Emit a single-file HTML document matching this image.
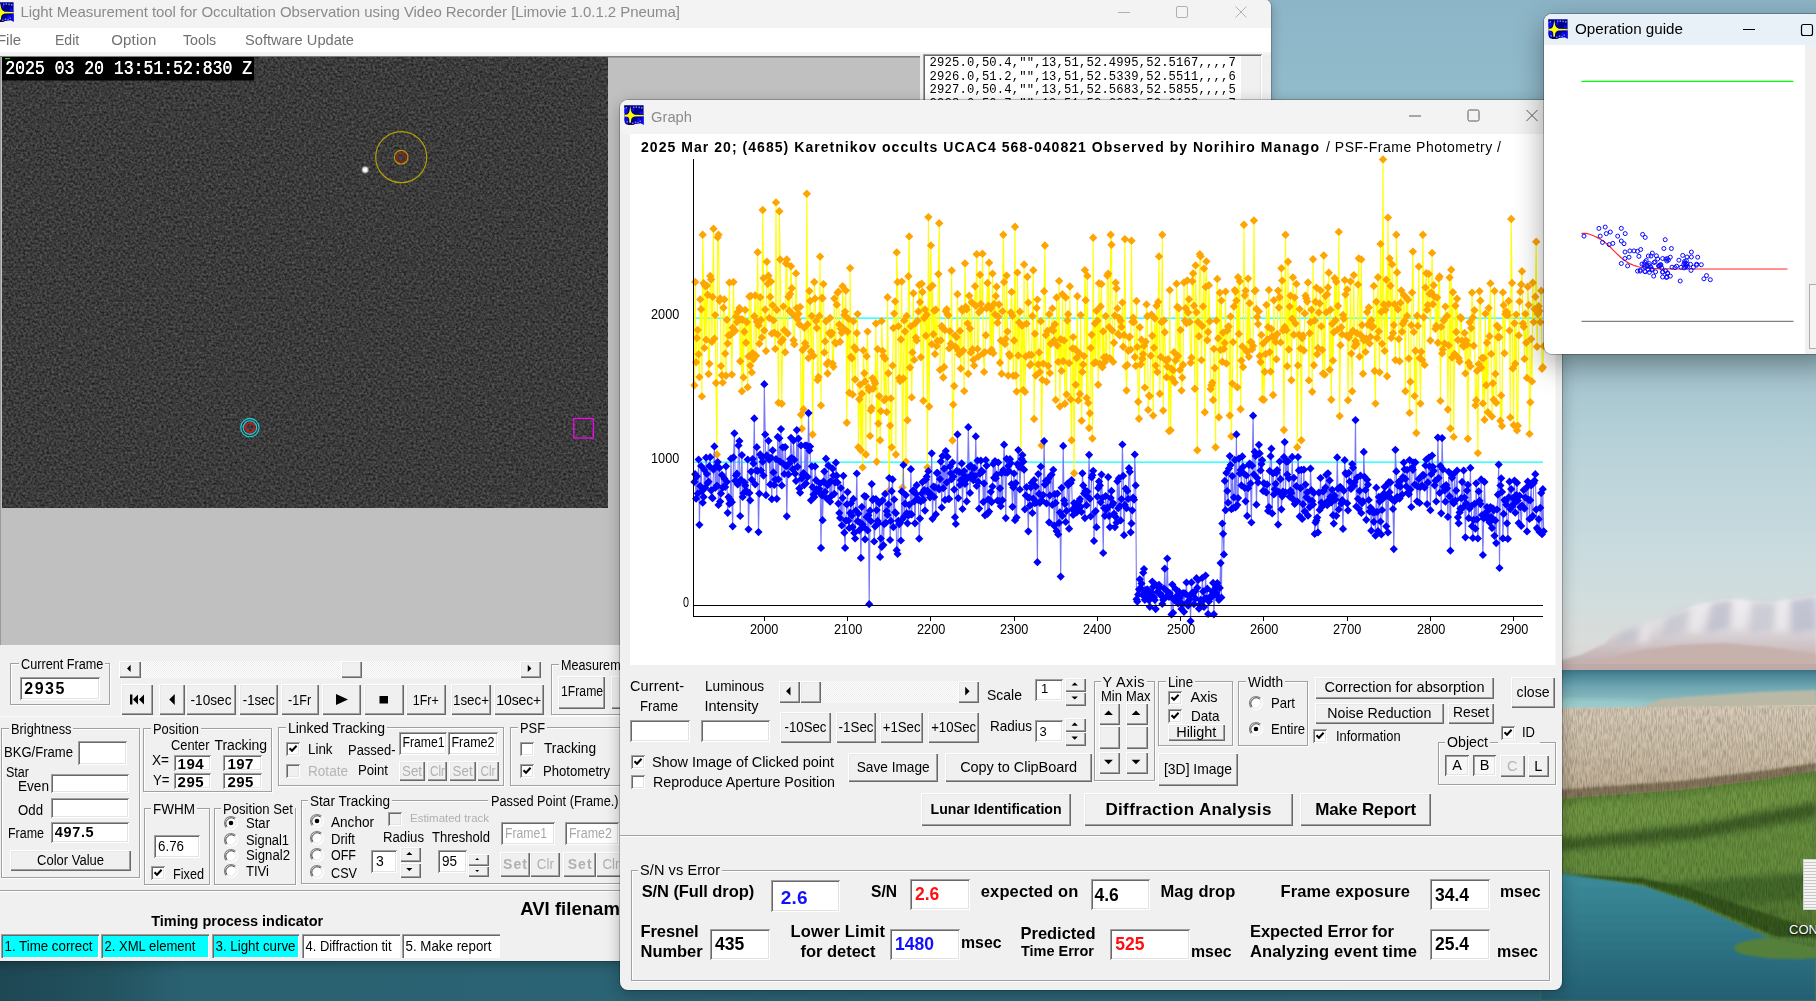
<!DOCTYPE html><html><head><meta charset="utf-8"><title>Limovie</title><style>
*{box-sizing:border-box;margin:0;padding:0}
html,body{width:1816px;height:1001px;overflow:hidden;background:#2b6373;font-family:"Liberation Sans",sans-serif;font-size:13px;}
body{position:relative}
div,svg{position:absolute}
span{display:block;white-space:nowrap}
.t{white-space:nowrap}
.btn{background:#f0f0f0;box-shadow:inset 1px 1px 0 #fff,inset -1px -1px 0 #696969,inset -2px -2px 0 #a0a0a0,inset 2px 2px 0 #e8e8e8;text-align:center;white-space:nowrap;overflow:hidden}
.btn span{width:100%;text-align:center}
.btn.pr{background:#f7f7f7;box-shadow:inset 1px 1px 0 #696969,inset -1px -1px 0 #fff,inset 2px 2px 0 #a0a0a0,inset -2px -2px 0 #e3e3e3}
.inp{background:#fff;box-shadow:inset 1px 1px 0 #a0a0a0,inset -1px -1px 0 #fff,inset 2px 2px 0 #696969,inset -2px -2px 0 #e3e3e3;overflow:hidden;white-space:nowrap;padding:2px}
.inp span{position:relative}
.inp.i2{box-shadow:inset 1px 1px 0 #a0a0a0,inset 2px 2px 0 #696969,inset -1px -1px 0 #fff}
.grp{border:1px solid #a0a0a0;box-shadow:1px 1px 0 #fff,inset 1px 1px 0 #fff}
.win{background:#f0f0f0;overflow:hidden;will-change:transform}
.sb{background:#f6f6f6;background-image:conic-gradient(#fff 25%,#ececec 0 50%,#fff 0 75%,#ececec 0);background-size:2px 2px}
</style></head><body><svg style="left:0;top:0" width="1816" height="1001" viewBox="0 0 1816 1001"><defs>
<linearGradient id="sky" x1="0" y1="0" x2="0" y2="1">
<stop offset="0" stop-color="#8cb5c7"/><stop offset="0.10" stop-color="#92bbcc"/><stop offset="0.355" stop-color="#9fc1cc"/>
<stop offset="0.45" stop-color="#b8d2d9"/><stop offset="0.55" stop-color="#c9dbde"/><stop offset="0.60" stop-color="#d2dddd"/><stop offset="0.64" stop-color="#d9dcda"/><stop offset="0.67" stop-color="#dcd5d3"/><stop offset="1" stop-color="#dcd5d3"/>
</linearGradient>
<linearGradient id="mt" x1="0" y1="0" x2="0" y2="1"><stop offset="0" stop-color="#eeecee"/><stop offset="0.45" stop-color="#dcd8dc"/><stop offset="0.75" stop-color="#c9babb"/><stop offset="1" stop-color="#bca7a6"/></linearGradient>
<linearGradient id="w1" x1="0" y1="0" x2="0" y2="1"><stop offset="0" stop-color="#3c7386"/><stop offset="0.12" stop-color="#4a8798"/><stop offset="0.4" stop-color="#6fa6b1"/><stop offset="0.8" stop-color="#8ebdc1"/><stop offset="1" stop-color="#9cc5c6"/></linearGradient>
<linearGradient id="tan" x1="0" y1="0" x2="0" y2="1"><stop offset="0" stop-color="#d8ccb8"/><stop offset="0.5" stop-color="#cdbea7"/><stop offset="0.8" stop-color="#c3b299"/><stop offset="1" stop-color="#b4a289"/></linearGradient>
<linearGradient id="gr" x1="0" y1="0" x2="0" y2="1"><stop offset="0" stop-color="#5f843a"/><stop offset="0.35" stop-color="#4c6f2c"/><stop offset="0.5" stop-color="#63883c"/><stop offset="1" stop-color="#466a2a"/></linearGradient>
<linearGradient id="w2" x1="0" y1="0" x2="0" y2="1"><stop offset="0" stop-color="#3d8d9b"/><stop offset="0.5" stop-color="#2f7687"/><stop offset="1" stop-color="#245f72"/></linearGradient>
<linearGradient id="bot" x1="0" y1="0" x2="1" y2="0"><stop offset="0" stop-color="#1e4754"/><stop offset="0.07" stop-color="#23525f"/><stop offset="0.12" stop-color="#2a6272"/><stop offset="1" stop-color="#2c6677"/></linearGradient>
<filter id="bl1"><feGaussianBlur stdDeviation="0.7"/></filter>
<filter id="grs" x="0" y="0" width="100%" height="100%" color-interpolation-filters="sRGB"><feTurbulence type="fractalNoise" baseFrequency="0.8 0.12" numOctaves="2" seed="5"/><feColorMatrix type="matrix" values="0 0 0 0 0  0 0 0 0 0  0 0 0 0 0  1.6 0 0 0 -0.55"/></filter>
<clipPath id="grclip"><polygon points="1540,708 1816,705 1816,948 1770,938 1732,921 1690,902 1644,886 1580,875 1540,871"/></clipPath>
<filter id="bl2"><feGaussianBlur stdDeviation="1.2"/></filter>
<filter id="bl4"><feGaussianBlur stdDeviation="3"/></filter>
</defs><rect x="0" y="0" width="1816" height="1001" fill="url(#sky)"/><g filter="url(#bl2)"><polygon points="1540,668 1562,660 1580,655 1604,644 1614,634 1622,631 1640,626 1666,617 1690,607 1710,602 1722,599 1732,599 1750,601 1776,602 1800,597 1816,595 1816,672 1540,672" fill="url(#mt)"/></g><g filter="url(#bl4)" opacity=".75"><polygon points="1622,632 1640,627 1636,640 1612,648" fill="#bfc0cb"/><polygon points="1666,618 1690,608 1684,632 1660,640" fill="#c3c4cf"/><polygon points="1712,603 1732,600 1728,628 1706,634" fill="#b9bccb"/><polygon points="1752,602 1776,603 1772,630 1750,634" fill="#c4c6d1"/><polygon points="1790,600 1816,596 1816,630 1792,634" fill="#b6bacb"/><polygon points="1642,627 1652,623 1648,642 1638,645" fill="#e9e7ea"/><polygon points="1694,607 1706,603 1700,630 1690,633" fill="#ecebee"/><polygon points="1736,600 1748,601 1744,628 1734,629" fill="#eeedf0"/><polygon points="1778,603 1788,601 1786,630 1776,631" fill="#ecebee"/></g><polygon filter="url(#bl2)" points="1540,669 1600,660 1640,650 1680,645 1723,643 1770,647 1816,654 1816,672 1540,672" fill="#c7b1ad"/><rect x="1540" y="664" width="276" height="7" fill="#bda8a6" opacity=".7" filter="url(#bl1)"/><rect x="1540" y="670" width="276" height="42" fill="url(#w1)"/><ellipse filter="url(#bl4)" cx="1590" cy="706" rx="70" ry="7" fill="#9fd0d0" opacity=".7"/><polygon filter="url(#bl2)" points="1660,699 1700,696 1760,692 1816,690 1816,710 1640,709" fill="#b9b9a6"/><polygon points="1540,708 1816,705 1816,773 1760,781 1680,791 1540,801" fill="url(#tan)"/><polygon filter="url(#bl2)" points="1540,791 1680,781 1760,771 1816,763 1816,773 1760,781 1680,791 1540,801" fill="#86765b"/><polygon points="1540,800 1680,790 1760,780 1816,771 1816,1001 1540,1001" fill="#5e8439"/><g filter="url(#bl4)"><polygon points="1540,806 1680,796 1816,778 1816,800 1700,822 1540,838" fill="#6f9643"/><polygon points="1540,842 1700,824 1816,802 1816,816 1700,838 1540,852" fill="#3f6126"/><polygon points="1540,856 1700,842 1816,822 1816,870 1700,880 1540,870" fill="#668e3d"/><polygon points="1640,886 1700,880 1816,872 1816,905 1740,912 1690,900" fill="#456a2a"/><polygon points="1700,905 1816,900 1816,940 1770,935" fill="#547a33"/></g><polygon filter="url(#bl2)" points="1540,871 1580,875 1644,886 1690,902 1732,921 1770,938 1816,948 1816,1001 1540,1001" fill="url(#w2)"/><polygon filter="url(#bl2)" points="1560,874 1644,884 1690,899 1732,918 1780,938 1816,944 1816,930 1740,905 1690,888 1640,878" fill="#35561f"/><ellipse filter="url(#bl2)" cx="1790" cy="948" rx="56" ry="11" fill="#55803a"/><rect x="1540" y="706" width="276" height="250" filter="url(#grs)" opacity=".26" clip-path="url(#grclip)"/><rect x="0" y="955" width="1540" height="46" fill="url(#bot)"/></svg><div class="" style="left:1803.0px;top:859.0px;width:20.0px;height:51.0px;background:#f4f4f4;border:1px solid #d0d0d0;background-image:repeating-linear-gradient(#f4f4f4 0 2px,#c8c8c8 2px 3px);"></div><div class="t" style="left:1789.0px;top:920.5px;height:17px;line-height:17px;font-size:13px;color:#fff;text-shadow:0 1px 2px #000;">CON</div><div class="win" style="left:-8px;top:-1px;width:1279px;height:962px;border-radius:8px;box-shadow:0 0 0 1px rgba(0,0,0,.18),0 3px 12px rgba(0,0,0,.28);"><div style="left:8px;top:1px;width:1271px;height:961px"><div class="" style="left:-8.0px;top:-1.0px;width:1280.0px;height:28.5px;background:#f3f3f3;"></div><div class="" style="left:-8.0px;top:27.5px;width:1280.0px;height:24.0px;background:#fff;"></div><div class="" style="left:-8.0px;top:51.5px;width:1280.0px;height:6.0px;background:linear-gradient(#f6f6f6,#ececec);"></div><svg style="left:-6px;top:1.5px" width="20" height="20" viewBox="0 0 20 20"><defs><clipPath id="icl"><path d="M0.5,0.3H19.6V19.8L17,18.2 11,19 9,19.8H4.5Q0.5,19.5 0.5,16Z"/></clipPath></defs><g clip-path="url(#icl)"><rect x="0" y="0" width="20" height="20" fill="#00008e"/><g fill="#0a0aff"><circle cx="1.8" cy="6" r="2.4"/><circle cx="8.8" cy="4.6" r="1.3"/><circle cx="17.3" cy="8" r="1.8"/><circle cx="2.2" cy="14.2" r="2.2"/><circle cx="15" cy="15" r="2"/><rect x="17.4" y="12" width="2.6" height="8"/><circle cx="12" cy="17.3" r="1.2"/></g><g fill="#7c86e8"><rect x="1.5" y="2" width="1.5" height="1.6"/><rect x="9" y="1.6" width="1.4" height="1.5"/><rect x="11.6" y="1.3" width="1.4" height="1.5"/><rect x="14.4" y="1.6" width="1.5" height="1.6"/><rect x="17" y="2" width="1.5" height="1.6"/><rect x="2.4" y="16.2" width="1.6" height="1.4"/><rect x="8" y="17.6" width="1.5" height="1.3"/><rect x="10.8" y="16.6" width="1.4" height="1.3"/><rect x="13.4" y="16.8" width="1.4" height="1.3"/><rect x="15.6" y="15.6" width="1.4" height="1.3"/></g><rect x="4" y="19" width="7" height="1" fill="#000"/><rect x="0" y="0" width="1.2" height="3" fill="#000"/><path d="M0,10.1 L3.2,9.6 Q5.2,8.6 5.5,6 L6.2,1 L7.1,6 Q7.6,8.8 10.5,9.7 L20,10.0 L20,11.3 L10.5,11.5 Q7.8,12.1 7.3,14 L6.8,17.8 L5.4,17.8 L5.2,14 Q4.8,12.2 3.2,11.7 L0,11.5 Z" fill="#ffff00"/></g></svg><div class="t" style="left:20.4px;top:1.6px;height:20px;line-height:20px;font-size:15px;color:#8b8b8b;letter-spacing:-0.059px;">Light Measurement tool for Occultation Observation using Video Recorder [Limovie 1.0.1.2 Pneuma]</div><div class="t" style="left:-3.0px;top:30.0px;height:20px;line-height:20px;font-size:15px;color:#707070;letter-spacing:-0.057px;">File</div><div class="t" style="left:54.5px;top:30.0px;height:20px;line-height:20px;font-size:15px;color:#707070;transform:scaleX(0.9363);transform-origin:left center;">Edit</div><div class="t" style="left:111.2px;top:30.0px;height:20px;line-height:20px;font-size:15px;color:#707070;letter-spacing:0.201px;">Option</div><div class="t" style="left:182.8px;top:30.0px;height:20px;line-height:20px;font-size:15px;color:#707070;transform:scaleX(0.9481);transform-origin:left center;">Tools</div><div class="t" style="left:245.0px;top:30.0px;height:20px;line-height:20px;font-size:15px;color:#707070;transform:scaleX(0.9756);transform-origin:left center;">Software Update</div><svg style="left:0;top:0" width="1816" height="200" viewBox="0 0 1816 200" fill="none" stroke="#b0b0b0" stroke-width="1"><path d="M1118 12.5 h12"/><rect x="1176.5" y="6.5" width="11" height="11" rx="1.5"/><path d="M1235.5 6.5 l11 11 M1246.5 6.5 l-11 11"/></svg><div class="" style="left:-1.0px;top:56.0px;width:920.5px;height:588.5px;background:#c0c0c0;box-shadow:inset 1px 1px 0 #808080, inset 2px 2px 0 #9a9a9a;"></div><svg style="left:1.5px;top:57px" width="606.0" height="451" viewBox="0 0 606.0 451"><defs><filter id="nz" x="0" y="0" width="100%" height="100%" color-interpolation-filters="sRGB">
<feTurbulence type="fractalNoise" baseFrequency="0.42" numOctaves="2" seed="7" result="n"/>
<feColorMatrix type="matrix" values="0.36 0 0 0 0.052  0.36 0 0 0 0.052  0.36 0 0 0 0.052  0 0 0 0 1"/>
</filter>
<radialGradient id="star"><stop offset="0" stop-color="#fff"/><stop offset="0.45" stop-color="#fff" stop-opacity=".95"/><stop offset="1" stop-color="#fff" stop-opacity="0"/></radialGradient>
</defs><rect x="0" y="0" width="606.0" height="451" fill="#3a3a3a"/><rect x="0" y="0" width="606.0" height="451" filter="url(#nz)"/><rect x="0" y="0" width="252" height="23.5" fill="#000"/><rect x="3" y="1" width="5" height="1.2" fill="#20d020"/><circle cx="363.2" cy="112.80000000000001" r="4.2" fill="url(#star)"/><circle cx="399.2" cy="100.19999999999999" r="25.5" fill="none" stroke="#b0a200" stroke-width="1.2"/><circle cx="399.2" cy="100.19999999999999" r="6.8" fill="none" stroke="#b0a200" stroke-width="1.2"/><circle cx="399.2" cy="100.19999999999999" r="4.6" fill="none" stroke="#b81414" stroke-width="1.3"/><circle cx="247.9" cy="370.6" r="9.2" fill="none" stroke="#18d4dc" stroke-width="1.1"/><circle cx="247.9" cy="370.6" r="6.8" fill="none" stroke="#18d4dc" stroke-width="1.1"/><circle cx="247.9" cy="370.6" r="4.4" fill="none" stroke="#e01010" stroke-width="1.6"/><rect x="571.8" y="361.5" width="19.5" height="19.5" fill="none" stroke="#ff00ff" stroke-width="1.2"/></svg><div class="t" style="left:4.5px;top:57.1px;height:23px;line-height:23px;font-size:17.5px;color:#fff;font-family:'Liberation Mono',monospace;transform:scaleY(1.12) scaleX(0.9408);transform-origin:left center;text-shadow:0.4px 0 0 #fff;">2025 03 20 13:51:52:830 Z</div><div class="inp" style="left:923.0px;top:54.0px;width:339.0px;height:60.0px;"></div><div class="" style="left:1241.0px;top:56.0px;width:19.0px;height:50.0px;background:#f0f0f0;"></div><div class="t" style="left:929.6px;top:55.4px;height:16px;line-height:16px;font-size:12.2px;color:#000;font-family:'Liberation Mono',monospace;letter-spacing:0.156px;">2925.0,50.4,"",13,51,52.4995,52.5167,,,,7</div><div class="t" style="left:929.6px;top:68.9px;height:16px;line-height:16px;font-size:12.2px;color:#000;font-family:'Liberation Mono',monospace;letter-spacing:0.156px;">2926.0,51.2,"",13,51,52.5339,52.5511,,,,6</div><div class="t" style="left:929.6px;top:82.4px;height:16px;line-height:16px;font-size:12.2px;color:#000;font-family:'Liberation Mono',monospace;letter-spacing:0.156px;">2927.0,50.4,"",13,51,52.5683,52.5855,,,,5</div><div class="t" style="left:929.6px;top:95.9px;height:16px;line-height:16px;font-size:12.2px;color:#000;font-family:'Liberation Mono',monospace;letter-spacing:0.156px;">2928.0,50.7,"",13,51,52.6027,52.6199,,,,7</div><div class="grp" style="left:10.2px;top:662.6px;width:99.4px;height:42.6px;"></div><div class="" style="left:18.6px;top:655.6px;width:86.4px;height:16.0px;position:absolute;background:#f0f0f0;"></div><div class="t" style="left:20.6px;top:654.6px;height:18px;line-height:18px;font-size:14px;color:#000;transform:scaleX(0.9053);transform-origin:left center;">Current Frame</div><div class="inp" style="left:20.3px;top:676.6px;width:79.3px;height:23.4px;background:#fff;"><span style="font-size:16px;color:#000;line-height:19.4px;padding-left:2px;font-weight:bold;letter-spacing:1.469px;">2935</span></div><div class="sb" style="left:119.3px;top:660.8px;width:422.0px;height:16.8px;"></div><div class="btn" style="left:119.3px;top:660.8px;width:21.7px;height:16.8px;"><svg style="position:absolute;left:0px;top:0px;left:0;top:0;" width="21.700000000000003" height="16.800000000000068" viewBox="0 0 21.700000000000003 16.800000000000068"><polygon points="8.05,7.400000000000034 11.650000000000002,3.800000000000034 11.650000000000002,11.000000000000034" fill="#000"/></svg></div><div class="btn" style="left:520.2px;top:660.8px;width:21.1px;height:16.8px;"><svg style="position:absolute;left:0px;top:0px;left:0;top:0;" width="21.09999999999991" height="16.800000000000068" viewBox="0 0 21.09999999999991 16.800000000000068"><polygon points="11.349999999999955,7.400000000000034 7.749999999999955,3.800000000000034 7.749999999999955,11.000000000000034" fill="#000"/></svg></div><div class="btn" style="left:341.4px;top:660.8px;width:20.8px;height:16.8px;"></div><div class="btn" style="left:121.2px;top:684.0px;width:32.1px;height:31.4px;"><svg style="position:absolute;left:0px;top:0px;left:0;top:0;" width="32" height="31" viewBox="0 0 32 31"><rect x="9" y="10.5" width="2.4" height="10" fill="#000"/><polygon points="12.0,15.5 17.0,10.5 17.0,20.5" fill="#000"/><polygon points="18.0,15.5 23.0,10.5 23.0,20.5" fill="#000"/></svg></div><div class="btn" style="left:158.6px;top:684.0px;width:26.8px;height:31.4px;"><svg style="position:absolute;left:0px;top:0px;left:0;top:0;" width="27" height="31" viewBox="0 0 27 31"><polygon points="10.25,15.5 15.75,10.0 15.75,21.0" fill="#000"/></svg></div><div class="btn" style="left:186.0px;top:684.0px;width:50.0px;height:31.4px;"><span style="font-size:14px;color:#000;line-height:32.6px;transform:scaleX(0.9757);transform-origin:center center;">-10sec</span></div><div class="btn" style="left:238.8px;top:684.0px;width:39.6px;height:31.4px;"><span style="font-size:14px;color:#000;line-height:32.6px;transform:scaleX(0.9347);transform-origin:center center;">-1sec</span></div><div class="btn" style="left:281.4px;top:684.0px;width:37.2px;height:31.4px;"><span style="font-size:14px;color:#000;line-height:32.6px;transform:scaleX(0.8963);transform-origin:center center;">-1Fr</span></div><div class="btn" style="left:321.5px;top:684.0px;width:39.7px;height:31.4px;"><svg style="position:absolute;left:0px;top:0px;left:0;top:0;" width="40" height="31" viewBox="0 0 40 31"><polygon points="14,10 14,21 26,15.5" fill="#000"/></svg></div><div class="btn" style="left:363.6px;top:684.0px;width:40.2px;height:31.4px;"><svg style="position:absolute;left:0px;top:0px;left:0;top:0;" width="40" height="31" viewBox="0 0 40 31"><rect x="15.5" y="12" width="8.5" height="7.5" fill="#000"/></svg></div><div class="btn" style="left:406.4px;top:684.0px;width:39.6px;height:31.4px;"><span style="font-size:14px;color:#000;line-height:32.6px;transform:scaleX(0.8911);transform-origin:center center;">1Fr+</span></div><div class="btn" style="left:451.0px;top:684.0px;width:40.0px;height:31.4px;"><span style="font-size:14px;color:#000;line-height:32.6px;transform:scaleX(0.9537);transform-origin:center center;">1sec+</span></div><div class="btn" style="left:494.0px;top:684.0px;width:49.6px;height:31.4px;"><span style="font-size:14px;color:#000;line-height:32.6px;letter-spacing:-0.107px;margin-left:-0.053px;">10sec+</span></div><div class="grp" style="left:550.5px;top:663.8px;width:149.5px;height:51.2px;"></div><div class="" style="left:558.7px;top:656.8px;width:81.2px;height:16.0px;position:absolute;background:#f0f0f0;"></div><div class="t" style="left:560.7px;top:655.8px;height:18px;line-height:18px;font-size:14px;color:#000;transform:scaleX(0.9019);transform-origin:left center;">Measurement</div><div class="btn" style="left:557.5px;top:676.0px;width:47.5px;height:33.0px;"><span style="font-size:14px;color:#000;line-height:30.0px;transform:scaleX(0.8707);transform-origin:center center;">1Frame</span></div><div class="btn" style="left:610.6px;top:676.0px;width:49.4px;height:33.0px;"><span style="font-size:14px;color:#000;line-height:33.0px;">Dat</span></div><div class="" style="left:-2.0px;top:716.4px;width:640.0px;height:1.0px;background:#fbfbfb;"></div><div class="grp" style="left:1.0px;top:727.6px;width:138.7px;height:150.9px;"></div><div class="" style="left:8.6px;top:720.6px;width:64.5px;height:16.0px;position:absolute;background:#f0f0f0;"></div><div class="t" style="left:10.6px;top:719.6px;height:18px;line-height:18px;font-size:14px;color:#000;transform:scaleX(0.9147);transform-origin:left center;">Brightness</div><div class="t" style="left:3.5px;top:743.0px;height:18px;line-height:18px;font-size:14px;color:#000;transform:scaleX(0.9336);transform-origin:left center;">BKG/Frame</div><div class="inp" style="left:78.0px;top:741.4px;width:49.2px;height:23.6px;background:#fff;"></div><div class="t" style="left:5.6px;top:763.0px;height:18px;line-height:18px;font-size:14px;color:#000;transform:scaleX(0.8958);transform-origin:left center;">Star</div><div class="t" style="left:18.0px;top:777.0px;height:18px;line-height:18px;font-size:14px;color:#000;transform:scaleX(0.9715);transform-origin:left center;">Even</div><div class="inp" style="left:50.7px;top:773.7px;width:78.8px;height:19.5px;background:#fff;"></div><div class="t" style="left:18.0px;top:801.0px;height:18px;line-height:18px;font-size:14px;color:#000;transform:scaleX(0.9448);transform-origin:left center;">Odd</div><div class="inp" style="left:50.7px;top:798.0px;width:78.8px;height:19.5px;background:#fff;"></div><div class="t" style="left:8.0px;top:824.0px;height:18px;line-height:18px;font-size:14px;color:#000;transform:scaleX(0.8900);transform-origin:left center;">Frame</div><div class="inp" style="left:50.7px;top:821.8px;width:78.8px;height:21.6px;background:#fff;"><span style="font-size:14.5px;color:#000;line-height:17.6px;padding-left:2px;font-weight:bold;letter-spacing:0.679px;">497.5</span></div><div class="btn" style="left:10.2px;top:850.0px;width:121.1px;height:21.2px;"><span style="font-size:14px;color:#000;line-height:21.2px;transform:scaleX(0.9291);transform-origin:center center;">Color Value</span></div><div class="grp" style="left:143.0px;top:727.6px;width:129.2px;height:64.8px;"></div><div class="" style="left:151.0px;top:720.6px;width:50.0px;height:16.0px;position:absolute;background:#f0f0f0;"></div><div class="t" style="left:153.0px;top:719.6px;height:18px;line-height:18px;font-size:14px;color:#000;transform:scaleX(0.9236);transform-origin:left center;">Position</div><div class="t" style="left:170.6px;top:735.8px;height:18px;line-height:18px;font-size:14px;color:#000;transform:scaleX(0.9162);transform-origin:left center;">Center</div><div class="t" style="left:214.5px;top:735.8px;height:18px;line-height:18px;font-size:14px;color:#000;letter-spacing:-0.095px;">Tracking</div><div class="t" style="left:152.0px;top:750.5px;height:18px;line-height:18px;font-size:14px;color:#000;transform:scaleX(0.9707);transform-origin:left center;">X=</div><div class="t" style="left:152.5px;top:771.0px;height:18px;line-height:18px;font-size:14px;color:#000;transform:scaleX(0.9421);transform-origin:left center;">Y=</div><div class="inp" style="left:173.6px;top:754.5px;width:37.9px;height:16.9px;background:#fff;"><span style="font-size:15px;color:#000;line-height:13.9px;padding-left:2px;font-weight:bold;letter-spacing:0.486px;">194</span></div><div class="inp" style="left:223.4px;top:754.5px;width:38.3px;height:16.9px;background:#fff;"><span style="font-size:15px;color:#000;line-height:13.9px;padding-left:2px;font-weight:bold;letter-spacing:0.486px;">197</span></div><div class="inp" style="left:173.6px;top:772.5px;width:37.9px;height:16.7px;background:#fff;"><span style="font-size:15px;color:#000;line-height:13.7px;padding-left:2px;font-weight:bold;letter-spacing:0.486px;">295</span></div><div class="inp" style="left:223.4px;top:772.5px;width:38.3px;height:16.7px;background:#fff;"><span style="font-size:15px;color:#000;line-height:13.7px;padding-left:2px;font-weight:bold;letter-spacing:0.486px;">295</span></div><div class="grp" style="left:278.0px;top:727.2px;width:225.5px;height:58.5px;"></div><div class="" style="left:286.0px;top:720.2px;width:101.0px;height:16.0px;position:absolute;background:#f0f0f0;"></div><div class="t" style="left:288.0px;top:719.2px;height:18px;line-height:18px;font-size:14px;color:#000;letter-spacing:-0.075px;">Linked Tracking</div><div class="inp" style="left:285.5px;top:741.8px;width:14.0px;height:14.0px;background:#fff;"><svg width="10" height="10" viewBox="0 0 10 10" style="position:absolute;left:2px;top:2px"><path d="M1.5 4.2 L4 6.8 L8.6 1.8" fill="none" stroke="#000" stroke-width="2"/></svg></div><div class="t" style="left:308.0px;top:739.5px;height:18px;line-height:18px;font-size:14px;color:#000;transform:scaleX(0.9539);transform-origin:left center;">Link</div><div class="t" style="left:348.3px;top:740.5px;height:18px;line-height:18px;font-size:14px;color:#000;transform:scaleX(0.9249);transform-origin:left center;">Passed-</div><div class="inp" style="left:398.5px;top:731.8px;width:48.9px;height:22.8px;background:#fff;"><span style="font-size:14px;color:#000;line-height:16.8px;padding-left:1.5px;transform:scaleX(0.8707);transform-origin:1.5px center;">Frame1</span></div><div class="inp" style="left:448.4px;top:731.8px;width:49.2px;height:22.8px;background:#fff;"><span style="font-size:14px;color:#000;line-height:16.8px;padding-left:1.5px;transform:scaleX(0.8915);transform-origin:1.5px center;">Frame2</span></div><div class="inp" style="left:285.5px;top:764.2px;width:14.0px;height:14.0px;background:#f0f0f0;"></div><div class="t" style="left:308.0px;top:761.5px;height:18px;line-height:18px;font-size:14px;color:#b4b4b4;transform:scaleX(0.9697);transform-origin:left center;">Rotate</div><div class="t" style="left:358.0px;top:760.5px;height:18px;line-height:18px;font-size:14px;color:#000;transform:scaleX(0.9401);transform-origin:left center;">Point</div><div class="btn" style="left:398.5px;top:761.0px;width:26.1px;height:20.2px;"><span style="font-size:14px;color:#b0b0b0;line-height:20.2px;transform:scaleX(0.9518);transform-origin:center center;">Set</span></div><div class="btn" style="left:426.6px;top:761.0px;width:20.8px;height:20.2px;"><span style="font-size:14px;color:#b0b0b0;line-height:20.2px;transform:scaleX(0.8388);transform-origin:center center;">Clr</span></div><div class="btn" style="left:449.0px;top:761.0px;width:27.2px;height:20.2px;"><span style="font-size:14px;color:#b0b0b0;line-height:20.2px;transform:scaleX(0.9518);transform-origin:center center;">Set</span></div><div class="btn" style="left:477.2px;top:761.0px;width:21.8px;height:20.2px;"><span style="font-size:14px;color:#b0b0b0;line-height:20.2px;transform:scaleX(0.8388);transform-origin:center center;">Clr</span></div><div class="grp" style="left:510.3px;top:727.2px;width:189.7px;height:58.5px;"></div><div class="" style="left:518.0px;top:720.2px;width:29.0px;height:16.0px;position:absolute;background:#f0f0f0;"></div><div class="t" style="left:520.0px;top:719.2px;height:18px;line-height:18px;font-size:14px;color:#000;transform:scaleX(0.9182);transform-origin:left center;">PSF</div><div class="inp" style="left:520.2px;top:741.8px;width:14.0px;height:14.0px;background:#fff;"></div><div class="t" style="left:544.0px;top:739.0px;height:18px;line-height:18px;font-size:14px;color:#000;transform:scaleX(0.9781);transform-origin:left center;">Tracking</div><div class="inp" style="left:520.2px;top:764.2px;width:14.0px;height:14.0px;background:#fff;"><svg width="10" height="10" viewBox="0 0 10 10" style="position:absolute;left:2px;top:2px"><path d="M1.5 4.2 L4 6.8 L8.6 1.8" fill="none" stroke="#000" stroke-width="2"/></svg></div><div class="t" style="left:543.0px;top:761.5px;height:18px;line-height:18px;font-size:14px;color:#000;transform:scaleX(0.9359);transform-origin:left center;">Photometry</div><div class="grp" style="left:143.6px;top:807.6px;width:66.1px;height:77.1px;"></div><div class="" style="left:151.0px;top:800.6px;width:46.0px;height:16.0px;position:absolute;background:#f0f0f0;"></div><div class="t" style="left:153.0px;top:799.6px;height:18px;line-height:18px;font-size:14px;color:#000;transform:scaleX(0.9647);transform-origin:left center;">FWHM</div><div class="inp" style="left:154.2px;top:835.4px;width:45.4px;height:22.9px;background:#fff;"><span style="font-size:14px;color:#000;line-height:18.9px;padding-left:2px;transform:scaleX(0.9542);transform-origin:2px center;">6.76</span></div><div class="" style="left:148.0px;top:864.0px;width:60.0px;height:20.0px;background:#f0f0f0;"></div><div class="inp" style="left:150.7px;top:866.3px;width:14.0px;height:14.0px;background:#fff;"><svg width="10" height="10" viewBox="0 0 10 10" style="position:absolute;left:2px;top:2px"><path d="M1.5 4.2 L4 6.8 L8.6 1.8" fill="none" stroke="#000" stroke-width="2"/></svg></div><div class="t" style="left:173.0px;top:864.5px;height:18px;line-height:18px;font-size:14px;color:#000;transform:scaleX(0.9055);transform-origin:left center;">Fixed</div><div class="grp" style="left:213.6px;top:807.6px;width:82.4px;height:77.1px;"></div><div class="" style="left:221.0px;top:800.6px;width:74.0px;height:16.0px;position:absolute;background:#f0f0f0;"></div><div class="t" style="left:223.0px;top:799.6px;height:18px;line-height:18px;font-size:14px;color:#000;transform:scaleX(0.9370);transform-origin:left center;">Position Set</div><svg style="position:absolute;left:223.4px;top:815.2px" width="16" height="16" viewBox="0 0 16 16"><circle cx="8" cy="8" r="6" fill="#fff"/><path d="M3.4 12.6 A6.5 6.5 0 0 1 12.6 3.4" fill="none" stroke="#808080" stroke-width="1.2"/><path d="M12.6 3.4 A6.5 6.5 0 0 1 3.4 12.6" fill="none" stroke="#fff" stroke-width="1.2"/><path d="M4.2 11.8 A5.4 5.4 0 0 1 11.8 4.2" fill="none" stroke="#404040" stroke-width="1"/><path d="M11.8 4.2 A5.4 5.4 0 0 1 4.2 11.8" fill="none" stroke="#e3e3e3" stroke-width="1"/><circle cx="8" cy="8" r="2.3" fill="#000"/></svg><div class="t" style="left:245.5px;top:814.0px;height:18px;line-height:18px;font-size:14px;color:#000;transform:scaleX(0.9347);transform-origin:left center;">Star</div><svg style="position:absolute;left:223.4px;top:831.7px" width="16" height="16" viewBox="0 0 16 16"><circle cx="8" cy="8" r="6" fill="#fff"/><path d="M3.4 12.6 A6.5 6.5 0 0 1 12.6 3.4" fill="none" stroke="#808080" stroke-width="1.2"/><path d="M12.6 3.4 A6.5 6.5 0 0 1 3.4 12.6" fill="none" stroke="#fff" stroke-width="1.2"/><path d="M4.2 11.8 A5.4 5.4 0 0 1 11.8 4.2" fill="none" stroke="#404040" stroke-width="1"/><path d="M11.8 4.2 A5.4 5.4 0 0 1 4.2 11.8" fill="none" stroke="#e3e3e3" stroke-width="1"/></svg><div class="t" style="left:245.5px;top:830.5px;height:18px;line-height:18px;font-size:14px;color:#000;transform:scaleX(0.9207);transform-origin:left center;">Signal1</div><svg style="position:absolute;left:223.4px;top:847.5px" width="16" height="16" viewBox="0 0 16 16"><circle cx="8" cy="8" r="6" fill="#fff"/><path d="M3.4 12.6 A6.5 6.5 0 0 1 12.6 3.4" fill="none" stroke="#808080" stroke-width="1.2"/><path d="M12.6 3.4 A6.5 6.5 0 0 1 3.4 12.6" fill="none" stroke="#fff" stroke-width="1.2"/><path d="M4.2 11.8 A5.4 5.4 0 0 1 11.8 4.2" fill="none" stroke="#404040" stroke-width="1"/><path d="M11.8 4.2 A5.4 5.4 0 0 1 4.2 11.8" fill="none" stroke="#e3e3e3" stroke-width="1"/></svg><div class="t" style="left:245.5px;top:846.3px;height:18px;line-height:18px;font-size:14px;color:#000;transform:scaleX(0.9421);transform-origin:left center;">Signal2</div><svg style="position:absolute;left:223.4px;top:863.4px" width="16" height="16" viewBox="0 0 16 16"><circle cx="8" cy="8" r="6" fill="#fff"/><path d="M3.4 12.6 A6.5 6.5 0 0 1 12.6 3.4" fill="none" stroke="#808080" stroke-width="1.2"/><path d="M12.6 3.4 A6.5 6.5 0 0 1 3.4 12.6" fill="none" stroke="#fff" stroke-width="1.2"/><path d="M4.2 11.8 A5.4 5.4 0 0 1 11.8 4.2" fill="none" stroke="#404040" stroke-width="1"/><path d="M11.8 4.2 A5.4 5.4 0 0 1 4.2 11.8" fill="none" stroke="#e3e3e3" stroke-width="1"/></svg><div class="t" style="left:245.5px;top:862.2px;height:18px;line-height:18px;font-size:14px;color:#000;transform:scaleX(0.9336);transform-origin:left center;">TIVi</div><div class="grp" style="left:300.7px;top:799.8px;width:399.3px;height:84.7px;"></div><div class="" style="left:308.0px;top:792.8px;width:84.0px;height:16.0px;position:absolute;background:#f0f0f0;"></div><div class="t" style="left:310.0px;top:791.8px;height:18px;line-height:18px;font-size:14px;color:#000;transform:scaleX(0.9700);transform-origin:left center;">Star Tracking</div><div class="" style="left:488.0px;top:791.0px;width:134.0px;height:17.0px;background:#f0f0f0;"></div><div class="t" style="left:490.5px;top:792.0px;height:18px;line-height:18px;font-size:14px;color:#000;transform:scaleX(0.9104);transform-origin:left center;">Passed Point (Frame.)</div><svg style="position:absolute;left:308.6px;top:812.8px" width="16" height="16" viewBox="0 0 16 16"><circle cx="8" cy="8" r="6" fill="#fff"/><path d="M3.4 12.6 A6.5 6.5 0 0 1 12.6 3.4" fill="none" stroke="#808080" stroke-width="1.2"/><path d="M12.6 3.4 A6.5 6.5 0 0 1 3.4 12.6" fill="none" stroke="#fff" stroke-width="1.2"/><path d="M4.2 11.8 A5.4 5.4 0 0 1 11.8 4.2" fill="none" stroke="#404040" stroke-width="1"/><path d="M11.8 4.2 A5.4 5.4 0 0 1 4.2 11.8" fill="none" stroke="#e3e3e3" stroke-width="1"/><circle cx="8" cy="8" r="2.3" fill="#000"/></svg><div class="t" style="left:330.5px;top:812.6px;height:18px;line-height:18px;font-size:14px;color:#000;transform:scaleX(0.9694);transform-origin:left center;">Anchor</div><svg style="position:absolute;left:308.6px;top:829.7px" width="16" height="16" viewBox="0 0 16 16"><circle cx="8" cy="8" r="6" fill="#fff"/><path d="M3.4 12.6 A6.5 6.5 0 0 1 12.6 3.4" fill="none" stroke="#808080" stroke-width="1.2"/><path d="M12.6 3.4 A6.5 6.5 0 0 1 3.4 12.6" fill="none" stroke="#fff" stroke-width="1.2"/><path d="M4.2 11.8 A5.4 5.4 0 0 1 11.8 4.2" fill="none" stroke="#404040" stroke-width="1"/><path d="M11.8 4.2 A5.4 5.4 0 0 1 4.2 11.8" fill="none" stroke="#e3e3e3" stroke-width="1"/></svg><div class="t" style="left:330.5px;top:829.5px;height:18px;line-height:18px;font-size:14px;color:#000;transform:scaleX(0.9352);transform-origin:left center;">Drift</div><svg style="position:absolute;left:308.6px;top:846.5px" width="16" height="16" viewBox="0 0 16 16"><circle cx="8" cy="8" r="6" fill="#fff"/><path d="M3.4 12.6 A6.5 6.5 0 0 1 12.6 3.4" fill="none" stroke="#808080" stroke-width="1.2"/><path d="M12.6 3.4 A6.5 6.5 0 0 1 3.4 12.6" fill="none" stroke="#fff" stroke-width="1.2"/><path d="M4.2 11.8 A5.4 5.4 0 0 1 11.8 4.2" fill="none" stroke="#404040" stroke-width="1"/><path d="M11.8 4.2 A5.4 5.4 0 0 1 4.2 11.8" fill="none" stroke="#e3e3e3" stroke-width="1"/></svg><div class="t" style="left:330.5px;top:846.3px;height:18px;line-height:18px;font-size:14px;color:#000;transform:scaleX(0.8931);transform-origin:left center;">OFF</div><svg style="position:absolute;left:308.6px;top:863.8px" width="16" height="16" viewBox="0 0 16 16"><circle cx="8" cy="8" r="6" fill="#fff"/><path d="M3.4 12.6 A6.5 6.5 0 0 1 12.6 3.4" fill="none" stroke="#808080" stroke-width="1.2"/><path d="M12.6 3.4 A6.5 6.5 0 0 1 3.4 12.6" fill="none" stroke="#fff" stroke-width="1.2"/><path d="M4.2 11.8 A5.4 5.4 0 0 1 11.8 4.2" fill="none" stroke="#404040" stroke-width="1"/><path d="M11.8 4.2 A5.4 5.4 0 0 1 4.2 11.8" fill="none" stroke="#e3e3e3" stroke-width="1"/></svg><div class="t" style="left:330.5px;top:863.6px;height:18px;line-height:18px;font-size:14px;color:#000;transform:scaleX(0.9032);transform-origin:left center;">CSV</div><div class="inp" style="left:388.0px;top:811.7px;width:14.0px;height:14.0px;background:#f0f0f0;"></div><div class="t" style="left:410.0px;top:810.5px;height:15px;line-height:15px;font-size:11.5px;color:#b0b0b0;letter-spacing:-0.018px;">Estimated track</div><div class="t" style="left:383.0px;top:828.0px;height:18px;line-height:18px;font-size:14px;color:#000;transform:scaleX(0.9408);transform-origin:left center;">Radius</div><div class="t" style="left:431.6px;top:828.0px;height:18px;line-height:18px;font-size:14px;color:#000;transform:scaleX(0.9316);transform-origin:left center;">Threshold</div><div class="inp" style="left:371.0px;top:850.4px;width:26.0px;height:22.4px;background:#fff;"><span style="font-size:14px;color:#000;line-height:18.4px;padding-left:3px;">3</span></div><div class="btn" style="left:400.4px;top:847.4px;width:20.6px;height:15.1px;"><svg style="position:absolute;left:0px;top:0px;left:0;top:0;" width="20.600000000000023" height="15.050000000000068" viewBox="0 0 20.600000000000023 15.050000000000068"><polygon points="9.300000000000011,4.975000000000034 6.200000000000012,8.075000000000035 12.400000000000011,8.075000000000035" fill="#000"/></svg></div><div class="btn" style="left:400.4px;top:862.5px;width:20.6px;height:15.0px;"><svg style="position:absolute;left:0px;top:0px;left:0;top:0;" width="20.600000000000023" height="15.049999999999955" viewBox="0 0 20.600000000000023 15.049999999999955"><polygon points="9.300000000000011,8.074999999999978 6.200000000000012,4.974999999999977 12.400000000000011,4.974999999999977" fill="#000"/></svg></div><div class="inp" style="left:438.0px;top:850.4px;width:29.0px;height:22.4px;background:#fff;"><span style="font-size:14px;color:#000;line-height:18.4px;padding-left:2px;transform:scaleX(0.9632);transform-origin:2px center;">95</span></div><div class="btn" style="left:468.3px;top:853.7px;width:20.4px;height:11.9px;"><svg style="position:absolute;left:0px;top:0px;left:0;top:0;" width="20.399999999999977" height="11.899999999999977" viewBox="0 0 20.399999999999977 11.899999999999977"><polygon points="9.199999999999989,3.9499999999999886 7.199999999999989,5.949999999999989 11.199999999999989,5.949999999999989" fill="#000"/></svg></div><div class="btn" style="left:468.3px;top:865.6px;width:20.4px;height:11.9px;"><svg style="position:absolute;left:0px;top:0px;left:0;top:0;" width="20.399999999999977" height="11.899999999999977" viewBox="0 0 20.399999999999977 11.899999999999977"><polygon points="9.199999999999989,5.949999999999989 7.199999999999989,3.9499999999999886 11.199999999999989,3.9499999999999886" fill="#000"/></svg></div><div class="inp" style="left:501.0px;top:821.6px;width:54.0px;height:23.4px;background:#fff;"><span style="font-size:14px;color:#a8a8a8;line-height:19.4px;padding-left:2px;transform:scaleX(0.8707);transform-origin:2px center;">Frame1</span></div><div class="inp" style="left:565.4px;top:821.6px;width:54.1px;height:23.4px;background:#fff;"><span style="font-size:14px;color:#a8a8a8;line-height:19.4px;padding-left:2px;transform:scaleX(0.8915);transform-origin:2px center;">Frame2</span></div><div class="btn" style="left:500.4px;top:851.8px;width:29.3px;height:25.2px;"><span style="font-size:14px;color:#b0b0b0;line-height:25.2px;font-weight:bold;letter-spacing:1.107px;margin-left:0.553px;">Set</span></div><div class="btn" style="left:529.7px;top:851.8px;width:30.7px;height:25.2px;"><span style="font-size:14px;color:#b0b0b0;line-height:25.2px;transform:scaleX(0.9506);transform-origin:center center;">Clr</span></div><div class="btn" style="left:563.4px;top:851.8px;width:32.6px;height:25.2px;"><span style="font-size:14px;color:#b0b0b0;line-height:25.2px;font-weight:bold;letter-spacing:1.107px;margin-left:0.553px;">Set</span></div><div class="btn" style="left:596.0px;top:851.8px;width:30.0px;height:25.2px;"><span style="font-size:14px;color:#b0b0b0;line-height:25.2px;transform:scaleX(0.9506);transform-origin:center center;">Clr</span></div><div class="" style="left:-2.0px;top:890.0px;width:642.0px;height:2.0px;border-top:1px solid #a0a0a0;border-bottom:1px solid #fff;"></div><div class="t" style="left:520.2px;top:896.9px;height:24px;line-height:24px;font-size:18.5px;color:#000;font-weight:bold;letter-spacing:0.031px;">AVI filename</div><div class="t" style="left:151.2px;top:912.2px;height:19px;line-height:19px;font-size:14.5px;color:#000;font-weight:bold;letter-spacing:-0.007px;">Timing process indicator</div><div class="inp i2" style="left:1.4px;top:934.0px;width:97.6px;height:24.4px;background:#00ffff;"><span style="font-size:14.5px;color:#000;line-height:20.4px;padding-left:1.5px;transform:scaleX(0.9178);transform-origin:1.5px center;">1. Time correct</span></div><div class="inp i2" style="left:101.3px;top:934.0px;width:107.5px;height:24.4px;background:#00ffff;"><span style="font-size:14.5px;color:#000;line-height:20.4px;padding-left:1.5px;transform:scaleX(0.9009);transform-origin:1.5px center;">2. XML element</span></div><div class="inp i2" style="left:211.5px;top:934.0px;width:87.5px;height:24.4px;background:#00ffff;"><span style="font-size:14.5px;color:#000;line-height:20.4px;padding-left:1.5px;transform:scaleX(0.9190);transform-origin:1.5px center;">3. Light curve</span></div><div class="inp i2" style="left:301.7px;top:934.0px;width:98.3px;height:24.4px;background:#fff;"><span style="font-size:14.5px;color:#000;line-height:20.4px;padding-left:1.5px;transform:scaleX(0.8918);transform-origin:1.5px center;">4. Diffraction tit</span></div><div class="inp i2" style="left:401.8px;top:934.0px;width:97.8px;height:24.4px;background:#fff;"><span style="font-size:14.5px;color:#000;line-height:20.4px;padding-left:1.5px;transform:scaleX(0.9199);transform-origin:1.5px center;">5. Make report</span></div></div></div><div class="win" style="left:620px;top:100px;width:942px;height:890px;border-radius:8px;box-shadow:0 0 0 1px rgba(0,0,0,.22),0 4px 16px rgba(0,0,0,.28);"><div style="left:-620px;top:-100px;width:1816px;height:1001px"><div class="" style="left:620.0px;top:100.0px;width:942.0px;height:33.5px;background:#f3f3f3;"></div><svg style="left:624px;top:105px" width="20" height="20" viewBox="0 0 20 20"><defs><clipPath id="icl"><path d="M0.5,0.3H19.6V19.8L17,18.2 11,19 9,19.8H4.5Q0.5,19.5 0.5,16Z"/></clipPath></defs><g clip-path="url(#icl)"><rect x="0" y="0" width="20" height="20" fill="#00008e"/><g fill="#0a0aff"><circle cx="1.8" cy="6" r="2.4"/><circle cx="8.8" cy="4.6" r="1.3"/><circle cx="17.3" cy="8" r="1.8"/><circle cx="2.2" cy="14.2" r="2.2"/><circle cx="15" cy="15" r="2"/><rect x="17.4" y="12" width="2.6" height="8"/><circle cx="12" cy="17.3" r="1.2"/></g><g fill="#7c86e8"><rect x="1.5" y="2" width="1.5" height="1.6"/><rect x="9" y="1.6" width="1.4" height="1.5"/><rect x="11.6" y="1.3" width="1.4" height="1.5"/><rect x="14.4" y="1.6" width="1.5" height="1.6"/><rect x="17" y="2" width="1.5" height="1.6"/><rect x="2.4" y="16.2" width="1.6" height="1.4"/><rect x="8" y="17.6" width="1.5" height="1.3"/><rect x="10.8" y="16.6" width="1.4" height="1.3"/><rect x="13.4" y="16.8" width="1.4" height="1.3"/><rect x="15.6" y="15.6" width="1.4" height="1.3"/></g><rect x="4" y="19" width="7" height="1" fill="#000"/><rect x="0" y="0" width="1.2" height="3" fill="#000"/><path d="M0,10.1 L3.2,9.6 Q5.2,8.6 5.5,6 L6.2,1 L7.1,6 Q7.6,8.8 10.5,9.7 L20,10.0 L20,11.3 L10.5,11.5 Q7.8,12.1 7.3,14 L6.8,17.8 L5.4,17.8 L5.2,14 Q4.8,12.2 3.2,11.7 L0,11.5 Z" fill="#ffff00"/></g></svg><div class="t" style="left:651.0px;top:106.5px;height:20px;line-height:20px;font-size:15.5px;color:#8b8b8b;transform:scaleX(0.9517);transform-origin:left center;">Graph</div><svg style="left:0;top:0" width="1816" height="200" viewBox="0 0 1816 200" fill="none" stroke="#5a5a5a" stroke-width="1"><path d="M1409 116.0 h12"/><rect x="1468.0" y="110.0" width="11" height="11" rx="1.5"/><path d="M1526.5 110.0 l11 11 M1537.5 110.0 l-11 11"/></svg><svg style="left:630px;top:133.5px" width="925.5" height="531.5" viewBox="630 133.5 925.5 531.5"><rect x="630" y="133.5" width="925.5" height="531.5" fill="#fff"/><path d="M693,317.5H1543M693,461.5H1543" stroke="#00ffff" stroke-width="1.25" fill="none"/><path d="M694.4,384.8L695.2,281.5L696.1,361.7L696.9,337.5L697.7,329.5L698.6,353.8L699.4,376.6L700.2,298.9L701.1,308.8L701.9,395.9L702.7,234.3L703.6,282.7L704.4,347.4L705.2,285.6L706.1,339.2L706.9,285.1L707.7,294.3L708.6,373.6L709.4,363.3L710.2,275.4L711.1,279.0L711.9,341.4L712.7,296.4L713.5,228.3L714.4,338.1L715.2,314.6L716.0,382.5L716.9,454.0L717.7,236.8L718.5,234.3L719.4,300.3L720.2,297.9L721.0,365.6L721.9,374.7L722.7,382.1L723.5,307.3L724.4,299.0L725.2,353.1L726.0,375.3L726.9,319.2L727.7,343.0L728.5,334.9L729.4,282.1L730.2,334.5L731.0,333.9L731.9,374.1L732.7,327.2L733.5,281.6L734.4,331.0L735.2,330.2L736.0,316.0L736.9,321.6L737.7,311.5L738.5,310.9L739.4,307.4L740.2,360.8L741.0,318.7L741.9,390.7L742.7,319.2L743.5,376.9L744.4,331.2L745.2,309.4L746.0,342.2L746.9,321.7L747.7,386.8L748.5,355.9L749.4,296.0L750.2,365.1L751.0,295.4L751.8,371.9L752.7,352.6L753.5,358.7L754.3,315.7L755.2,295.0L756.0,355.3L756.8,321.0L757.7,251.7L758.5,324.9L759.3,343.2L760.2,296.8L761.0,319.4L761.8,336.9L762.7,209.5L763.5,277.8L764.3,330.0L765.2,309.1L766.0,350.5L766.8,261.3L767.7,283.2L768.5,275.2L769.3,317.5L770.2,296.4L771.0,281.1L771.8,333.1L772.7,304.8L773.5,319.9L774.3,332.1L775.2,348.4L776.0,201.9L776.8,309.4L777.7,334.0L778.5,402.3L779.3,210.8L780.2,259.0L781.0,341.5L781.8,403.2L782.7,339.0L783.5,305.9L784.3,329.7L785.2,351.7L786.0,263.0L786.8,259.0L787.7,333.0L788.5,296.3L789.3,310.2L790.1,293.4L791.0,265.8L791.8,287.8L792.6,313.7L793.5,339.8L794.3,343.8L795.1,315.9L796.0,272.9L796.8,307.6L797.6,319.1L798.5,313.4L799.3,323.8L800.1,306.4L801.0,414.3L801.8,428.2L802.6,349.5L803.5,408.8L804.3,327.2L805.1,342.8L806.0,345.7L806.8,193.2L807.6,323.9L808.5,357.6L809.3,290.5L810.1,300.5L811.0,351.3L811.8,315.5L812.6,434.0L813.5,355.3L814.3,281.5L815.1,298.1L816.0,320.6L816.8,327.6L817.6,379.6L818.5,376.5L819.3,315.4L820.1,256.1L821.0,404.9L821.8,297.5L822.6,297.7L823.5,283.6L824.3,352.0L825.1,340.9L826.0,320.8L826.8,363.5L827.6,373.0L828.4,361.6L829.3,332.5L830.1,317.4L830.9,334.4L831.8,332.3L832.6,363.1L833.4,366.3L834.3,298.1L835.1,342.1L835.9,343.0L836.8,304.2L837.6,292.2L838.4,291.1L839.3,324.0L840.1,341.2L840.9,328.2L841.8,332.3L842.6,285.8L843.4,327.7L844.3,314.5L845.1,311.1L845.9,290.1L846.8,422.2L847.6,331.3L848.4,318.3L849.3,392.3L850.1,267.6L850.9,356.3L851.8,357.9L852.6,394.0L853.4,320.7L854.3,346.8L855.1,379.0L855.9,349.0L856.8,332.6L857.6,313.6L858.4,446.8L859.3,398.7L860.1,384.3L860.9,449.7L861.8,393.2L862.6,466.9L863.4,349.9L864.3,372.8L865.1,381.0L865.9,454.0L866.7,355.7L867.6,331.1L868.4,386.9L869.2,389.7L870.1,435.4L870.9,409.9L871.7,407.5L872.6,377.6L873.4,388.0L874.2,380.4L875.1,382.7L875.9,323.0L876.7,461.2L877.6,348.6L878.4,423.1L879.2,395.6L880.1,439.7L880.9,410.6L881.7,320.6L882.6,350.4L883.4,355.5L884.2,399.8L885.1,358.3L885.9,398.2L886.7,411.6L887.6,296.7L888.4,372.8L889.2,489.9L890.1,425.1L890.9,397.9L891.7,446.8L892.6,365.1L893.4,327.6L894.2,313.1L895.1,300.9L895.9,454.0L896.7,251.9L897.6,281.6L898.4,325.7L899.2,377.5L900.1,380.6L900.9,339.0L901.7,281.1L902.5,487.0L903.4,378.0L904.2,319.9L905.0,331.0L905.9,461.2L906.7,315.5L907.5,419.7L908.4,275.8L909.2,235.9L910.0,367.1L910.9,325.8L911.7,396.9L912.5,351.9L913.4,292.7L914.2,359.4L915.0,323.0L915.9,337.1L916.7,340.0L917.5,320.2L918.4,311.0L919.2,284.5L920.0,301.6L920.9,356.7L921.7,283.3L922.5,291.5L923.4,400.3L924.2,317.6L925.0,308.9L925.9,335.3L926.7,314.3L927.5,466.9L928.4,216.6L929.2,406.1L930.0,287.3L930.9,244.9L931.7,343.7L932.5,285.1L933.4,333.8L934.2,310.0L935.0,353.5L935.9,309.2L936.7,345.5L937.5,340.4L938.4,273.6L939.2,222.8L940.0,369.4L940.8,339.9L941.7,325.4L942.5,327.6L943.3,377.0L944.2,366.4L945.0,329.5L945.8,310.7L946.7,308.7L947.5,314.1L948.3,314.7L949.2,347.9L950.0,330.7L950.8,343.2L951.7,270.0L952.5,440.0L953.3,404.1L954.2,385.5L955.0,335.0L955.8,346.5L956.7,336.6L957.5,293.8L958.3,350.2L959.2,353.9L960.0,330.4L960.8,368.0L961.7,308.4L962.5,310.2L963.3,350.0L964.2,390.6L965.0,262.9L965.8,306.5L966.7,308.9L967.5,322.9L968.3,373.2L969.2,295.3L970.0,328.1L970.8,352.1L971.7,301.7L972.5,348.7L973.3,359.4L974.2,365.1L975.0,285.7L975.8,305.4L976.7,253.7L977.5,348.4L978.3,356.1L979.1,311.8L980.0,274.2L980.8,303.4L981.6,309.1L982.5,253.2L983.3,352.7L984.1,371.4L985.0,351.6L985.8,334.7L986.6,307.8L987.5,282.5L988.3,305.3L989.1,262.2L990.0,351.0L990.8,308.0L991.6,349.2L992.5,273.1L993.3,352.7L994.1,303.4L995.0,313.9L995.8,295.6L996.6,286.2L997.5,322.3L998.3,316.2L999.1,304.0L1000.0,362.2L1000.8,339.9L1001.6,373.3L1002.5,310.7L1003.3,234.3L1004.1,281.6L1005.0,343.6L1005.8,338.4L1006.6,275.1L1007.5,331.1L1008.3,375.1L1009.1,353.6L1010.0,355.6L1010.8,311.9L1011.6,291.4L1012.5,315.2L1013.3,375.3L1014.1,340.0L1015.0,226.3L1015.8,375.0L1016.6,391.1L1017.4,272.1L1018.3,355.0L1019.1,321.9L1019.9,311.2L1020.8,468.4L1021.6,324.8L1022.4,325.0L1023.3,389.4L1024.1,264.0L1024.9,391.4L1025.8,356.0L1026.6,323.2L1027.4,276.2L1028.3,302.1L1029.1,354.2L1029.9,364.8L1030.8,363.7L1031.6,354.4L1032.4,315.5L1033.3,269.7L1034.1,418.5L1034.9,333.3L1035.8,375.1L1036.6,307.5L1037.4,299.1L1038.3,364.0L1039.1,351.9L1039.9,371.5L1040.8,320.8L1041.6,444.9L1042.4,379.4L1043.3,363.1L1044.1,290.8L1044.9,245.0L1045.8,334.6L1046.6,381.2L1047.4,330.5L1048.3,365.4L1049.1,313.8L1049.9,372.6L1050.8,343.3L1051.6,328.7L1052.4,307.9L1053.3,330.1L1054.1,340.0L1054.9,323.8L1055.7,399.4L1056.6,297.0L1057.4,345.1L1058.2,361.4L1059.1,280.4L1059.9,406.1L1060.7,338.7L1061.6,370.4L1062.4,293.7L1063.2,360.8L1064.1,339.9L1064.9,403.3L1065.7,297.1L1066.6,393.9L1067.4,320.0L1068.2,313.7L1069.1,362.6L1069.9,285.9L1070.7,398.9L1071.6,439.7L1072.4,347.9L1073.2,336.6L1074.1,472.7L1074.9,348.5L1075.7,384.3L1076.6,357.5L1077.4,295.8L1078.2,399.9L1079.1,352.5L1079.9,393.5L1080.7,314.6L1081.6,420.3L1082.4,371.4L1083.2,364.0L1084.1,355.6L1084.9,269.6L1085.7,299.7L1086.6,397.4L1087.4,275.4L1088.2,402.4L1089.1,427.6L1089.9,412.8L1090.7,347.4L1091.6,334.2L1092.4,438.0L1093.2,237.2L1094.0,362.8L1094.9,323.1L1095.7,361.8L1096.5,310.2L1097.4,320.3L1098.2,384.3L1099.0,282.7L1099.9,363.3L1100.7,305.9L1101.5,283.6L1102.4,366.7L1103.2,330.9L1104.0,356.9L1104.9,361.5L1105.7,315.6L1106.5,356.4L1107.4,275.1L1108.2,273.1L1109.0,326.6L1109.9,357.7L1110.7,234.3L1111.5,244.2L1112.4,330.0L1113.2,361.4L1114.0,342.2L1114.9,315.0L1115.7,282.2L1116.5,288.0L1117.4,307.9L1118.2,333.5L1119.0,317.3L1119.9,335.1L1120.7,320.2L1121.5,326.4L1122.4,302.1L1123.2,346.3L1124.0,334.4L1124.9,238.6L1125.7,365.8L1126.5,390.0L1127.4,364.4L1128.2,350.3L1129.0,336.8L1129.8,336.2L1130.7,349.1L1131.5,240.2L1132.3,321.2L1133.2,317.3L1134.0,321.5L1134.8,356.5L1135.7,365.4L1136.5,300.5L1137.3,346.6L1138.2,401.3L1139.0,418.2L1139.8,326.8L1140.7,364.0L1141.5,339.3L1142.3,358.2L1143.2,353.6L1144.0,345.4L1144.8,387.1L1145.7,341.3L1146.5,303.9L1147.3,315.8L1148.2,409.4L1149.0,395.1L1149.8,395.6L1150.7,355.2L1151.5,314.1L1152.3,335.2L1153.2,415.1L1154.0,347.2L1154.8,317.9L1155.7,365.1L1156.5,305.3L1157.3,371.5L1158.2,301.4L1159.0,255.9L1159.8,393.3L1160.7,356.4L1161.5,321.5L1162.3,234.3L1163.2,410.1L1164.0,319.9L1164.8,331.7L1165.7,359.8L1166.5,376.7L1167.3,366.1L1168.1,358.7L1169.0,430.6L1169.8,289.6L1170.6,429.8L1171.5,368.1L1172.3,378.2L1173.1,369.9L1174.0,351.8L1174.8,382.0L1175.6,360.0L1176.5,283.2L1177.3,306.5L1178.1,355.5L1179.0,307.8L1179.8,369.4L1180.6,329.4L1181.5,390.1L1182.3,377.1L1183.1,364.3L1184.0,282.0L1184.8,320.1L1185.6,307.8L1186.5,322.7L1187.3,280.0L1188.1,312.0L1189.0,298.7L1189.8,321.4L1190.6,362.2L1191.5,357.2L1192.3,280.7L1193.1,273.0L1194.0,305.2L1194.8,388.3L1195.6,264.9L1196.5,311.7L1197.3,449.7L1198.1,321.6L1199.0,335.7L1199.8,253.8L1200.6,255.9L1201.5,359.6L1202.3,325.5L1203.1,305.9L1204.0,268.1L1204.8,411.7L1205.6,286.4L1206.4,260.9L1207.3,339.7L1208.1,331.5L1208.9,284.8L1209.8,320.7L1210.6,388.5L1211.4,384.8L1212.3,382.2L1213.1,399.5L1213.9,348.4L1214.8,367.5L1215.6,446.8L1216.4,320.0L1217.3,278.4L1218.1,337.8L1218.9,416.7L1219.8,292.2L1220.6,349.4L1221.4,300.1L1222.3,361.2L1223.1,332.1L1223.9,348.4L1224.8,342.5L1225.6,291.1L1226.4,363.0L1227.3,330.0L1228.1,326.1L1228.9,326.0L1229.8,415.0L1230.6,316.0L1231.4,435.8L1232.3,383.1L1233.1,341.6L1233.9,306.0L1234.8,289.6L1235.6,291.1L1236.4,300.1L1237.3,386.8L1238.1,276.8L1238.9,333.4L1239.8,280.7L1240.6,408.8L1241.4,360.1L1242.3,345.9L1243.1,366.6L1243.9,224.3L1244.7,295.1L1245.6,290.2L1246.4,350.3L1247.2,351.4L1248.1,278.1L1248.9,356.3L1249.7,302.7L1250.6,341.4L1251.4,341.7L1252.2,348.8L1253.1,345.5L1253.9,220.0L1254.7,290.6L1255.6,289.9L1256.4,308.5L1257.2,316.5L1258.1,323.6L1258.9,310.9L1259.7,355.4L1260.6,361.5L1261.4,334.4L1262.2,398.7L1263.1,343.0L1263.9,399.2L1264.7,371.3L1265.6,353.5L1266.4,304.4L1267.2,338.9L1268.1,326.6L1268.9,289.4L1269.7,351.6L1270.6,371.1L1271.4,328.4L1272.2,336.0L1273.1,394.5L1273.9,299.8L1274.7,337.2L1275.6,341.4L1276.4,358.8L1277.2,333.5L1278.1,290.1L1278.9,307.1L1279.7,296.7L1280.6,341.9L1281.4,267.7L1282.2,280.1L1283.0,329.8L1283.9,429.5L1284.7,326.5L1285.5,234.3L1286.4,329.6L1287.2,365.8L1288.0,261.3L1288.9,349.0L1289.7,306.1L1290.5,295.2L1291.4,379.7L1292.2,318.2L1293.0,276.9L1293.9,334.2L1294.7,297.1L1295.5,323.1L1296.4,283.4L1297.2,446.8L1298.0,364.9L1298.9,334.3L1299.7,308.6L1300.5,348.0L1301.4,439.7L1302.2,337.7L1303.0,335.0L1303.9,350.0L1304.7,313.0L1305.5,295.2L1306.4,298.0L1307.2,301.0L1308.0,282.0L1308.9,379.9L1309.7,332.8L1310.5,321.7L1311.4,309.3L1312.2,391.3L1313.0,258.8L1313.9,364.7L1314.7,320.0L1315.5,301.2L1316.4,287.1L1317.2,353.8L1318.0,347.5L1318.8,312.0L1319.7,303.0L1320.5,289.9L1321.3,325.9L1322.2,349.4L1323.0,373.0L1323.8,255.0L1324.7,374.1L1325.5,295.5L1326.3,311.9L1327.2,293.9L1328.0,287.0L1328.8,272.3L1329.7,369.3L1330.5,309.3L1331.3,399.2L1332.2,323.4L1333.0,360.1L1333.8,331.8L1334.7,277.8L1335.5,319.8L1336.3,281.3L1337.2,329.4L1338.0,305.5L1338.8,231.4L1339.7,415.6L1340.5,344.8L1341.3,326.7L1342.2,333.9L1343.0,314.4L1343.8,318.3L1344.7,279.6L1345.5,294.0L1346.3,335.1L1347.2,288.9L1348.0,399.8L1348.8,337.1L1349.7,334.1L1350.5,281.0L1351.3,353.1L1352.2,390.8L1353.0,330.2L1353.8,274.6L1354.7,345.9L1355.5,340.6L1356.3,343.6L1357.1,332.8L1358.0,284.1L1358.8,257.9L1359.6,356.1L1360.5,334.4L1361.3,258.9L1362.1,324.6L1363.0,373.3L1363.8,339.8L1364.6,338.5L1365.5,351.4L1366.3,338.1L1367.1,311.6L1368.0,324.3L1368.8,307.0L1369.6,343.0L1370.5,336.4L1371.3,319.8L1372.1,326.8L1373.0,325.9L1373.8,285.5L1374.6,370.5L1375.5,403.1L1376.3,301.3L1377.1,337.6L1378.0,276.7L1378.8,330.9L1379.6,371.7L1380.5,243.4L1381.3,311.2L1382.1,343.2L1383.0,158.9L1383.8,303.9L1384.6,350.4L1385.5,309.3L1386.3,279.2L1387.1,375.8L1388.0,217.1L1388.8,303.6L1389.6,258.0L1390.5,285.3L1391.3,337.4L1392.1,263.9L1393.0,332.6L1393.8,324.6L1394.6,303.8L1395.4,359.6L1396.3,234.3L1397.1,271.9L1397.9,308.9L1398.8,338.6L1399.6,360.8L1400.4,302.4L1401.3,289.9L1402.1,331.2L1402.9,323.2L1403.8,294.4L1404.6,320.2L1405.4,390.7L1406.3,297.1L1407.1,315.4L1407.9,299.2L1408.8,358.0L1409.6,412.4L1410.4,381.3L1411.3,324.8L1412.1,292.1L1412.9,251.1L1413.8,331.4L1414.6,395.6L1415.4,350.2L1416.3,432.5L1417.1,315.2L1417.9,325.4L1418.8,266.1L1419.6,357.7L1420.4,403.1L1421.3,351.3L1422.1,359.4L1422.9,234.3L1423.8,316.7L1424.6,364.4L1425.4,287.1L1426.3,272.7L1427.1,309.4L1427.9,304.6L1428.8,273.5L1429.6,293.3L1430.4,340.0L1431.3,292.1L1432.1,252.4L1432.9,303.8L1433.7,284.7L1434.6,296.3L1435.4,328.2L1436.2,325.4L1437.1,297.1L1437.9,342.2L1438.7,277.9L1439.6,276.0L1440.4,400.4L1441.2,326.4L1442.1,352.9L1442.9,349.1L1443.7,320.1L1444.6,343.0L1445.4,306.1L1446.2,316.4L1447.1,315.5L1447.9,409.0L1448.7,344.9L1449.6,277.1L1450.4,428.0L1451.2,269.3L1452.1,357.0L1452.9,291.8L1453.7,436.4L1454.6,353.5L1455.4,305.2L1456.2,331.5L1457.1,298.3L1457.9,339.5L1458.7,357.7L1459.6,361.1L1460.4,316.6L1461.2,318.1L1462.1,340.1L1462.9,345.2L1463.7,346.0L1464.6,332.5L1465.4,372.9L1466.2,339.9L1467.1,344.1L1467.9,438.2L1468.7,362.2L1469.6,321.7L1470.4,365.7L1471.2,327.6L1472.0,292.1L1472.9,316.9L1473.7,345.3L1474.5,309.8L1475.4,404.9L1476.2,399.8L1477.0,370.4L1477.9,452.6L1478.7,363.6L1479.5,290.7L1480.4,300.3L1481.2,367.3L1482.0,357.4L1482.9,402.9L1483.7,357.5L1484.5,419.2L1485.4,313.3L1486.2,384.8L1487.0,342.3L1487.9,411.8L1488.7,307.6L1489.5,335.8L1490.4,282.9L1491.2,353.4L1492.0,416.1L1492.9,382.8L1493.7,399.2L1494.5,290.5L1495.4,373.4L1496.2,402.3L1497.0,325.1L1497.9,336.7L1498.7,327.2L1499.5,336.6L1500.4,420.2L1501.2,394.9L1502.0,425.5L1502.9,291.9L1503.7,304.7L1504.5,352.7L1505.4,313.8L1506.2,311.1L1507.0,311.6L1507.9,314.7L1508.7,300.5L1509.5,330.1L1510.3,416.9L1511.2,218.5L1512.0,282.5L1512.8,367.9L1513.7,424.6L1514.5,322.7L1515.3,363.3L1516.2,314.1L1517.0,429.9L1517.8,425.3L1518.7,334.9L1519.5,301.1L1520.3,291.2L1521.2,284.0L1522.0,270.8L1522.8,322.9L1523.7,326.2L1524.5,358.4L1525.3,313.4L1526.2,342.2L1527.0,377.4L1527.8,286.3L1528.7,304.4L1529.5,433.4L1530.3,401.7L1531.2,338.5L1532.0,380.9L1532.8,282.2L1533.7,321.6L1534.5,308.6L1535.3,296.3L1536.2,241.3L1537.0,346.2L1537.8,313.6L1538.7,305.8L1539.5,310.5L1540.3,321.6L1541.2,290.2L1542.0,368.2L1542.8,366.7L1543.7,345.6" stroke="#ffff00" stroke-width="1.1" fill="none" stroke-linejoin="bevel"/><path d="M690.2,384.8l4.2,-4.2 4.2,4.2 -4.2,4.2zM691.0,281.5l4.2,-4.2 4.2,4.2 -4.2,4.2zM691.9,361.7l4.2,-4.2 4.2,4.2 -4.2,4.2zM692.7,337.5l4.2,-4.2 4.2,4.2 -4.2,4.2zM693.5,329.5l4.2,-4.2 4.2,4.2 -4.2,4.2zM694.4,353.8l4.2,-4.2 4.2,4.2 -4.2,4.2zM695.2,376.6l4.2,-4.2 4.2,4.2 -4.2,4.2zM696.0,298.9l4.2,-4.2 4.2,4.2 -4.2,4.2zM696.9,308.8l4.2,-4.2 4.2,4.2 -4.2,4.2zM697.7,395.9l4.2,-4.2 4.2,4.2 -4.2,4.2zM698.5,234.3l4.2,-4.2 4.2,4.2 -4.2,4.2zM699.4,282.7l4.2,-4.2 4.2,4.2 -4.2,4.2zM700.2,347.4l4.2,-4.2 4.2,4.2 -4.2,4.2zM701.0,285.6l4.2,-4.2 4.2,4.2 -4.2,4.2zM701.9,339.2l4.2,-4.2 4.2,4.2 -4.2,4.2zM702.7,285.1l4.2,-4.2 4.2,4.2 -4.2,4.2zM703.5,294.3l4.2,-4.2 4.2,4.2 -4.2,4.2zM704.4,373.6l4.2,-4.2 4.2,4.2 -4.2,4.2zM705.2,363.3l4.2,-4.2 4.2,4.2 -4.2,4.2zM706.0,275.4l4.2,-4.2 4.2,4.2 -4.2,4.2zM706.9,279.0l4.2,-4.2 4.2,4.2 -4.2,4.2zM707.7,341.4l4.2,-4.2 4.2,4.2 -4.2,4.2zM708.5,296.4l4.2,-4.2 4.2,4.2 -4.2,4.2zM709.3,228.3l4.2,-4.2 4.2,4.2 -4.2,4.2zM710.2,338.1l4.2,-4.2 4.2,4.2 -4.2,4.2zM711.0,314.6l4.2,-4.2 4.2,4.2 -4.2,4.2zM711.8,382.5l4.2,-4.2 4.2,4.2 -4.2,4.2zM712.7,454.0l4.2,-4.2 4.2,4.2 -4.2,4.2zM713.5,236.8l4.2,-4.2 4.2,4.2 -4.2,4.2zM714.3,234.3l4.2,-4.2 4.2,4.2 -4.2,4.2zM715.2,300.3l4.2,-4.2 4.2,4.2 -4.2,4.2zM716.0,297.9l4.2,-4.2 4.2,4.2 -4.2,4.2zM716.8,365.6l4.2,-4.2 4.2,4.2 -4.2,4.2zM717.7,374.7l4.2,-4.2 4.2,4.2 -4.2,4.2zM718.5,382.1l4.2,-4.2 4.2,4.2 -4.2,4.2zM719.3,307.3l4.2,-4.2 4.2,4.2 -4.2,4.2zM720.2,299.0l4.2,-4.2 4.2,4.2 -4.2,4.2zM721.0,353.1l4.2,-4.2 4.2,4.2 -4.2,4.2zM721.8,375.3l4.2,-4.2 4.2,4.2 -4.2,4.2zM722.7,319.2l4.2,-4.2 4.2,4.2 -4.2,4.2zM723.5,343.0l4.2,-4.2 4.2,4.2 -4.2,4.2zM724.3,334.9l4.2,-4.2 4.2,4.2 -4.2,4.2zM725.2,282.1l4.2,-4.2 4.2,4.2 -4.2,4.2zM726.0,334.5l4.2,-4.2 4.2,4.2 -4.2,4.2zM726.8,333.9l4.2,-4.2 4.2,4.2 -4.2,4.2zM727.7,374.1l4.2,-4.2 4.2,4.2 -4.2,4.2zM728.5,327.2l4.2,-4.2 4.2,4.2 -4.2,4.2zM729.3,281.6l4.2,-4.2 4.2,4.2 -4.2,4.2zM730.2,331.0l4.2,-4.2 4.2,4.2 -4.2,4.2zM731.0,330.2l4.2,-4.2 4.2,4.2 -4.2,4.2zM731.8,316.0l4.2,-4.2 4.2,4.2 -4.2,4.2zM732.7,321.6l4.2,-4.2 4.2,4.2 -4.2,4.2zM733.5,311.5l4.2,-4.2 4.2,4.2 -4.2,4.2zM734.3,310.9l4.2,-4.2 4.2,4.2 -4.2,4.2zM735.2,307.4l4.2,-4.2 4.2,4.2 -4.2,4.2zM736.0,360.8l4.2,-4.2 4.2,4.2 -4.2,4.2zM736.8,318.7l4.2,-4.2 4.2,4.2 -4.2,4.2zM737.7,390.7l4.2,-4.2 4.2,4.2 -4.2,4.2zM738.5,319.2l4.2,-4.2 4.2,4.2 -4.2,4.2zM739.3,376.9l4.2,-4.2 4.2,4.2 -4.2,4.2zM740.2,331.2l4.2,-4.2 4.2,4.2 -4.2,4.2zM741.0,309.4l4.2,-4.2 4.2,4.2 -4.2,4.2zM741.8,342.2l4.2,-4.2 4.2,4.2 -4.2,4.2zM742.7,321.7l4.2,-4.2 4.2,4.2 -4.2,4.2zM743.5,386.8l4.2,-4.2 4.2,4.2 -4.2,4.2zM744.3,355.9l4.2,-4.2 4.2,4.2 -4.2,4.2zM745.2,296.0l4.2,-4.2 4.2,4.2 -4.2,4.2zM746.0,365.1l4.2,-4.2 4.2,4.2 -4.2,4.2zM746.8,295.4l4.2,-4.2 4.2,4.2 -4.2,4.2zM747.6,371.9l4.2,-4.2 4.2,4.2 -4.2,4.2zM748.5,352.6l4.2,-4.2 4.2,4.2 -4.2,4.2zM749.3,358.7l4.2,-4.2 4.2,4.2 -4.2,4.2zM750.1,315.7l4.2,-4.2 4.2,4.2 -4.2,4.2zM751.0,295.0l4.2,-4.2 4.2,4.2 -4.2,4.2zM751.8,355.3l4.2,-4.2 4.2,4.2 -4.2,4.2zM752.6,321.0l4.2,-4.2 4.2,4.2 -4.2,4.2zM753.5,251.7l4.2,-4.2 4.2,4.2 -4.2,4.2zM754.3,324.9l4.2,-4.2 4.2,4.2 -4.2,4.2zM755.1,343.2l4.2,-4.2 4.2,4.2 -4.2,4.2zM756.0,296.8l4.2,-4.2 4.2,4.2 -4.2,4.2zM756.8,319.4l4.2,-4.2 4.2,4.2 -4.2,4.2zM757.6,336.9l4.2,-4.2 4.2,4.2 -4.2,4.2zM758.5,209.5l4.2,-4.2 4.2,4.2 -4.2,4.2zM759.3,277.8l4.2,-4.2 4.2,4.2 -4.2,4.2zM760.1,330.0l4.2,-4.2 4.2,4.2 -4.2,4.2zM761.0,309.1l4.2,-4.2 4.2,4.2 -4.2,4.2zM761.8,350.5l4.2,-4.2 4.2,4.2 -4.2,4.2zM762.6,261.3l4.2,-4.2 4.2,4.2 -4.2,4.2zM763.5,283.2l4.2,-4.2 4.2,4.2 -4.2,4.2zM764.3,275.2l4.2,-4.2 4.2,4.2 -4.2,4.2zM765.1,317.5l4.2,-4.2 4.2,4.2 -4.2,4.2zM766.0,296.4l4.2,-4.2 4.2,4.2 -4.2,4.2zM766.8,281.1l4.2,-4.2 4.2,4.2 -4.2,4.2zM767.6,333.1l4.2,-4.2 4.2,4.2 -4.2,4.2zM768.5,304.8l4.2,-4.2 4.2,4.2 -4.2,4.2zM769.3,319.9l4.2,-4.2 4.2,4.2 -4.2,4.2zM770.1,332.1l4.2,-4.2 4.2,4.2 -4.2,4.2zM771.0,348.4l4.2,-4.2 4.2,4.2 -4.2,4.2zM771.8,201.9l4.2,-4.2 4.2,4.2 -4.2,4.2zM772.6,309.4l4.2,-4.2 4.2,4.2 -4.2,4.2zM773.5,334.0l4.2,-4.2 4.2,4.2 -4.2,4.2zM774.3,402.3l4.2,-4.2 4.2,4.2 -4.2,4.2zM775.1,210.8l4.2,-4.2 4.2,4.2 -4.2,4.2zM776.0,259.0l4.2,-4.2 4.2,4.2 -4.2,4.2zM776.8,341.5l4.2,-4.2 4.2,4.2 -4.2,4.2zM777.6,403.2l4.2,-4.2 4.2,4.2 -4.2,4.2zM778.5,339.0l4.2,-4.2 4.2,4.2 -4.2,4.2zM779.3,305.9l4.2,-4.2 4.2,4.2 -4.2,4.2zM780.1,329.7l4.2,-4.2 4.2,4.2 -4.2,4.2zM781.0,351.7l4.2,-4.2 4.2,4.2 -4.2,4.2zM781.8,263.0l4.2,-4.2 4.2,4.2 -4.2,4.2zM782.6,259.0l4.2,-4.2 4.2,4.2 -4.2,4.2zM783.5,333.0l4.2,-4.2 4.2,4.2 -4.2,4.2zM784.3,296.3l4.2,-4.2 4.2,4.2 -4.2,4.2zM785.1,310.2l4.2,-4.2 4.2,4.2 -4.2,4.2zM785.9,293.4l4.2,-4.2 4.2,4.2 -4.2,4.2zM786.8,265.8l4.2,-4.2 4.2,4.2 -4.2,4.2zM787.6,287.8l4.2,-4.2 4.2,4.2 -4.2,4.2zM788.4,313.7l4.2,-4.2 4.2,4.2 -4.2,4.2zM789.3,339.8l4.2,-4.2 4.2,4.2 -4.2,4.2zM790.1,343.8l4.2,-4.2 4.2,4.2 -4.2,4.2zM790.9,315.9l4.2,-4.2 4.2,4.2 -4.2,4.2zM791.8,272.9l4.2,-4.2 4.2,4.2 -4.2,4.2zM792.6,307.6l4.2,-4.2 4.2,4.2 -4.2,4.2zM793.4,319.1l4.2,-4.2 4.2,4.2 -4.2,4.2zM794.3,313.4l4.2,-4.2 4.2,4.2 -4.2,4.2zM795.1,323.8l4.2,-4.2 4.2,4.2 -4.2,4.2zM795.9,306.4l4.2,-4.2 4.2,4.2 -4.2,4.2zM796.8,414.3l4.2,-4.2 4.2,4.2 -4.2,4.2zM797.6,428.2l4.2,-4.2 4.2,4.2 -4.2,4.2zM798.4,349.5l4.2,-4.2 4.2,4.2 -4.2,4.2zM799.3,408.8l4.2,-4.2 4.2,4.2 -4.2,4.2zM800.1,327.2l4.2,-4.2 4.2,4.2 -4.2,4.2zM800.9,342.8l4.2,-4.2 4.2,4.2 -4.2,4.2zM801.8,345.7l4.2,-4.2 4.2,4.2 -4.2,4.2zM802.6,193.2l4.2,-4.2 4.2,4.2 -4.2,4.2zM803.4,323.9l4.2,-4.2 4.2,4.2 -4.2,4.2zM804.3,357.6l4.2,-4.2 4.2,4.2 -4.2,4.2zM805.1,290.5l4.2,-4.2 4.2,4.2 -4.2,4.2zM805.9,300.5l4.2,-4.2 4.2,4.2 -4.2,4.2zM806.8,351.3l4.2,-4.2 4.2,4.2 -4.2,4.2zM807.6,315.5l4.2,-4.2 4.2,4.2 -4.2,4.2zM808.4,434.0l4.2,-4.2 4.2,4.2 -4.2,4.2zM809.3,355.3l4.2,-4.2 4.2,4.2 -4.2,4.2zM810.1,281.5l4.2,-4.2 4.2,4.2 -4.2,4.2zM810.9,298.1l4.2,-4.2 4.2,4.2 -4.2,4.2zM811.8,320.6l4.2,-4.2 4.2,4.2 -4.2,4.2zM812.6,327.6l4.2,-4.2 4.2,4.2 -4.2,4.2zM813.4,379.6l4.2,-4.2 4.2,4.2 -4.2,4.2zM814.3,376.5l4.2,-4.2 4.2,4.2 -4.2,4.2zM815.1,315.4l4.2,-4.2 4.2,4.2 -4.2,4.2zM815.9,256.1l4.2,-4.2 4.2,4.2 -4.2,4.2zM816.8,404.9l4.2,-4.2 4.2,4.2 -4.2,4.2zM817.6,297.5l4.2,-4.2 4.2,4.2 -4.2,4.2zM818.4,297.7l4.2,-4.2 4.2,4.2 -4.2,4.2zM819.3,283.6l4.2,-4.2 4.2,4.2 -4.2,4.2zM820.1,352.0l4.2,-4.2 4.2,4.2 -4.2,4.2zM820.9,340.9l4.2,-4.2 4.2,4.2 -4.2,4.2zM821.8,320.8l4.2,-4.2 4.2,4.2 -4.2,4.2zM822.6,363.5l4.2,-4.2 4.2,4.2 -4.2,4.2zM823.4,373.0l4.2,-4.2 4.2,4.2 -4.2,4.2zM824.2,361.6l4.2,-4.2 4.2,4.2 -4.2,4.2zM825.1,332.5l4.2,-4.2 4.2,4.2 -4.2,4.2zM825.9,317.4l4.2,-4.2 4.2,4.2 -4.2,4.2zM826.7,334.4l4.2,-4.2 4.2,4.2 -4.2,4.2zM827.6,332.3l4.2,-4.2 4.2,4.2 -4.2,4.2zM828.4,363.1l4.2,-4.2 4.2,4.2 -4.2,4.2zM829.2,366.3l4.2,-4.2 4.2,4.2 -4.2,4.2zM830.1,298.1l4.2,-4.2 4.2,4.2 -4.2,4.2zM830.9,342.1l4.2,-4.2 4.2,4.2 -4.2,4.2zM831.7,343.0l4.2,-4.2 4.2,4.2 -4.2,4.2zM832.6,304.2l4.2,-4.2 4.2,4.2 -4.2,4.2zM833.4,292.2l4.2,-4.2 4.2,4.2 -4.2,4.2zM834.2,291.1l4.2,-4.2 4.2,4.2 -4.2,4.2zM835.1,324.0l4.2,-4.2 4.2,4.2 -4.2,4.2zM835.9,341.2l4.2,-4.2 4.2,4.2 -4.2,4.2zM836.7,328.2l4.2,-4.2 4.2,4.2 -4.2,4.2zM837.6,332.3l4.2,-4.2 4.2,4.2 -4.2,4.2zM838.4,285.8l4.2,-4.2 4.2,4.2 -4.2,4.2zM839.2,327.7l4.2,-4.2 4.2,4.2 -4.2,4.2zM840.1,314.5l4.2,-4.2 4.2,4.2 -4.2,4.2zM840.9,311.1l4.2,-4.2 4.2,4.2 -4.2,4.2zM841.7,290.1l4.2,-4.2 4.2,4.2 -4.2,4.2zM842.6,422.2l4.2,-4.2 4.2,4.2 -4.2,4.2zM843.4,331.3l4.2,-4.2 4.2,4.2 -4.2,4.2zM844.2,318.3l4.2,-4.2 4.2,4.2 -4.2,4.2zM845.1,392.3l4.2,-4.2 4.2,4.2 -4.2,4.2zM845.9,267.6l4.2,-4.2 4.2,4.2 -4.2,4.2zM846.7,356.3l4.2,-4.2 4.2,4.2 -4.2,4.2zM847.6,357.9l4.2,-4.2 4.2,4.2 -4.2,4.2zM848.4,394.0l4.2,-4.2 4.2,4.2 -4.2,4.2zM849.2,320.7l4.2,-4.2 4.2,4.2 -4.2,4.2zM850.1,346.8l4.2,-4.2 4.2,4.2 -4.2,4.2zM850.9,379.0l4.2,-4.2 4.2,4.2 -4.2,4.2zM851.7,349.0l4.2,-4.2 4.2,4.2 -4.2,4.2zM852.6,332.6l4.2,-4.2 4.2,4.2 -4.2,4.2zM853.4,313.6l4.2,-4.2 4.2,4.2 -4.2,4.2zM854.2,446.8l4.2,-4.2 4.2,4.2 -4.2,4.2zM855.1,398.7l4.2,-4.2 4.2,4.2 -4.2,4.2zM855.9,384.3l4.2,-4.2 4.2,4.2 -4.2,4.2zM856.7,449.7l4.2,-4.2 4.2,4.2 -4.2,4.2zM857.6,393.2l4.2,-4.2 4.2,4.2 -4.2,4.2zM858.4,466.9l4.2,-4.2 4.2,4.2 -4.2,4.2zM859.2,349.9l4.2,-4.2 4.2,4.2 -4.2,4.2zM860.1,372.8l4.2,-4.2 4.2,4.2 -4.2,4.2zM860.9,381.0l4.2,-4.2 4.2,4.2 -4.2,4.2zM861.7,454.0l4.2,-4.2 4.2,4.2 -4.2,4.2zM862.5,355.7l4.2,-4.2 4.2,4.2 -4.2,4.2zM863.4,331.1l4.2,-4.2 4.2,4.2 -4.2,4.2zM864.2,386.9l4.2,-4.2 4.2,4.2 -4.2,4.2zM865.0,389.7l4.2,-4.2 4.2,4.2 -4.2,4.2zM865.9,435.4l4.2,-4.2 4.2,4.2 -4.2,4.2zM866.7,409.9l4.2,-4.2 4.2,4.2 -4.2,4.2zM867.5,407.5l4.2,-4.2 4.2,4.2 -4.2,4.2zM868.4,377.6l4.2,-4.2 4.2,4.2 -4.2,4.2zM869.2,388.0l4.2,-4.2 4.2,4.2 -4.2,4.2zM870.0,380.4l4.2,-4.2 4.2,4.2 -4.2,4.2zM870.9,382.7l4.2,-4.2 4.2,4.2 -4.2,4.2zM871.7,323.0l4.2,-4.2 4.2,4.2 -4.2,4.2zM872.5,461.2l4.2,-4.2 4.2,4.2 -4.2,4.2zM873.4,348.6l4.2,-4.2 4.2,4.2 -4.2,4.2zM874.2,423.1l4.2,-4.2 4.2,4.2 -4.2,4.2zM875.0,395.6l4.2,-4.2 4.2,4.2 -4.2,4.2zM875.9,439.7l4.2,-4.2 4.2,4.2 -4.2,4.2zM876.7,410.6l4.2,-4.2 4.2,4.2 -4.2,4.2zM877.5,320.6l4.2,-4.2 4.2,4.2 -4.2,4.2zM878.4,350.4l4.2,-4.2 4.2,4.2 -4.2,4.2zM879.2,355.5l4.2,-4.2 4.2,4.2 -4.2,4.2zM880.0,399.8l4.2,-4.2 4.2,4.2 -4.2,4.2zM880.9,358.3l4.2,-4.2 4.2,4.2 -4.2,4.2zM881.7,398.2l4.2,-4.2 4.2,4.2 -4.2,4.2zM882.5,411.6l4.2,-4.2 4.2,4.2 -4.2,4.2zM883.4,296.7l4.2,-4.2 4.2,4.2 -4.2,4.2zM884.2,372.8l4.2,-4.2 4.2,4.2 -4.2,4.2zM885.0,489.9l4.2,-4.2 4.2,4.2 -4.2,4.2zM885.9,425.1l4.2,-4.2 4.2,4.2 -4.2,4.2zM886.7,397.9l4.2,-4.2 4.2,4.2 -4.2,4.2zM887.5,446.8l4.2,-4.2 4.2,4.2 -4.2,4.2zM888.4,365.1l4.2,-4.2 4.2,4.2 -4.2,4.2zM889.2,327.6l4.2,-4.2 4.2,4.2 -4.2,4.2zM890.0,313.1l4.2,-4.2 4.2,4.2 -4.2,4.2zM890.9,300.9l4.2,-4.2 4.2,4.2 -4.2,4.2zM891.7,454.0l4.2,-4.2 4.2,4.2 -4.2,4.2zM892.5,251.9l4.2,-4.2 4.2,4.2 -4.2,4.2zM893.4,281.6l4.2,-4.2 4.2,4.2 -4.2,4.2zM894.2,325.7l4.2,-4.2 4.2,4.2 -4.2,4.2zM895.0,377.5l4.2,-4.2 4.2,4.2 -4.2,4.2zM895.9,380.6l4.2,-4.2 4.2,4.2 -4.2,4.2zM896.7,339.0l4.2,-4.2 4.2,4.2 -4.2,4.2zM897.5,281.1l4.2,-4.2 4.2,4.2 -4.2,4.2zM898.3,487.0l4.2,-4.2 4.2,4.2 -4.2,4.2zM899.2,378.0l4.2,-4.2 4.2,4.2 -4.2,4.2zM900.0,319.9l4.2,-4.2 4.2,4.2 -4.2,4.2zM900.8,331.0l4.2,-4.2 4.2,4.2 -4.2,4.2zM901.7,461.2l4.2,-4.2 4.2,4.2 -4.2,4.2zM902.5,315.5l4.2,-4.2 4.2,4.2 -4.2,4.2zM903.3,419.7l4.2,-4.2 4.2,4.2 -4.2,4.2zM904.2,275.8l4.2,-4.2 4.2,4.2 -4.2,4.2zM905.0,235.9l4.2,-4.2 4.2,4.2 -4.2,4.2zM905.8,367.1l4.2,-4.2 4.2,4.2 -4.2,4.2zM906.7,325.8l4.2,-4.2 4.2,4.2 -4.2,4.2zM907.5,396.9l4.2,-4.2 4.2,4.2 -4.2,4.2zM908.3,351.9l4.2,-4.2 4.2,4.2 -4.2,4.2zM909.2,292.7l4.2,-4.2 4.2,4.2 -4.2,4.2zM910.0,359.4l4.2,-4.2 4.2,4.2 -4.2,4.2zM910.8,323.0l4.2,-4.2 4.2,4.2 -4.2,4.2zM911.7,337.1l4.2,-4.2 4.2,4.2 -4.2,4.2zM912.5,340.0l4.2,-4.2 4.2,4.2 -4.2,4.2zM913.3,320.2l4.2,-4.2 4.2,4.2 -4.2,4.2zM914.2,311.0l4.2,-4.2 4.2,4.2 -4.2,4.2zM915.0,284.5l4.2,-4.2 4.2,4.2 -4.2,4.2zM915.8,301.6l4.2,-4.2 4.2,4.2 -4.2,4.2zM916.7,356.7l4.2,-4.2 4.2,4.2 -4.2,4.2zM917.5,283.3l4.2,-4.2 4.2,4.2 -4.2,4.2zM918.3,291.5l4.2,-4.2 4.2,4.2 -4.2,4.2zM919.2,400.3l4.2,-4.2 4.2,4.2 -4.2,4.2zM920.0,317.6l4.2,-4.2 4.2,4.2 -4.2,4.2zM920.8,308.9l4.2,-4.2 4.2,4.2 -4.2,4.2zM921.7,335.3l4.2,-4.2 4.2,4.2 -4.2,4.2zM922.5,314.3l4.2,-4.2 4.2,4.2 -4.2,4.2zM923.3,466.9l4.2,-4.2 4.2,4.2 -4.2,4.2zM924.2,216.6l4.2,-4.2 4.2,4.2 -4.2,4.2zM925.0,406.1l4.2,-4.2 4.2,4.2 -4.2,4.2zM925.8,287.3l4.2,-4.2 4.2,4.2 -4.2,4.2zM926.7,244.9l4.2,-4.2 4.2,4.2 -4.2,4.2zM927.5,343.7l4.2,-4.2 4.2,4.2 -4.2,4.2zM928.3,285.1l4.2,-4.2 4.2,4.2 -4.2,4.2zM929.2,333.8l4.2,-4.2 4.2,4.2 -4.2,4.2zM930.0,310.0l4.2,-4.2 4.2,4.2 -4.2,4.2zM930.8,353.5l4.2,-4.2 4.2,4.2 -4.2,4.2zM931.7,309.2l4.2,-4.2 4.2,4.2 -4.2,4.2zM932.5,345.5l4.2,-4.2 4.2,4.2 -4.2,4.2zM933.3,340.4l4.2,-4.2 4.2,4.2 -4.2,4.2zM934.2,273.6l4.2,-4.2 4.2,4.2 -4.2,4.2zM935.0,222.8l4.2,-4.2 4.2,4.2 -4.2,4.2zM935.8,369.4l4.2,-4.2 4.2,4.2 -4.2,4.2zM936.6,339.9l4.2,-4.2 4.2,4.2 -4.2,4.2zM937.5,325.4l4.2,-4.2 4.2,4.2 -4.2,4.2zM938.3,327.6l4.2,-4.2 4.2,4.2 -4.2,4.2zM939.1,377.0l4.2,-4.2 4.2,4.2 -4.2,4.2zM940.0,366.4l4.2,-4.2 4.2,4.2 -4.2,4.2zM940.8,329.5l4.2,-4.2 4.2,4.2 -4.2,4.2zM941.6,310.7l4.2,-4.2 4.2,4.2 -4.2,4.2zM942.5,308.7l4.2,-4.2 4.2,4.2 -4.2,4.2zM943.3,314.1l4.2,-4.2 4.2,4.2 -4.2,4.2zM944.1,314.7l4.2,-4.2 4.2,4.2 -4.2,4.2zM945.0,347.9l4.2,-4.2 4.2,4.2 -4.2,4.2zM945.8,330.7l4.2,-4.2 4.2,4.2 -4.2,4.2zM946.6,343.2l4.2,-4.2 4.2,4.2 -4.2,4.2zM947.5,270.0l4.2,-4.2 4.2,4.2 -4.2,4.2zM948.3,440.0l4.2,-4.2 4.2,4.2 -4.2,4.2zM949.1,404.1l4.2,-4.2 4.2,4.2 -4.2,4.2zM950.0,385.5l4.2,-4.2 4.2,4.2 -4.2,4.2zM950.8,335.0l4.2,-4.2 4.2,4.2 -4.2,4.2zM951.6,346.5l4.2,-4.2 4.2,4.2 -4.2,4.2zM952.5,336.6l4.2,-4.2 4.2,4.2 -4.2,4.2zM953.3,293.8l4.2,-4.2 4.2,4.2 -4.2,4.2zM954.1,350.2l4.2,-4.2 4.2,4.2 -4.2,4.2zM955.0,353.9l4.2,-4.2 4.2,4.2 -4.2,4.2zM955.8,330.4l4.2,-4.2 4.2,4.2 -4.2,4.2zM956.6,368.0l4.2,-4.2 4.2,4.2 -4.2,4.2zM957.5,308.4l4.2,-4.2 4.2,4.2 -4.2,4.2zM958.3,310.2l4.2,-4.2 4.2,4.2 -4.2,4.2zM959.1,350.0l4.2,-4.2 4.2,4.2 -4.2,4.2zM960.0,390.6l4.2,-4.2 4.2,4.2 -4.2,4.2zM960.8,262.9l4.2,-4.2 4.2,4.2 -4.2,4.2zM961.6,306.5l4.2,-4.2 4.2,4.2 -4.2,4.2zM962.5,308.9l4.2,-4.2 4.2,4.2 -4.2,4.2zM963.3,322.9l4.2,-4.2 4.2,4.2 -4.2,4.2zM964.1,373.2l4.2,-4.2 4.2,4.2 -4.2,4.2zM965.0,295.3l4.2,-4.2 4.2,4.2 -4.2,4.2zM965.8,328.1l4.2,-4.2 4.2,4.2 -4.2,4.2zM966.6,352.1l4.2,-4.2 4.2,4.2 -4.2,4.2zM967.5,301.7l4.2,-4.2 4.2,4.2 -4.2,4.2zM968.3,348.7l4.2,-4.2 4.2,4.2 -4.2,4.2zM969.1,359.4l4.2,-4.2 4.2,4.2 -4.2,4.2zM970.0,365.1l4.2,-4.2 4.2,4.2 -4.2,4.2zM970.8,285.7l4.2,-4.2 4.2,4.2 -4.2,4.2zM971.6,305.4l4.2,-4.2 4.2,4.2 -4.2,4.2zM972.5,253.7l4.2,-4.2 4.2,4.2 -4.2,4.2zM973.3,348.4l4.2,-4.2 4.2,4.2 -4.2,4.2zM974.1,356.1l4.2,-4.2 4.2,4.2 -4.2,4.2zM974.9,311.8l4.2,-4.2 4.2,4.2 -4.2,4.2zM975.8,274.2l4.2,-4.2 4.2,4.2 -4.2,4.2zM976.6,303.4l4.2,-4.2 4.2,4.2 -4.2,4.2zM977.4,309.1l4.2,-4.2 4.2,4.2 -4.2,4.2zM978.3,253.2l4.2,-4.2 4.2,4.2 -4.2,4.2zM979.1,352.7l4.2,-4.2 4.2,4.2 -4.2,4.2zM979.9,371.4l4.2,-4.2 4.2,4.2 -4.2,4.2zM980.8,351.6l4.2,-4.2 4.2,4.2 -4.2,4.2zM981.6,334.7l4.2,-4.2 4.2,4.2 -4.2,4.2zM982.4,307.8l4.2,-4.2 4.2,4.2 -4.2,4.2zM983.3,282.5l4.2,-4.2 4.2,4.2 -4.2,4.2zM984.1,305.3l4.2,-4.2 4.2,4.2 -4.2,4.2zM984.9,262.2l4.2,-4.2 4.2,4.2 -4.2,4.2zM985.8,351.0l4.2,-4.2 4.2,4.2 -4.2,4.2zM986.6,308.0l4.2,-4.2 4.2,4.2 -4.2,4.2zM987.4,349.2l4.2,-4.2 4.2,4.2 -4.2,4.2zM988.3,273.1l4.2,-4.2 4.2,4.2 -4.2,4.2zM989.1,352.7l4.2,-4.2 4.2,4.2 -4.2,4.2zM989.9,303.4l4.2,-4.2 4.2,4.2 -4.2,4.2zM990.8,313.9l4.2,-4.2 4.2,4.2 -4.2,4.2zM991.6,295.6l4.2,-4.2 4.2,4.2 -4.2,4.2zM992.4,286.2l4.2,-4.2 4.2,4.2 -4.2,4.2zM993.3,322.3l4.2,-4.2 4.2,4.2 -4.2,4.2zM994.1,316.2l4.2,-4.2 4.2,4.2 -4.2,4.2zM994.9,304.0l4.2,-4.2 4.2,4.2 -4.2,4.2zM995.8,362.2l4.2,-4.2 4.2,4.2 -4.2,4.2zM996.6,339.9l4.2,-4.2 4.2,4.2 -4.2,4.2zM997.4,373.3l4.2,-4.2 4.2,4.2 -4.2,4.2zM998.3,310.7l4.2,-4.2 4.2,4.2 -4.2,4.2zM999.1,234.3l4.2,-4.2 4.2,4.2 -4.2,4.2zM999.9,281.6l4.2,-4.2 4.2,4.2 -4.2,4.2zM1000.8,343.6l4.2,-4.2 4.2,4.2 -4.2,4.2zM1001.6,338.4l4.2,-4.2 4.2,4.2 -4.2,4.2zM1002.4,275.1l4.2,-4.2 4.2,4.2 -4.2,4.2zM1003.3,331.1l4.2,-4.2 4.2,4.2 -4.2,4.2zM1004.1,375.1l4.2,-4.2 4.2,4.2 -4.2,4.2zM1004.9,353.6l4.2,-4.2 4.2,4.2 -4.2,4.2zM1005.8,355.6l4.2,-4.2 4.2,4.2 -4.2,4.2zM1006.6,311.9l4.2,-4.2 4.2,4.2 -4.2,4.2zM1007.4,291.4l4.2,-4.2 4.2,4.2 -4.2,4.2zM1008.3,315.2l4.2,-4.2 4.2,4.2 -4.2,4.2zM1009.1,375.3l4.2,-4.2 4.2,4.2 -4.2,4.2zM1009.9,340.0l4.2,-4.2 4.2,4.2 -4.2,4.2zM1010.8,226.3l4.2,-4.2 4.2,4.2 -4.2,4.2zM1011.6,375.0l4.2,-4.2 4.2,4.2 -4.2,4.2zM1012.4,391.1l4.2,-4.2 4.2,4.2 -4.2,4.2zM1013.2,272.1l4.2,-4.2 4.2,4.2 -4.2,4.2zM1014.1,355.0l4.2,-4.2 4.2,4.2 -4.2,4.2zM1014.9,321.9l4.2,-4.2 4.2,4.2 -4.2,4.2zM1015.7,311.2l4.2,-4.2 4.2,4.2 -4.2,4.2zM1016.6,468.4l4.2,-4.2 4.2,4.2 -4.2,4.2zM1017.4,324.8l4.2,-4.2 4.2,4.2 -4.2,4.2zM1018.2,325.0l4.2,-4.2 4.2,4.2 -4.2,4.2zM1019.1,389.4l4.2,-4.2 4.2,4.2 -4.2,4.2zM1019.9,264.0l4.2,-4.2 4.2,4.2 -4.2,4.2zM1020.7,391.4l4.2,-4.2 4.2,4.2 -4.2,4.2zM1021.6,356.0l4.2,-4.2 4.2,4.2 -4.2,4.2zM1022.4,323.2l4.2,-4.2 4.2,4.2 -4.2,4.2zM1023.2,276.2l4.2,-4.2 4.2,4.2 -4.2,4.2zM1024.1,302.1l4.2,-4.2 4.2,4.2 -4.2,4.2zM1024.9,354.2l4.2,-4.2 4.2,4.2 -4.2,4.2zM1025.7,364.8l4.2,-4.2 4.2,4.2 -4.2,4.2zM1026.6,363.7l4.2,-4.2 4.2,4.2 -4.2,4.2zM1027.4,354.4l4.2,-4.2 4.2,4.2 -4.2,4.2zM1028.2,315.5l4.2,-4.2 4.2,4.2 -4.2,4.2zM1029.1,269.7l4.2,-4.2 4.2,4.2 -4.2,4.2zM1029.9,418.5l4.2,-4.2 4.2,4.2 -4.2,4.2zM1030.7,333.3l4.2,-4.2 4.2,4.2 -4.2,4.2zM1031.6,375.1l4.2,-4.2 4.2,4.2 -4.2,4.2zM1032.4,307.5l4.2,-4.2 4.2,4.2 -4.2,4.2zM1033.2,299.1l4.2,-4.2 4.2,4.2 -4.2,4.2zM1034.1,364.0l4.2,-4.2 4.2,4.2 -4.2,4.2zM1034.9,351.9l4.2,-4.2 4.2,4.2 -4.2,4.2zM1035.7,371.5l4.2,-4.2 4.2,4.2 -4.2,4.2zM1036.6,320.8l4.2,-4.2 4.2,4.2 -4.2,4.2zM1037.4,444.9l4.2,-4.2 4.2,4.2 -4.2,4.2zM1038.2,379.4l4.2,-4.2 4.2,4.2 -4.2,4.2zM1039.1,363.1l4.2,-4.2 4.2,4.2 -4.2,4.2zM1039.9,290.8l4.2,-4.2 4.2,4.2 -4.2,4.2zM1040.7,245.0l4.2,-4.2 4.2,4.2 -4.2,4.2zM1041.6,334.6l4.2,-4.2 4.2,4.2 -4.2,4.2zM1042.4,381.2l4.2,-4.2 4.2,4.2 -4.2,4.2zM1043.2,330.5l4.2,-4.2 4.2,4.2 -4.2,4.2zM1044.1,365.4l4.2,-4.2 4.2,4.2 -4.2,4.2zM1044.9,313.8l4.2,-4.2 4.2,4.2 -4.2,4.2zM1045.7,372.6l4.2,-4.2 4.2,4.2 -4.2,4.2zM1046.6,343.3l4.2,-4.2 4.2,4.2 -4.2,4.2zM1047.4,328.7l4.2,-4.2 4.2,4.2 -4.2,4.2zM1048.2,307.9l4.2,-4.2 4.2,4.2 -4.2,4.2zM1049.1,330.1l4.2,-4.2 4.2,4.2 -4.2,4.2zM1049.9,340.0l4.2,-4.2 4.2,4.2 -4.2,4.2zM1050.7,323.8l4.2,-4.2 4.2,4.2 -4.2,4.2zM1051.5,399.4l4.2,-4.2 4.2,4.2 -4.2,4.2zM1052.4,297.0l4.2,-4.2 4.2,4.2 -4.2,4.2zM1053.2,345.1l4.2,-4.2 4.2,4.2 -4.2,4.2zM1054.0,361.4l4.2,-4.2 4.2,4.2 -4.2,4.2zM1054.9,280.4l4.2,-4.2 4.2,4.2 -4.2,4.2zM1055.7,406.1l4.2,-4.2 4.2,4.2 -4.2,4.2zM1056.5,338.7l4.2,-4.2 4.2,4.2 -4.2,4.2zM1057.4,370.4l4.2,-4.2 4.2,4.2 -4.2,4.2zM1058.2,293.7l4.2,-4.2 4.2,4.2 -4.2,4.2zM1059.0,360.8l4.2,-4.2 4.2,4.2 -4.2,4.2zM1059.9,339.9l4.2,-4.2 4.2,4.2 -4.2,4.2zM1060.7,403.3l4.2,-4.2 4.2,4.2 -4.2,4.2zM1061.5,297.1l4.2,-4.2 4.2,4.2 -4.2,4.2zM1062.4,393.9l4.2,-4.2 4.2,4.2 -4.2,4.2zM1063.2,320.0l4.2,-4.2 4.2,4.2 -4.2,4.2zM1064.0,313.7l4.2,-4.2 4.2,4.2 -4.2,4.2zM1064.9,362.6l4.2,-4.2 4.2,4.2 -4.2,4.2zM1065.7,285.9l4.2,-4.2 4.2,4.2 -4.2,4.2zM1066.5,398.9l4.2,-4.2 4.2,4.2 -4.2,4.2zM1067.4,439.7l4.2,-4.2 4.2,4.2 -4.2,4.2zM1068.2,347.9l4.2,-4.2 4.2,4.2 -4.2,4.2zM1069.0,336.6l4.2,-4.2 4.2,4.2 -4.2,4.2zM1069.9,472.7l4.2,-4.2 4.2,4.2 -4.2,4.2zM1070.7,348.5l4.2,-4.2 4.2,4.2 -4.2,4.2zM1071.5,384.3l4.2,-4.2 4.2,4.2 -4.2,4.2zM1072.4,357.5l4.2,-4.2 4.2,4.2 -4.2,4.2zM1073.2,295.8l4.2,-4.2 4.2,4.2 -4.2,4.2zM1074.0,399.9l4.2,-4.2 4.2,4.2 -4.2,4.2zM1074.9,352.5l4.2,-4.2 4.2,4.2 -4.2,4.2zM1075.7,393.5l4.2,-4.2 4.2,4.2 -4.2,4.2zM1076.5,314.6l4.2,-4.2 4.2,4.2 -4.2,4.2zM1077.4,420.3l4.2,-4.2 4.2,4.2 -4.2,4.2zM1078.2,371.4l4.2,-4.2 4.2,4.2 -4.2,4.2zM1079.0,364.0l4.2,-4.2 4.2,4.2 -4.2,4.2zM1079.9,355.6l4.2,-4.2 4.2,4.2 -4.2,4.2zM1080.7,269.6l4.2,-4.2 4.2,4.2 -4.2,4.2zM1081.5,299.7l4.2,-4.2 4.2,4.2 -4.2,4.2zM1082.4,397.4l4.2,-4.2 4.2,4.2 -4.2,4.2zM1083.2,275.4l4.2,-4.2 4.2,4.2 -4.2,4.2zM1084.0,402.4l4.2,-4.2 4.2,4.2 -4.2,4.2zM1084.9,427.6l4.2,-4.2 4.2,4.2 -4.2,4.2zM1085.7,412.8l4.2,-4.2 4.2,4.2 -4.2,4.2zM1086.5,347.4l4.2,-4.2 4.2,4.2 -4.2,4.2zM1087.4,334.2l4.2,-4.2 4.2,4.2 -4.2,4.2zM1088.2,438.0l4.2,-4.2 4.2,4.2 -4.2,4.2zM1089.0,237.2l4.2,-4.2 4.2,4.2 -4.2,4.2zM1089.8,362.8l4.2,-4.2 4.2,4.2 -4.2,4.2zM1090.7,323.1l4.2,-4.2 4.2,4.2 -4.2,4.2zM1091.5,361.8l4.2,-4.2 4.2,4.2 -4.2,4.2zM1092.3,310.2l4.2,-4.2 4.2,4.2 -4.2,4.2zM1093.2,320.3l4.2,-4.2 4.2,4.2 -4.2,4.2zM1094.0,384.3l4.2,-4.2 4.2,4.2 -4.2,4.2zM1094.8,282.7l4.2,-4.2 4.2,4.2 -4.2,4.2zM1095.7,363.3l4.2,-4.2 4.2,4.2 -4.2,4.2zM1096.5,305.9l4.2,-4.2 4.2,4.2 -4.2,4.2zM1097.3,283.6l4.2,-4.2 4.2,4.2 -4.2,4.2zM1098.2,366.7l4.2,-4.2 4.2,4.2 -4.2,4.2zM1099.0,330.9l4.2,-4.2 4.2,4.2 -4.2,4.2zM1099.8,356.9l4.2,-4.2 4.2,4.2 -4.2,4.2zM1100.7,361.5l4.2,-4.2 4.2,4.2 -4.2,4.2zM1101.5,315.6l4.2,-4.2 4.2,4.2 -4.2,4.2zM1102.3,356.4l4.2,-4.2 4.2,4.2 -4.2,4.2zM1103.2,275.1l4.2,-4.2 4.2,4.2 -4.2,4.2zM1104.0,273.1l4.2,-4.2 4.2,4.2 -4.2,4.2zM1104.8,326.6l4.2,-4.2 4.2,4.2 -4.2,4.2zM1105.7,357.7l4.2,-4.2 4.2,4.2 -4.2,4.2zM1106.5,234.3l4.2,-4.2 4.2,4.2 -4.2,4.2zM1107.3,244.2l4.2,-4.2 4.2,4.2 -4.2,4.2zM1108.2,330.0l4.2,-4.2 4.2,4.2 -4.2,4.2zM1109.0,361.4l4.2,-4.2 4.2,4.2 -4.2,4.2zM1109.8,342.2l4.2,-4.2 4.2,4.2 -4.2,4.2zM1110.7,315.0l4.2,-4.2 4.2,4.2 -4.2,4.2zM1111.5,282.2l4.2,-4.2 4.2,4.2 -4.2,4.2zM1112.3,288.0l4.2,-4.2 4.2,4.2 -4.2,4.2zM1113.2,307.9l4.2,-4.2 4.2,4.2 -4.2,4.2zM1114.0,333.5l4.2,-4.2 4.2,4.2 -4.2,4.2zM1114.8,317.3l4.2,-4.2 4.2,4.2 -4.2,4.2zM1115.7,335.1l4.2,-4.2 4.2,4.2 -4.2,4.2zM1116.5,320.2l4.2,-4.2 4.2,4.2 -4.2,4.2zM1117.3,326.4l4.2,-4.2 4.2,4.2 -4.2,4.2zM1118.2,302.1l4.2,-4.2 4.2,4.2 -4.2,4.2zM1119.0,346.3l4.2,-4.2 4.2,4.2 -4.2,4.2zM1119.8,334.4l4.2,-4.2 4.2,4.2 -4.2,4.2zM1120.7,238.6l4.2,-4.2 4.2,4.2 -4.2,4.2zM1121.5,365.8l4.2,-4.2 4.2,4.2 -4.2,4.2zM1122.3,390.0l4.2,-4.2 4.2,4.2 -4.2,4.2zM1123.2,364.4l4.2,-4.2 4.2,4.2 -4.2,4.2zM1124.0,350.3l4.2,-4.2 4.2,4.2 -4.2,4.2zM1124.8,336.8l4.2,-4.2 4.2,4.2 -4.2,4.2zM1125.6,336.2l4.2,-4.2 4.2,4.2 -4.2,4.2zM1126.5,349.1l4.2,-4.2 4.2,4.2 -4.2,4.2zM1127.3,240.2l4.2,-4.2 4.2,4.2 -4.2,4.2zM1128.1,321.2l4.2,-4.2 4.2,4.2 -4.2,4.2zM1129.0,317.3l4.2,-4.2 4.2,4.2 -4.2,4.2zM1129.8,321.5l4.2,-4.2 4.2,4.2 -4.2,4.2zM1130.6,356.5l4.2,-4.2 4.2,4.2 -4.2,4.2zM1131.5,365.4l4.2,-4.2 4.2,4.2 -4.2,4.2zM1132.3,300.5l4.2,-4.2 4.2,4.2 -4.2,4.2zM1133.1,346.6l4.2,-4.2 4.2,4.2 -4.2,4.2zM1134.0,401.3l4.2,-4.2 4.2,4.2 -4.2,4.2zM1134.8,418.2l4.2,-4.2 4.2,4.2 -4.2,4.2zM1135.6,326.8l4.2,-4.2 4.2,4.2 -4.2,4.2zM1136.5,364.0l4.2,-4.2 4.2,4.2 -4.2,4.2zM1137.3,339.3l4.2,-4.2 4.2,4.2 -4.2,4.2zM1138.1,358.2l4.2,-4.2 4.2,4.2 -4.2,4.2zM1139.0,353.6l4.2,-4.2 4.2,4.2 -4.2,4.2zM1139.8,345.4l4.2,-4.2 4.2,4.2 -4.2,4.2zM1140.6,387.1l4.2,-4.2 4.2,4.2 -4.2,4.2zM1141.5,341.3l4.2,-4.2 4.2,4.2 -4.2,4.2zM1142.3,303.9l4.2,-4.2 4.2,4.2 -4.2,4.2zM1143.1,315.8l4.2,-4.2 4.2,4.2 -4.2,4.2zM1144.0,409.4l4.2,-4.2 4.2,4.2 -4.2,4.2zM1144.8,395.1l4.2,-4.2 4.2,4.2 -4.2,4.2zM1145.6,395.6l4.2,-4.2 4.2,4.2 -4.2,4.2zM1146.5,355.2l4.2,-4.2 4.2,4.2 -4.2,4.2zM1147.3,314.1l4.2,-4.2 4.2,4.2 -4.2,4.2zM1148.1,335.2l4.2,-4.2 4.2,4.2 -4.2,4.2zM1149.0,415.1l4.2,-4.2 4.2,4.2 -4.2,4.2zM1149.8,347.2l4.2,-4.2 4.2,4.2 -4.2,4.2zM1150.6,317.9l4.2,-4.2 4.2,4.2 -4.2,4.2zM1151.5,365.1l4.2,-4.2 4.2,4.2 -4.2,4.2zM1152.3,305.3l4.2,-4.2 4.2,4.2 -4.2,4.2zM1153.1,371.5l4.2,-4.2 4.2,4.2 -4.2,4.2zM1154.0,301.4l4.2,-4.2 4.2,4.2 -4.2,4.2zM1154.8,255.9l4.2,-4.2 4.2,4.2 -4.2,4.2zM1155.6,393.3l4.2,-4.2 4.2,4.2 -4.2,4.2zM1156.5,356.4l4.2,-4.2 4.2,4.2 -4.2,4.2zM1157.3,321.5l4.2,-4.2 4.2,4.2 -4.2,4.2zM1158.1,234.3l4.2,-4.2 4.2,4.2 -4.2,4.2zM1159.0,410.1l4.2,-4.2 4.2,4.2 -4.2,4.2zM1159.8,319.9l4.2,-4.2 4.2,4.2 -4.2,4.2zM1160.6,331.7l4.2,-4.2 4.2,4.2 -4.2,4.2zM1161.5,359.8l4.2,-4.2 4.2,4.2 -4.2,4.2zM1162.3,376.7l4.2,-4.2 4.2,4.2 -4.2,4.2zM1163.1,366.1l4.2,-4.2 4.2,4.2 -4.2,4.2zM1163.9,358.7l4.2,-4.2 4.2,4.2 -4.2,4.2zM1164.8,430.6l4.2,-4.2 4.2,4.2 -4.2,4.2zM1165.6,289.6l4.2,-4.2 4.2,4.2 -4.2,4.2zM1166.4,429.8l4.2,-4.2 4.2,4.2 -4.2,4.2zM1167.3,368.1l4.2,-4.2 4.2,4.2 -4.2,4.2zM1168.1,378.2l4.2,-4.2 4.2,4.2 -4.2,4.2zM1168.9,369.9l4.2,-4.2 4.2,4.2 -4.2,4.2zM1169.8,351.8l4.2,-4.2 4.2,4.2 -4.2,4.2zM1170.6,382.0l4.2,-4.2 4.2,4.2 -4.2,4.2zM1171.4,360.0l4.2,-4.2 4.2,4.2 -4.2,4.2zM1172.3,283.2l4.2,-4.2 4.2,4.2 -4.2,4.2zM1173.1,306.5l4.2,-4.2 4.2,4.2 -4.2,4.2zM1173.9,355.5l4.2,-4.2 4.2,4.2 -4.2,4.2zM1174.8,307.8l4.2,-4.2 4.2,4.2 -4.2,4.2zM1175.6,369.4l4.2,-4.2 4.2,4.2 -4.2,4.2zM1176.4,329.4l4.2,-4.2 4.2,4.2 -4.2,4.2zM1177.3,390.1l4.2,-4.2 4.2,4.2 -4.2,4.2zM1178.1,377.1l4.2,-4.2 4.2,4.2 -4.2,4.2zM1178.9,364.3l4.2,-4.2 4.2,4.2 -4.2,4.2zM1179.8,282.0l4.2,-4.2 4.2,4.2 -4.2,4.2zM1180.6,320.1l4.2,-4.2 4.2,4.2 -4.2,4.2zM1181.4,307.8l4.2,-4.2 4.2,4.2 -4.2,4.2zM1182.3,322.7l4.2,-4.2 4.2,4.2 -4.2,4.2zM1183.1,280.0l4.2,-4.2 4.2,4.2 -4.2,4.2zM1183.9,312.0l4.2,-4.2 4.2,4.2 -4.2,4.2zM1184.8,298.7l4.2,-4.2 4.2,4.2 -4.2,4.2zM1185.6,321.4l4.2,-4.2 4.2,4.2 -4.2,4.2zM1186.4,362.2l4.2,-4.2 4.2,4.2 -4.2,4.2zM1187.3,357.2l4.2,-4.2 4.2,4.2 -4.2,4.2zM1188.1,280.7l4.2,-4.2 4.2,4.2 -4.2,4.2zM1188.9,273.0l4.2,-4.2 4.2,4.2 -4.2,4.2zM1189.8,305.2l4.2,-4.2 4.2,4.2 -4.2,4.2zM1190.6,388.3l4.2,-4.2 4.2,4.2 -4.2,4.2zM1191.4,264.9l4.2,-4.2 4.2,4.2 -4.2,4.2zM1192.3,311.7l4.2,-4.2 4.2,4.2 -4.2,4.2zM1193.1,449.7l4.2,-4.2 4.2,4.2 -4.2,4.2zM1193.9,321.6l4.2,-4.2 4.2,4.2 -4.2,4.2zM1194.8,335.7l4.2,-4.2 4.2,4.2 -4.2,4.2zM1195.6,253.8l4.2,-4.2 4.2,4.2 -4.2,4.2zM1196.4,255.9l4.2,-4.2 4.2,4.2 -4.2,4.2zM1197.3,359.6l4.2,-4.2 4.2,4.2 -4.2,4.2zM1198.1,325.5l4.2,-4.2 4.2,4.2 -4.2,4.2zM1198.9,305.9l4.2,-4.2 4.2,4.2 -4.2,4.2zM1199.8,268.1l4.2,-4.2 4.2,4.2 -4.2,4.2zM1200.6,411.7l4.2,-4.2 4.2,4.2 -4.2,4.2zM1201.4,286.4l4.2,-4.2 4.2,4.2 -4.2,4.2zM1202.2,260.9l4.2,-4.2 4.2,4.2 -4.2,4.2zM1203.1,339.7l4.2,-4.2 4.2,4.2 -4.2,4.2zM1203.9,331.5l4.2,-4.2 4.2,4.2 -4.2,4.2zM1204.7,284.8l4.2,-4.2 4.2,4.2 -4.2,4.2zM1205.6,320.7l4.2,-4.2 4.2,4.2 -4.2,4.2zM1206.4,388.5l4.2,-4.2 4.2,4.2 -4.2,4.2zM1207.2,384.8l4.2,-4.2 4.2,4.2 -4.2,4.2zM1208.1,382.2l4.2,-4.2 4.2,4.2 -4.2,4.2zM1208.9,399.5l4.2,-4.2 4.2,4.2 -4.2,4.2zM1209.7,348.4l4.2,-4.2 4.2,4.2 -4.2,4.2zM1210.6,367.5l4.2,-4.2 4.2,4.2 -4.2,4.2zM1211.4,446.8l4.2,-4.2 4.2,4.2 -4.2,4.2zM1212.2,320.0l4.2,-4.2 4.2,4.2 -4.2,4.2zM1213.1,278.4l4.2,-4.2 4.2,4.2 -4.2,4.2zM1213.9,337.8l4.2,-4.2 4.2,4.2 -4.2,4.2zM1214.7,416.7l4.2,-4.2 4.2,4.2 -4.2,4.2zM1215.6,292.2l4.2,-4.2 4.2,4.2 -4.2,4.2zM1216.4,349.4l4.2,-4.2 4.2,4.2 -4.2,4.2zM1217.2,300.1l4.2,-4.2 4.2,4.2 -4.2,4.2zM1218.1,361.2l4.2,-4.2 4.2,4.2 -4.2,4.2zM1218.9,332.1l4.2,-4.2 4.2,4.2 -4.2,4.2zM1219.7,348.4l4.2,-4.2 4.2,4.2 -4.2,4.2zM1220.6,342.5l4.2,-4.2 4.2,4.2 -4.2,4.2zM1221.4,291.1l4.2,-4.2 4.2,4.2 -4.2,4.2zM1222.2,363.0l4.2,-4.2 4.2,4.2 -4.2,4.2zM1223.1,330.0l4.2,-4.2 4.2,4.2 -4.2,4.2zM1223.9,326.1l4.2,-4.2 4.2,4.2 -4.2,4.2zM1224.7,326.0l4.2,-4.2 4.2,4.2 -4.2,4.2zM1225.6,415.0l4.2,-4.2 4.2,4.2 -4.2,4.2zM1226.4,316.0l4.2,-4.2 4.2,4.2 -4.2,4.2zM1227.2,435.8l4.2,-4.2 4.2,4.2 -4.2,4.2zM1228.1,383.1l4.2,-4.2 4.2,4.2 -4.2,4.2zM1228.9,341.6l4.2,-4.2 4.2,4.2 -4.2,4.2zM1229.7,306.0l4.2,-4.2 4.2,4.2 -4.2,4.2zM1230.6,289.6l4.2,-4.2 4.2,4.2 -4.2,4.2zM1231.4,291.1l4.2,-4.2 4.2,4.2 -4.2,4.2zM1232.2,300.1l4.2,-4.2 4.2,4.2 -4.2,4.2zM1233.1,386.8l4.2,-4.2 4.2,4.2 -4.2,4.2zM1233.9,276.8l4.2,-4.2 4.2,4.2 -4.2,4.2zM1234.7,333.4l4.2,-4.2 4.2,4.2 -4.2,4.2zM1235.6,280.7l4.2,-4.2 4.2,4.2 -4.2,4.2zM1236.4,408.8l4.2,-4.2 4.2,4.2 -4.2,4.2zM1237.2,360.1l4.2,-4.2 4.2,4.2 -4.2,4.2zM1238.1,345.9l4.2,-4.2 4.2,4.2 -4.2,4.2zM1238.9,366.6l4.2,-4.2 4.2,4.2 -4.2,4.2zM1239.7,224.3l4.2,-4.2 4.2,4.2 -4.2,4.2zM1240.5,295.1l4.2,-4.2 4.2,4.2 -4.2,4.2zM1241.4,290.2l4.2,-4.2 4.2,4.2 -4.2,4.2zM1242.2,350.3l4.2,-4.2 4.2,4.2 -4.2,4.2zM1243.0,351.4l4.2,-4.2 4.2,4.2 -4.2,4.2zM1243.9,278.1l4.2,-4.2 4.2,4.2 -4.2,4.2zM1244.7,356.3l4.2,-4.2 4.2,4.2 -4.2,4.2zM1245.5,302.7l4.2,-4.2 4.2,4.2 -4.2,4.2zM1246.4,341.4l4.2,-4.2 4.2,4.2 -4.2,4.2zM1247.2,341.7l4.2,-4.2 4.2,4.2 -4.2,4.2zM1248.0,348.8l4.2,-4.2 4.2,4.2 -4.2,4.2zM1248.9,345.5l4.2,-4.2 4.2,4.2 -4.2,4.2zM1249.7,220.0l4.2,-4.2 4.2,4.2 -4.2,4.2zM1250.5,290.6l4.2,-4.2 4.2,4.2 -4.2,4.2zM1251.4,289.9l4.2,-4.2 4.2,4.2 -4.2,4.2zM1252.2,308.5l4.2,-4.2 4.2,4.2 -4.2,4.2zM1253.0,316.5l4.2,-4.2 4.2,4.2 -4.2,4.2zM1253.9,323.6l4.2,-4.2 4.2,4.2 -4.2,4.2zM1254.7,310.9l4.2,-4.2 4.2,4.2 -4.2,4.2zM1255.5,355.4l4.2,-4.2 4.2,4.2 -4.2,4.2zM1256.4,361.5l4.2,-4.2 4.2,4.2 -4.2,4.2zM1257.2,334.4l4.2,-4.2 4.2,4.2 -4.2,4.2zM1258.0,398.7l4.2,-4.2 4.2,4.2 -4.2,4.2zM1258.9,343.0l4.2,-4.2 4.2,4.2 -4.2,4.2zM1259.7,399.2l4.2,-4.2 4.2,4.2 -4.2,4.2zM1260.5,371.3l4.2,-4.2 4.2,4.2 -4.2,4.2zM1261.4,353.5l4.2,-4.2 4.2,4.2 -4.2,4.2zM1262.2,304.4l4.2,-4.2 4.2,4.2 -4.2,4.2zM1263.0,338.9l4.2,-4.2 4.2,4.2 -4.2,4.2zM1263.9,326.6l4.2,-4.2 4.2,4.2 -4.2,4.2zM1264.7,289.4l4.2,-4.2 4.2,4.2 -4.2,4.2zM1265.5,351.6l4.2,-4.2 4.2,4.2 -4.2,4.2zM1266.4,371.1l4.2,-4.2 4.2,4.2 -4.2,4.2zM1267.2,328.4l4.2,-4.2 4.2,4.2 -4.2,4.2zM1268.0,336.0l4.2,-4.2 4.2,4.2 -4.2,4.2zM1268.9,394.5l4.2,-4.2 4.2,4.2 -4.2,4.2zM1269.7,299.8l4.2,-4.2 4.2,4.2 -4.2,4.2zM1270.5,337.2l4.2,-4.2 4.2,4.2 -4.2,4.2zM1271.4,341.4l4.2,-4.2 4.2,4.2 -4.2,4.2zM1272.2,358.8l4.2,-4.2 4.2,4.2 -4.2,4.2zM1273.0,333.5l4.2,-4.2 4.2,4.2 -4.2,4.2zM1273.9,290.1l4.2,-4.2 4.2,4.2 -4.2,4.2zM1274.7,307.1l4.2,-4.2 4.2,4.2 -4.2,4.2zM1275.5,296.7l4.2,-4.2 4.2,4.2 -4.2,4.2zM1276.4,341.9l4.2,-4.2 4.2,4.2 -4.2,4.2zM1277.2,267.7l4.2,-4.2 4.2,4.2 -4.2,4.2zM1278.0,280.1l4.2,-4.2 4.2,4.2 -4.2,4.2zM1278.8,329.8l4.2,-4.2 4.2,4.2 -4.2,4.2zM1279.7,429.5l4.2,-4.2 4.2,4.2 -4.2,4.2zM1280.5,326.5l4.2,-4.2 4.2,4.2 -4.2,4.2zM1281.3,234.3l4.2,-4.2 4.2,4.2 -4.2,4.2zM1282.2,329.6l4.2,-4.2 4.2,4.2 -4.2,4.2zM1283.0,365.8l4.2,-4.2 4.2,4.2 -4.2,4.2zM1283.8,261.3l4.2,-4.2 4.2,4.2 -4.2,4.2zM1284.7,349.0l4.2,-4.2 4.2,4.2 -4.2,4.2zM1285.5,306.1l4.2,-4.2 4.2,4.2 -4.2,4.2zM1286.3,295.2l4.2,-4.2 4.2,4.2 -4.2,4.2zM1287.2,379.7l4.2,-4.2 4.2,4.2 -4.2,4.2zM1288.0,318.2l4.2,-4.2 4.2,4.2 -4.2,4.2zM1288.8,276.9l4.2,-4.2 4.2,4.2 -4.2,4.2zM1289.7,334.2l4.2,-4.2 4.2,4.2 -4.2,4.2zM1290.5,297.1l4.2,-4.2 4.2,4.2 -4.2,4.2zM1291.3,323.1l4.2,-4.2 4.2,4.2 -4.2,4.2zM1292.2,283.4l4.2,-4.2 4.2,4.2 -4.2,4.2zM1293.0,446.8l4.2,-4.2 4.2,4.2 -4.2,4.2zM1293.8,364.9l4.2,-4.2 4.2,4.2 -4.2,4.2zM1294.7,334.3l4.2,-4.2 4.2,4.2 -4.2,4.2zM1295.5,308.6l4.2,-4.2 4.2,4.2 -4.2,4.2zM1296.3,348.0l4.2,-4.2 4.2,4.2 -4.2,4.2zM1297.2,439.7l4.2,-4.2 4.2,4.2 -4.2,4.2zM1298.0,337.7l4.2,-4.2 4.2,4.2 -4.2,4.2zM1298.8,335.0l4.2,-4.2 4.2,4.2 -4.2,4.2zM1299.7,350.0l4.2,-4.2 4.2,4.2 -4.2,4.2zM1300.5,313.0l4.2,-4.2 4.2,4.2 -4.2,4.2zM1301.3,295.2l4.2,-4.2 4.2,4.2 -4.2,4.2zM1302.2,298.0l4.2,-4.2 4.2,4.2 -4.2,4.2zM1303.0,301.0l4.2,-4.2 4.2,4.2 -4.2,4.2zM1303.8,282.0l4.2,-4.2 4.2,4.2 -4.2,4.2zM1304.7,379.9l4.2,-4.2 4.2,4.2 -4.2,4.2zM1305.5,332.8l4.2,-4.2 4.2,4.2 -4.2,4.2zM1306.3,321.7l4.2,-4.2 4.2,4.2 -4.2,4.2zM1307.2,309.3l4.2,-4.2 4.2,4.2 -4.2,4.2zM1308.0,391.3l4.2,-4.2 4.2,4.2 -4.2,4.2zM1308.8,258.8l4.2,-4.2 4.2,4.2 -4.2,4.2zM1309.7,364.7l4.2,-4.2 4.2,4.2 -4.2,4.2zM1310.5,320.0l4.2,-4.2 4.2,4.2 -4.2,4.2zM1311.3,301.2l4.2,-4.2 4.2,4.2 -4.2,4.2zM1312.2,287.1l4.2,-4.2 4.2,4.2 -4.2,4.2zM1313.0,353.8l4.2,-4.2 4.2,4.2 -4.2,4.2zM1313.8,347.5l4.2,-4.2 4.2,4.2 -4.2,4.2zM1314.6,312.0l4.2,-4.2 4.2,4.2 -4.2,4.2zM1315.5,303.0l4.2,-4.2 4.2,4.2 -4.2,4.2zM1316.3,289.9l4.2,-4.2 4.2,4.2 -4.2,4.2zM1317.1,325.9l4.2,-4.2 4.2,4.2 -4.2,4.2zM1318.0,349.4l4.2,-4.2 4.2,4.2 -4.2,4.2zM1318.8,373.0l4.2,-4.2 4.2,4.2 -4.2,4.2zM1319.6,255.0l4.2,-4.2 4.2,4.2 -4.2,4.2zM1320.5,374.1l4.2,-4.2 4.2,4.2 -4.2,4.2zM1321.3,295.5l4.2,-4.2 4.2,4.2 -4.2,4.2zM1322.1,311.9l4.2,-4.2 4.2,4.2 -4.2,4.2zM1323.0,293.9l4.2,-4.2 4.2,4.2 -4.2,4.2zM1323.8,287.0l4.2,-4.2 4.2,4.2 -4.2,4.2zM1324.6,272.3l4.2,-4.2 4.2,4.2 -4.2,4.2zM1325.5,369.3l4.2,-4.2 4.2,4.2 -4.2,4.2zM1326.3,309.3l4.2,-4.2 4.2,4.2 -4.2,4.2zM1327.1,399.2l4.2,-4.2 4.2,4.2 -4.2,4.2zM1328.0,323.4l4.2,-4.2 4.2,4.2 -4.2,4.2zM1328.8,360.1l4.2,-4.2 4.2,4.2 -4.2,4.2zM1329.6,331.8l4.2,-4.2 4.2,4.2 -4.2,4.2zM1330.5,277.8l4.2,-4.2 4.2,4.2 -4.2,4.2zM1331.3,319.8l4.2,-4.2 4.2,4.2 -4.2,4.2zM1332.1,281.3l4.2,-4.2 4.2,4.2 -4.2,4.2zM1333.0,329.4l4.2,-4.2 4.2,4.2 -4.2,4.2zM1333.8,305.5l4.2,-4.2 4.2,4.2 -4.2,4.2zM1334.6,231.4l4.2,-4.2 4.2,4.2 -4.2,4.2zM1335.5,415.6l4.2,-4.2 4.2,4.2 -4.2,4.2zM1336.3,344.8l4.2,-4.2 4.2,4.2 -4.2,4.2zM1337.1,326.7l4.2,-4.2 4.2,4.2 -4.2,4.2zM1338.0,333.9l4.2,-4.2 4.2,4.2 -4.2,4.2zM1338.8,314.4l4.2,-4.2 4.2,4.2 -4.2,4.2zM1339.6,318.3l4.2,-4.2 4.2,4.2 -4.2,4.2zM1340.5,279.6l4.2,-4.2 4.2,4.2 -4.2,4.2zM1341.3,294.0l4.2,-4.2 4.2,4.2 -4.2,4.2zM1342.1,335.1l4.2,-4.2 4.2,4.2 -4.2,4.2zM1343.0,288.9l4.2,-4.2 4.2,4.2 -4.2,4.2zM1343.8,399.8l4.2,-4.2 4.2,4.2 -4.2,4.2zM1344.6,337.1l4.2,-4.2 4.2,4.2 -4.2,4.2zM1345.5,334.1l4.2,-4.2 4.2,4.2 -4.2,4.2zM1346.3,281.0l4.2,-4.2 4.2,4.2 -4.2,4.2zM1347.1,353.1l4.2,-4.2 4.2,4.2 -4.2,4.2zM1348.0,390.8l4.2,-4.2 4.2,4.2 -4.2,4.2zM1348.8,330.2l4.2,-4.2 4.2,4.2 -4.2,4.2zM1349.6,274.6l4.2,-4.2 4.2,4.2 -4.2,4.2zM1350.5,345.9l4.2,-4.2 4.2,4.2 -4.2,4.2zM1351.3,340.6l4.2,-4.2 4.2,4.2 -4.2,4.2zM1352.1,343.6l4.2,-4.2 4.2,4.2 -4.2,4.2zM1352.9,332.8l4.2,-4.2 4.2,4.2 -4.2,4.2zM1353.8,284.1l4.2,-4.2 4.2,4.2 -4.2,4.2zM1354.6,257.9l4.2,-4.2 4.2,4.2 -4.2,4.2zM1355.4,356.1l4.2,-4.2 4.2,4.2 -4.2,4.2zM1356.3,334.4l4.2,-4.2 4.2,4.2 -4.2,4.2zM1357.1,258.9l4.2,-4.2 4.2,4.2 -4.2,4.2zM1357.9,324.6l4.2,-4.2 4.2,4.2 -4.2,4.2zM1358.8,373.3l4.2,-4.2 4.2,4.2 -4.2,4.2zM1359.6,339.8l4.2,-4.2 4.2,4.2 -4.2,4.2zM1360.4,338.5l4.2,-4.2 4.2,4.2 -4.2,4.2zM1361.3,351.4l4.2,-4.2 4.2,4.2 -4.2,4.2zM1362.1,338.1l4.2,-4.2 4.2,4.2 -4.2,4.2zM1362.9,311.6l4.2,-4.2 4.2,4.2 -4.2,4.2zM1363.8,324.3l4.2,-4.2 4.2,4.2 -4.2,4.2zM1364.6,307.0l4.2,-4.2 4.2,4.2 -4.2,4.2zM1365.4,343.0l4.2,-4.2 4.2,4.2 -4.2,4.2zM1366.3,336.4l4.2,-4.2 4.2,4.2 -4.2,4.2zM1367.1,319.8l4.2,-4.2 4.2,4.2 -4.2,4.2zM1367.9,326.8l4.2,-4.2 4.2,4.2 -4.2,4.2zM1368.8,325.9l4.2,-4.2 4.2,4.2 -4.2,4.2zM1369.6,285.5l4.2,-4.2 4.2,4.2 -4.2,4.2zM1370.4,370.5l4.2,-4.2 4.2,4.2 -4.2,4.2zM1371.3,403.1l4.2,-4.2 4.2,4.2 -4.2,4.2zM1372.1,301.3l4.2,-4.2 4.2,4.2 -4.2,4.2zM1372.9,337.6l4.2,-4.2 4.2,4.2 -4.2,4.2zM1373.8,276.7l4.2,-4.2 4.2,4.2 -4.2,4.2zM1374.6,330.9l4.2,-4.2 4.2,4.2 -4.2,4.2zM1375.4,371.7l4.2,-4.2 4.2,4.2 -4.2,4.2zM1376.3,243.4l4.2,-4.2 4.2,4.2 -4.2,4.2zM1377.1,311.2l4.2,-4.2 4.2,4.2 -4.2,4.2zM1377.9,343.2l4.2,-4.2 4.2,4.2 -4.2,4.2zM1378.8,158.9l4.2,-4.2 4.2,4.2 -4.2,4.2zM1379.6,303.9l4.2,-4.2 4.2,4.2 -4.2,4.2zM1380.4,350.4l4.2,-4.2 4.2,4.2 -4.2,4.2zM1381.3,309.3l4.2,-4.2 4.2,4.2 -4.2,4.2zM1382.1,279.2l4.2,-4.2 4.2,4.2 -4.2,4.2zM1382.9,375.8l4.2,-4.2 4.2,4.2 -4.2,4.2zM1383.8,217.1l4.2,-4.2 4.2,4.2 -4.2,4.2zM1384.6,303.6l4.2,-4.2 4.2,4.2 -4.2,4.2zM1385.4,258.0l4.2,-4.2 4.2,4.2 -4.2,4.2zM1386.3,285.3l4.2,-4.2 4.2,4.2 -4.2,4.2zM1387.1,337.4l4.2,-4.2 4.2,4.2 -4.2,4.2zM1387.9,263.9l4.2,-4.2 4.2,4.2 -4.2,4.2zM1388.8,332.6l4.2,-4.2 4.2,4.2 -4.2,4.2zM1389.6,324.6l4.2,-4.2 4.2,4.2 -4.2,4.2zM1390.4,303.8l4.2,-4.2 4.2,4.2 -4.2,4.2zM1391.2,359.6l4.2,-4.2 4.2,4.2 -4.2,4.2zM1392.1,234.3l4.2,-4.2 4.2,4.2 -4.2,4.2zM1392.9,271.9l4.2,-4.2 4.2,4.2 -4.2,4.2zM1393.7,308.9l4.2,-4.2 4.2,4.2 -4.2,4.2zM1394.6,338.6l4.2,-4.2 4.2,4.2 -4.2,4.2zM1395.4,360.8l4.2,-4.2 4.2,4.2 -4.2,4.2zM1396.2,302.4l4.2,-4.2 4.2,4.2 -4.2,4.2zM1397.1,289.9l4.2,-4.2 4.2,4.2 -4.2,4.2zM1397.9,331.2l4.2,-4.2 4.2,4.2 -4.2,4.2zM1398.7,323.2l4.2,-4.2 4.2,4.2 -4.2,4.2zM1399.6,294.4l4.2,-4.2 4.2,4.2 -4.2,4.2zM1400.4,320.2l4.2,-4.2 4.2,4.2 -4.2,4.2zM1401.2,390.7l4.2,-4.2 4.2,4.2 -4.2,4.2zM1402.1,297.1l4.2,-4.2 4.2,4.2 -4.2,4.2zM1402.9,315.4l4.2,-4.2 4.2,4.2 -4.2,4.2zM1403.7,299.2l4.2,-4.2 4.2,4.2 -4.2,4.2zM1404.6,358.0l4.2,-4.2 4.2,4.2 -4.2,4.2zM1405.4,412.4l4.2,-4.2 4.2,4.2 -4.2,4.2zM1406.2,381.3l4.2,-4.2 4.2,4.2 -4.2,4.2zM1407.1,324.8l4.2,-4.2 4.2,4.2 -4.2,4.2zM1407.9,292.1l4.2,-4.2 4.2,4.2 -4.2,4.2zM1408.7,251.1l4.2,-4.2 4.2,4.2 -4.2,4.2zM1409.6,331.4l4.2,-4.2 4.2,4.2 -4.2,4.2zM1410.4,395.6l4.2,-4.2 4.2,4.2 -4.2,4.2zM1411.2,350.2l4.2,-4.2 4.2,4.2 -4.2,4.2zM1412.1,432.5l4.2,-4.2 4.2,4.2 -4.2,4.2zM1412.9,315.2l4.2,-4.2 4.2,4.2 -4.2,4.2zM1413.7,325.4l4.2,-4.2 4.2,4.2 -4.2,4.2zM1414.6,266.1l4.2,-4.2 4.2,4.2 -4.2,4.2zM1415.4,357.7l4.2,-4.2 4.2,4.2 -4.2,4.2zM1416.2,403.1l4.2,-4.2 4.2,4.2 -4.2,4.2zM1417.1,351.3l4.2,-4.2 4.2,4.2 -4.2,4.2zM1417.9,359.4l4.2,-4.2 4.2,4.2 -4.2,4.2zM1418.7,234.3l4.2,-4.2 4.2,4.2 -4.2,4.2zM1419.6,316.7l4.2,-4.2 4.2,4.2 -4.2,4.2zM1420.4,364.4l4.2,-4.2 4.2,4.2 -4.2,4.2zM1421.2,287.1l4.2,-4.2 4.2,4.2 -4.2,4.2zM1422.1,272.7l4.2,-4.2 4.2,4.2 -4.2,4.2zM1422.9,309.4l4.2,-4.2 4.2,4.2 -4.2,4.2zM1423.7,304.6l4.2,-4.2 4.2,4.2 -4.2,4.2zM1424.6,273.5l4.2,-4.2 4.2,4.2 -4.2,4.2zM1425.4,293.3l4.2,-4.2 4.2,4.2 -4.2,4.2zM1426.2,340.0l4.2,-4.2 4.2,4.2 -4.2,4.2zM1427.1,292.1l4.2,-4.2 4.2,4.2 -4.2,4.2zM1427.9,252.4l4.2,-4.2 4.2,4.2 -4.2,4.2zM1428.7,303.8l4.2,-4.2 4.2,4.2 -4.2,4.2zM1429.5,284.7l4.2,-4.2 4.2,4.2 -4.2,4.2zM1430.4,296.3l4.2,-4.2 4.2,4.2 -4.2,4.2zM1431.2,328.2l4.2,-4.2 4.2,4.2 -4.2,4.2zM1432.0,325.4l4.2,-4.2 4.2,4.2 -4.2,4.2zM1432.9,297.1l4.2,-4.2 4.2,4.2 -4.2,4.2zM1433.7,342.2l4.2,-4.2 4.2,4.2 -4.2,4.2zM1434.5,277.9l4.2,-4.2 4.2,4.2 -4.2,4.2zM1435.4,276.0l4.2,-4.2 4.2,4.2 -4.2,4.2zM1436.2,400.4l4.2,-4.2 4.2,4.2 -4.2,4.2zM1437.0,326.4l4.2,-4.2 4.2,4.2 -4.2,4.2zM1437.9,352.9l4.2,-4.2 4.2,4.2 -4.2,4.2zM1438.7,349.1l4.2,-4.2 4.2,4.2 -4.2,4.2zM1439.5,320.1l4.2,-4.2 4.2,4.2 -4.2,4.2zM1440.4,343.0l4.2,-4.2 4.2,4.2 -4.2,4.2zM1441.2,306.1l4.2,-4.2 4.2,4.2 -4.2,4.2zM1442.0,316.4l4.2,-4.2 4.2,4.2 -4.2,4.2zM1442.9,315.5l4.2,-4.2 4.2,4.2 -4.2,4.2zM1443.7,409.0l4.2,-4.2 4.2,4.2 -4.2,4.2zM1444.5,344.9l4.2,-4.2 4.2,4.2 -4.2,4.2zM1445.4,277.1l4.2,-4.2 4.2,4.2 -4.2,4.2zM1446.2,428.0l4.2,-4.2 4.2,4.2 -4.2,4.2zM1447.0,269.3l4.2,-4.2 4.2,4.2 -4.2,4.2zM1447.9,357.0l4.2,-4.2 4.2,4.2 -4.2,4.2zM1448.7,291.8l4.2,-4.2 4.2,4.2 -4.2,4.2zM1449.5,436.4l4.2,-4.2 4.2,4.2 -4.2,4.2zM1450.4,353.5l4.2,-4.2 4.2,4.2 -4.2,4.2zM1451.2,305.2l4.2,-4.2 4.2,4.2 -4.2,4.2zM1452.0,331.5l4.2,-4.2 4.2,4.2 -4.2,4.2zM1452.9,298.3l4.2,-4.2 4.2,4.2 -4.2,4.2zM1453.7,339.5l4.2,-4.2 4.2,4.2 -4.2,4.2zM1454.5,357.7l4.2,-4.2 4.2,4.2 -4.2,4.2zM1455.4,361.1l4.2,-4.2 4.2,4.2 -4.2,4.2zM1456.2,316.6l4.2,-4.2 4.2,4.2 -4.2,4.2zM1457.0,318.1l4.2,-4.2 4.2,4.2 -4.2,4.2zM1457.9,340.1l4.2,-4.2 4.2,4.2 -4.2,4.2zM1458.7,345.2l4.2,-4.2 4.2,4.2 -4.2,4.2zM1459.5,346.0l4.2,-4.2 4.2,4.2 -4.2,4.2zM1460.4,332.5l4.2,-4.2 4.2,4.2 -4.2,4.2zM1461.2,372.9l4.2,-4.2 4.2,4.2 -4.2,4.2zM1462.0,339.9l4.2,-4.2 4.2,4.2 -4.2,4.2zM1462.9,344.1l4.2,-4.2 4.2,4.2 -4.2,4.2zM1463.7,438.2l4.2,-4.2 4.2,4.2 -4.2,4.2zM1464.5,362.2l4.2,-4.2 4.2,4.2 -4.2,4.2zM1465.4,321.7l4.2,-4.2 4.2,4.2 -4.2,4.2zM1466.2,365.7l4.2,-4.2 4.2,4.2 -4.2,4.2zM1467.0,327.6l4.2,-4.2 4.2,4.2 -4.2,4.2zM1467.8,292.1l4.2,-4.2 4.2,4.2 -4.2,4.2zM1468.7,316.9l4.2,-4.2 4.2,4.2 -4.2,4.2zM1469.5,345.3l4.2,-4.2 4.2,4.2 -4.2,4.2zM1470.3,309.8l4.2,-4.2 4.2,4.2 -4.2,4.2zM1471.2,404.9l4.2,-4.2 4.2,4.2 -4.2,4.2zM1472.0,399.8l4.2,-4.2 4.2,4.2 -4.2,4.2zM1472.8,370.4l4.2,-4.2 4.2,4.2 -4.2,4.2zM1473.7,452.6l4.2,-4.2 4.2,4.2 -4.2,4.2zM1474.5,363.6l4.2,-4.2 4.2,4.2 -4.2,4.2zM1475.3,290.7l4.2,-4.2 4.2,4.2 -4.2,4.2zM1476.2,300.3l4.2,-4.2 4.2,4.2 -4.2,4.2zM1477.0,367.3l4.2,-4.2 4.2,4.2 -4.2,4.2zM1477.8,357.4l4.2,-4.2 4.2,4.2 -4.2,4.2zM1478.7,402.9l4.2,-4.2 4.2,4.2 -4.2,4.2zM1479.5,357.5l4.2,-4.2 4.2,4.2 -4.2,4.2zM1480.3,419.2l4.2,-4.2 4.2,4.2 -4.2,4.2zM1481.2,313.3l4.2,-4.2 4.2,4.2 -4.2,4.2zM1482.0,384.8l4.2,-4.2 4.2,4.2 -4.2,4.2zM1482.8,342.3l4.2,-4.2 4.2,4.2 -4.2,4.2zM1483.7,411.8l4.2,-4.2 4.2,4.2 -4.2,4.2zM1484.5,307.6l4.2,-4.2 4.2,4.2 -4.2,4.2zM1485.3,335.8l4.2,-4.2 4.2,4.2 -4.2,4.2zM1486.2,282.9l4.2,-4.2 4.2,4.2 -4.2,4.2zM1487.0,353.4l4.2,-4.2 4.2,4.2 -4.2,4.2zM1487.8,416.1l4.2,-4.2 4.2,4.2 -4.2,4.2zM1488.7,382.8l4.2,-4.2 4.2,4.2 -4.2,4.2zM1489.5,399.2l4.2,-4.2 4.2,4.2 -4.2,4.2zM1490.3,290.5l4.2,-4.2 4.2,4.2 -4.2,4.2zM1491.2,373.4l4.2,-4.2 4.2,4.2 -4.2,4.2zM1492.0,402.3l4.2,-4.2 4.2,4.2 -4.2,4.2zM1492.8,325.1l4.2,-4.2 4.2,4.2 -4.2,4.2zM1493.7,336.7l4.2,-4.2 4.2,4.2 -4.2,4.2zM1494.5,327.2l4.2,-4.2 4.2,4.2 -4.2,4.2zM1495.3,336.6l4.2,-4.2 4.2,4.2 -4.2,4.2zM1496.2,420.2l4.2,-4.2 4.2,4.2 -4.2,4.2zM1497.0,394.9l4.2,-4.2 4.2,4.2 -4.2,4.2zM1497.8,425.5l4.2,-4.2 4.2,4.2 -4.2,4.2zM1498.7,291.9l4.2,-4.2 4.2,4.2 -4.2,4.2zM1499.5,304.7l4.2,-4.2 4.2,4.2 -4.2,4.2zM1500.3,352.7l4.2,-4.2 4.2,4.2 -4.2,4.2zM1501.2,313.8l4.2,-4.2 4.2,4.2 -4.2,4.2zM1502.0,311.1l4.2,-4.2 4.2,4.2 -4.2,4.2zM1502.8,311.6l4.2,-4.2 4.2,4.2 -4.2,4.2zM1503.7,314.7l4.2,-4.2 4.2,4.2 -4.2,4.2zM1504.5,300.5l4.2,-4.2 4.2,4.2 -4.2,4.2zM1505.3,330.1l4.2,-4.2 4.2,4.2 -4.2,4.2zM1506.1,416.9l4.2,-4.2 4.2,4.2 -4.2,4.2zM1507.0,218.5l4.2,-4.2 4.2,4.2 -4.2,4.2zM1507.8,282.5l4.2,-4.2 4.2,4.2 -4.2,4.2zM1508.6,367.9l4.2,-4.2 4.2,4.2 -4.2,4.2zM1509.5,424.6l4.2,-4.2 4.2,4.2 -4.2,4.2zM1510.3,322.7l4.2,-4.2 4.2,4.2 -4.2,4.2zM1511.1,363.3l4.2,-4.2 4.2,4.2 -4.2,4.2zM1512.0,314.1l4.2,-4.2 4.2,4.2 -4.2,4.2zM1512.8,429.9l4.2,-4.2 4.2,4.2 -4.2,4.2zM1513.6,425.3l4.2,-4.2 4.2,4.2 -4.2,4.2zM1514.5,334.9l4.2,-4.2 4.2,4.2 -4.2,4.2zM1515.3,301.1l4.2,-4.2 4.2,4.2 -4.2,4.2zM1516.1,291.2l4.2,-4.2 4.2,4.2 -4.2,4.2zM1517.0,284.0l4.2,-4.2 4.2,4.2 -4.2,4.2zM1517.8,270.8l4.2,-4.2 4.2,4.2 -4.2,4.2zM1518.6,322.9l4.2,-4.2 4.2,4.2 -4.2,4.2zM1519.5,326.2l4.2,-4.2 4.2,4.2 -4.2,4.2zM1520.3,358.4l4.2,-4.2 4.2,4.2 -4.2,4.2zM1521.1,313.4l4.2,-4.2 4.2,4.2 -4.2,4.2zM1522.0,342.2l4.2,-4.2 4.2,4.2 -4.2,4.2zM1522.8,377.4l4.2,-4.2 4.2,4.2 -4.2,4.2zM1523.6,286.3l4.2,-4.2 4.2,4.2 -4.2,4.2zM1524.5,304.4l4.2,-4.2 4.2,4.2 -4.2,4.2zM1525.3,433.4l4.2,-4.2 4.2,4.2 -4.2,4.2zM1526.1,401.7l4.2,-4.2 4.2,4.2 -4.2,4.2zM1527.0,338.5l4.2,-4.2 4.2,4.2 -4.2,4.2zM1527.8,380.9l4.2,-4.2 4.2,4.2 -4.2,4.2zM1528.6,282.2l4.2,-4.2 4.2,4.2 -4.2,4.2zM1529.5,321.6l4.2,-4.2 4.2,4.2 -4.2,4.2zM1530.3,308.6l4.2,-4.2 4.2,4.2 -4.2,4.2zM1531.1,296.3l4.2,-4.2 4.2,4.2 -4.2,4.2zM1532.0,241.3l4.2,-4.2 4.2,4.2 -4.2,4.2zM1532.8,346.2l4.2,-4.2 4.2,4.2 -4.2,4.2zM1533.6,313.6l4.2,-4.2 4.2,4.2 -4.2,4.2zM1534.5,305.8l4.2,-4.2 4.2,4.2 -4.2,4.2zM1535.3,310.5l4.2,-4.2 4.2,4.2 -4.2,4.2zM1536.1,321.6l4.2,-4.2 4.2,4.2 -4.2,4.2zM1537.0,290.2l4.2,-4.2 4.2,4.2 -4.2,4.2zM1537.8,368.2l4.2,-4.2 4.2,4.2 -4.2,4.2zM1538.6,366.7l4.2,-4.2 4.2,4.2 -4.2,4.2zM1539.5,345.6l4.2,-4.2 4.2,4.2 -4.2,4.2z" fill="#ffa500"/><path d="M694.4,481.4L695.2,473.7L696.1,498.2L696.9,475.8L697.7,493.0L698.6,459.0L699.4,524.3L700.2,485.5L701.1,465.5L701.9,490.7L702.7,502.2L703.6,496.4L704.4,469.5L705.2,487.3L706.1,457.2L706.9,473.5L707.7,482.6L708.6,481.2L709.4,465.7L710.2,456.7L711.1,489.8L711.9,497.2L712.7,497.7L713.5,469.1L714.4,445.9L715.2,487.5L716.0,466.2L716.9,485.1L717.7,461.6L718.5,504.4L719.4,467.4L720.2,501.1L721.0,493.0L721.9,474.4L722.7,487.0L723.5,486.3L724.4,478.2L725.2,486.4L726.0,465.8L726.9,481.3L727.7,512.3L728.5,496.6L729.4,503.3L730.2,499.0L731.0,458.2L731.9,501.7L732.7,525.8L733.5,456.8L734.4,432.8L735.2,480.3L736.0,474.9L736.9,473.2L737.7,484.0L738.5,444.9L739.4,440.6L740.2,515.5L741.0,479.3L741.9,454.6L742.7,496.5L743.5,492.7L744.4,481.9L745.2,485.0L746.0,490.2L746.9,491.7L747.7,459.0L748.5,528.8L749.4,492.4L750.2,499.8L751.0,471.1L751.8,479.2L752.7,458.6L753.5,463.0L754.3,417.9L755.2,483.8L756.0,470.0L756.8,446.7L757.7,470.3L758.5,531.6L759.3,493.1L760.2,453.9L761.0,470.0L761.8,456.8L762.7,461.2L763.5,475.1L764.3,383.7L765.2,434.0L766.0,494.7L766.8,454.9L767.7,457.3L768.5,440.3L769.3,459.2L770.2,483.9L771.0,457.3L771.8,498.7L772.7,449.8L773.5,471.9L774.3,484.4L775.2,479.1L776.0,458.6L776.8,498.3L777.7,436.4L778.5,478.9L779.3,437.8L780.2,461.2L781.0,428.6L781.8,484.9L782.7,446.8L783.5,463.5L784.3,473.5L785.2,446.6L786.0,465.7L786.8,515.8L787.7,464.8L788.5,473.9L789.3,462.9L790.1,458.6L791.0,437.3L791.8,457.5L792.6,468.7L793.5,440.1L794.3,459.3L795.1,473.2L796.0,480.4L796.8,429.6L797.6,466.3L798.5,438.1L799.3,487.9L800.1,492.2L801.0,444.9L801.8,478.1L802.6,474.4L803.5,472.5L804.3,484.6L805.1,445.0L806.0,482.9L806.8,445.1L807.6,476.4L808.5,412.6L809.3,450.0L810.1,446.0L811.0,499.8L811.8,465.8L812.6,486.7L813.5,494.1L814.3,496.6L815.1,465.9L816.0,479.7L816.8,488.9L817.6,490.4L818.5,490.6L819.3,488.3L820.1,483.1L821.0,547.4L821.8,495.0L822.6,519.7L823.5,481.1L824.3,471.0L825.1,491.3L826.0,458.2L826.8,498.1L827.6,484.7L828.4,464.9L829.3,481.9L830.1,501.2L830.9,480.9L831.8,495.1L832.6,468.2L833.4,475.0L834.3,493.3L835.1,481.9L835.9,462.2L836.8,475.2L837.6,482.1L838.4,503.1L839.3,512.5L840.1,517.5L840.9,487.5L841.8,524.9L842.6,497.5L843.4,475.3L844.3,532.2L845.1,547.4L845.9,520.1L846.8,503.9L847.6,491.6L848.4,520.2L849.3,527.5L850.1,512.4L850.9,502.8L851.8,515.0L852.6,526.6L853.4,498.4L854.3,532.4L855.1,538.0L855.9,510.0L856.8,473.0L857.6,520.7L858.4,513.1L859.3,529.8L860.1,522.2L860.9,557.4L861.8,506.4L862.6,523.9L863.4,526.2L864.3,495.5L865.1,538.8L865.9,496.1L866.7,516.4L867.6,529.9L868.4,514.8L869.2,603.7L870.1,510.2L870.9,520.6L871.7,483.6L872.6,499.4L873.4,498.6L874.2,541.0L875.1,525.9L875.9,498.6L876.7,509.6L877.6,520.4L878.4,522.7L879.2,502.8L880.1,556.4L880.9,538.0L881.7,546.4L882.6,499.8L883.4,544.5L884.2,523.6L885.1,493.4L885.9,522.3L886.7,510.7L887.6,514.4L888.4,503.8L889.2,477.5L890.1,539.5L890.9,520.4L891.7,490.7L892.6,478.9L893.4,526.7L894.2,499.0L895.1,511.9L895.9,512.7L896.7,549.7L897.6,553.5L898.4,520.3L899.2,523.7L900.1,521.9L900.9,540.0L901.7,490.9L902.5,518.5L903.4,464.5L904.2,515.9L905.0,503.2L905.9,494.6L906.7,512.7L907.5,522.8L908.4,514.8L909.2,504.3L910.0,513.6L910.9,468.7L911.7,513.9L912.5,490.5L913.4,489.8L914.2,501.0L915.0,522.8L915.9,493.4L916.7,484.7L917.5,497.8L918.4,499.6L919.2,538.2L920.0,518.0L920.9,500.8L921.7,492.9L922.5,481.6L923.4,499.4L924.2,489.6L925.0,510.1L925.9,479.1L926.7,476.2L927.5,490.1L928.4,470.7L929.2,493.5L930.0,497.0L930.9,493.5L931.7,452.8L932.5,518.3L933.4,486.2L934.2,496.5L935.0,486.7L935.9,513.8L936.7,472.5L937.5,472.4L938.4,487.5L939.2,489.0L940.0,478.6L940.8,461.1L941.7,507.0L942.5,455.6L943.3,487.7L944.2,468.2L945.0,499.4L945.8,450.5L946.7,482.1L947.5,456.3L948.3,498.5L949.2,498.4L950.0,465.9L950.8,472.8L951.7,478.7L952.5,462.0L953.3,476.0L954.2,489.1L955.0,516.7L955.8,523.5L956.7,470.4L957.5,433.9L958.3,497.6L959.2,471.4L960.0,484.5L960.8,479.7L961.7,462.9L962.5,508.5L963.3,473.7L964.2,470.5L965.0,483.5L965.8,477.3L966.7,500.9L967.5,477.8L968.3,426.7L969.2,466.1L970.0,492.4L970.8,465.2L971.7,474.0L972.5,467.2L973.3,479.7L974.2,467.5L975.0,475.6L975.8,435.9L976.7,485.5L977.5,460.0L978.3,481.3L979.1,508.1L980.0,473.2L980.8,460.1L981.6,470.1L982.5,471.2L983.3,501.4L984.1,482.9L985.0,514.8L985.8,459.5L986.6,465.2L987.5,513.3L988.3,498.8L989.1,511.1L990.0,499.6L990.8,491.3L991.6,501.7L992.5,486.1L993.3,463.5L994.1,477.3L995.0,460.5L995.8,477.8L996.6,474.2L997.5,500.1L998.3,462.0L999.1,500.5L1000.0,487.8L1000.8,505.7L1001.6,472.6L1002.5,499.7L1003.3,469.6L1004.1,444.2L1005.0,471.9L1005.8,517.6L1006.6,458.3L1007.5,472.1L1008.3,465.6L1009.1,470.7L1010.0,458.7L1010.8,462.7L1011.6,483.5L1012.5,506.3L1013.3,486.9L1014.1,473.0L1015.0,519.7L1015.8,482.6L1016.6,517.1L1017.4,463.6L1018.3,449.6L1019.1,466.4L1019.9,489.0L1020.8,466.4L1021.6,458.6L1022.4,454.6L1023.3,461.2L1024.1,469.2L1024.9,508.8L1025.8,494.9L1026.6,486.6L1027.4,496.4L1028.3,530.8L1029.1,497.1L1029.9,505.2L1030.8,487.0L1031.6,482.4L1032.4,512.5L1033.3,498.2L1034.1,479.5L1034.9,502.7L1035.8,485.9L1036.6,501.8L1037.4,561.7L1038.3,473.6L1039.1,493.3L1039.9,502.3L1040.8,466.1L1041.6,499.8L1042.4,495.0L1043.3,494.5L1044.1,440.6L1044.9,484.1L1045.8,480.4L1046.6,502.9L1047.4,481.4L1048.3,478.3L1049.1,521.8L1049.9,494.9L1050.8,475.1L1051.6,474.0L1052.4,504.4L1053.3,469.3L1054.1,525.2L1054.9,493.6L1055.7,502.4L1056.6,530.6L1057.4,493.1L1058.2,533.9L1059.1,522.3L1059.9,511.9L1060.7,576.1L1061.6,487.3L1062.4,515.3L1063.2,445.4L1064.1,499.9L1064.9,503.4L1065.7,521.5L1066.6,510.4L1067.4,483.2L1068.2,484.6L1069.1,528.2L1069.9,482.4L1070.7,482.4L1071.6,479.5L1072.4,509.0L1073.2,514.5L1074.1,502.6L1074.9,512.7L1075.7,505.6L1076.6,511.9L1077.4,506.4L1078.2,510.2L1079.1,500.8L1079.9,498.6L1080.7,506.3L1081.6,511.5L1082.4,472.8L1083.2,484.9L1084.1,492.9L1084.9,517.6L1085.7,490.4L1086.6,504.7L1087.4,491.1L1088.2,496.6L1089.1,454.3L1089.9,498.3L1090.7,515.8L1091.6,477.0L1092.4,474.7L1093.2,470.3L1094.0,540.4L1094.9,511.5L1095.7,510.6L1096.5,526.7L1097.4,496.2L1098.2,487.6L1099.0,480.9L1099.9,484.9L1100.7,501.8L1101.5,474.1L1102.4,497.5L1103.2,552.5L1104.0,507.5L1104.9,515.3L1105.7,495.5L1106.5,509.1L1107.4,507.2L1108.2,476.6L1109.0,515.4L1109.9,526.6L1110.7,497.6L1111.5,490.4L1112.4,504.3L1113.2,502.5L1114.0,513.2L1114.9,526.6L1115.7,516.5L1116.5,522.2L1117.4,480.8L1118.2,507.7L1119.0,477.7L1119.9,505.7L1120.7,519.9L1121.5,498.6L1122.4,444.0L1123.2,475.3L1124.0,534.7L1124.9,504.4L1125.7,488.1L1126.5,507.7L1127.4,490.5L1128.2,498.4L1129.0,467.7L1129.8,471.3L1130.7,531.8L1131.5,522.9L1132.3,509.8L1133.2,497.1L1134.0,499.2L1134.8,454.0L1135.7,484.9L1136.5,598.8L1137.3,601.1L1138.2,594.1L1139.0,588.7L1139.8,578.8L1140.7,587.5L1141.5,582.9L1142.3,594.2L1143.2,572.2L1144.0,568.5L1144.8,599.3L1145.7,589.6L1146.5,593.6L1147.3,588.8L1148.2,595.6L1149.0,599.8L1149.8,606.3L1150.7,597.8L1151.5,592.1L1152.3,581.1L1153.2,586.2L1154.0,596.8L1154.8,599.5L1155.7,608.6L1156.5,585.0L1157.3,591.4L1158.2,585.9L1159.0,584.3L1159.8,586.5L1160.7,593.6L1161.5,595.6L1162.3,603.4L1163.2,599.5L1164.0,588.0L1164.8,568.2L1165.7,597.0L1166.5,590.1L1167.3,558.1L1168.1,591.7L1169.0,596.5L1169.8,592.7L1170.6,595.5L1171.5,613.9L1172.3,584.0L1173.1,612.3L1174.0,599.3L1174.8,597.9L1175.6,588.5L1176.5,595.8L1177.3,598.7L1178.1,603.0L1179.0,591.2L1179.8,597.5L1180.6,601.8L1181.5,608.6L1182.3,603.5L1183.1,592.6L1184.0,611.3L1184.8,592.9L1185.6,593.4L1186.5,582.0L1187.3,601.9L1188.1,605.2L1189.0,595.7L1189.8,598.9L1190.6,620.6L1191.5,581.9L1192.3,592.2L1193.1,593.3L1194.0,603.6L1194.8,590.9L1195.6,598.0L1196.5,577.7L1197.3,587.3L1198.1,579.4L1199.0,608.2L1199.8,604.4L1200.6,599.4L1201.5,601.6L1202.3,577.5L1203.1,590.9L1204.0,606.5L1204.8,597.8L1205.6,575.0L1206.4,598.2L1207.3,588.2L1208.1,613.5L1208.9,600.9L1209.8,596.6L1210.6,597.6L1211.4,594.9L1212.3,591.1L1213.1,582.4L1213.9,613.8L1214.8,594.2L1215.6,587.2L1216.4,592.4L1217.3,582.5L1218.1,596.3L1218.9,599.5L1219.8,587.4L1220.6,562.6L1221.4,597.0L1222.3,523.0L1223.1,533.3L1223.9,553.9L1224.8,480.4L1225.6,509.7L1226.4,472.4L1227.3,490.5L1228.1,502.2L1228.9,468.1L1229.8,455.6L1230.6,464.6L1231.4,508.6L1232.3,475.6L1233.1,507.6L1233.9,496.8L1234.8,459.4L1235.6,507.0L1236.4,433.9L1237.3,504.4L1238.1,497.6L1238.9,458.1L1239.8,473.0L1240.6,469.6L1241.4,484.9L1242.3,455.9L1243.1,466.3L1243.9,473.0L1244.7,487.3L1245.6,500.8L1246.4,475.0L1247.2,515.4L1248.1,487.7L1248.9,464.3L1249.7,463.1L1250.6,482.9L1251.4,522.0L1252.2,465.2L1253.1,415.2L1253.9,473.9L1254.7,451.3L1255.6,455.5L1256.4,504.2L1257.2,477.6L1258.1,482.0L1258.9,444.3L1259.7,452.9L1260.6,470.0L1261.4,463.6L1262.2,459.7L1263.1,490.4L1263.9,482.7L1264.7,483.4L1265.6,491.4L1266.4,491.9L1267.2,483.9L1268.1,510.4L1268.9,506.6L1269.7,470.4L1270.6,455.7L1271.4,448.2L1272.2,512.9L1273.1,473.0L1273.9,493.9L1274.7,488.7L1275.6,483.3L1276.4,472.3L1277.2,469.6L1278.1,524.1L1278.9,491.3L1279.7,461.0L1280.6,478.7L1281.4,508.8L1282.2,495.8L1283.0,491.0L1283.9,456.6L1284.7,441.6L1285.5,491.8L1286.4,461.2L1287.2,474.1L1288.0,460.8L1288.9,477.8L1289.7,496.2L1290.5,490.0L1291.4,492.4L1292.2,456.4L1293.0,498.8L1293.9,477.3L1294.7,503.5L1295.5,501.1L1296.4,485.6L1297.2,500.9L1298.0,456.5L1298.9,469.9L1299.7,515.9L1300.5,487.7L1301.4,469.4L1302.2,518.4L1303.0,503.7L1303.9,469.2L1304.7,510.8L1305.5,484.1L1306.4,496.8L1307.2,491.9L1308.0,515.2L1308.9,498.9L1309.7,506.7L1310.5,468.1L1311.4,489.6L1312.2,500.4L1313.0,504.0L1313.9,492.4L1314.7,533.4L1315.5,522.0L1316.4,519.9L1317.2,517.1L1318.0,531.9L1318.8,492.1L1319.7,509.4L1320.5,477.5L1321.3,502.0L1322.2,506.1L1323.0,490.9L1323.8,490.5L1324.7,503.1L1325.5,487.0L1326.3,474.2L1327.2,504.7L1328.0,472.8L1328.8,499.5L1329.7,479.9L1330.5,496.2L1331.3,502.0L1332.2,489.3L1333.0,514.7L1333.8,523.1L1334.7,495.2L1335.5,499.1L1336.3,515.3L1337.2,456.9L1338.0,488.1L1338.8,508.9L1339.7,486.8L1340.5,486.6L1341.3,502.9L1342.2,499.7L1343.0,528.4L1343.8,490.2L1344.7,459.7L1345.5,472.5L1346.3,473.9L1347.2,502.8L1348.0,509.8L1348.8,472.4L1349.7,481.0L1350.5,488.1L1351.3,488.2L1352.2,463.6L1353.0,467.3L1353.8,485.2L1354.7,481.5L1355.5,419.6L1356.3,506.0L1357.1,477.1L1358.0,498.3L1358.8,508.3L1359.6,490.4L1360.5,475.2L1361.3,512.5L1362.1,502.6L1363.0,500.7L1363.8,451.4L1364.6,476.4L1365.5,489.4L1366.3,519.3L1367.1,479.3L1368.0,484.2L1368.8,499.5L1369.6,511.0L1370.5,507.1L1371.3,530.2L1372.1,509.0L1373.0,511.8L1373.8,521.3L1374.6,511.7L1375.5,535.2L1376.3,487.2L1377.1,511.4L1378.0,530.6L1378.8,496.4L1379.6,501.1L1380.5,521.0L1381.3,533.9L1382.1,509.5L1383.0,498.1L1383.8,493.2L1384.6,486.3L1385.5,485.7L1386.3,525.8L1387.1,495.3L1388.0,531.9L1388.8,481.7L1389.6,491.8L1390.5,481.9L1391.3,498.2L1392.1,498.9L1393.0,508.5L1393.8,548.6L1394.6,500.7L1395.4,449.3L1396.3,470.9L1397.1,496.4L1397.9,484.9L1398.8,481.2L1399.6,498.1L1400.4,486.1L1401.3,479.5L1402.1,494.1L1402.9,476.5L1403.8,462.1L1404.6,468.8L1405.4,478.4L1406.3,485.9L1407.1,469.3L1407.9,491.9L1408.8,493.7L1409.6,459.5L1410.4,488.9L1411.3,506.5L1412.1,467.0L1412.9,469.3L1413.8,462.0L1414.6,484.1L1415.4,461.9L1416.3,484.9L1417.1,500.8L1417.9,486.0L1418.8,478.4L1419.6,502.5L1420.4,486.4L1421.3,475.9L1422.1,485.1L1422.9,474.4L1423.8,474.8L1424.6,487.1L1425.4,465.0L1426.3,459.1L1427.1,503.6L1427.9,481.9L1428.8,457.2L1429.6,465.8L1430.4,509.7L1431.3,473.7L1432.1,455.0L1432.9,466.3L1433.7,470.3L1434.6,484.8L1435.4,480.2L1436.2,501.0L1437.1,479.0L1437.9,437.1L1438.7,477.5L1439.6,492.4L1440.4,465.4L1441.2,512.8L1442.1,437.6L1442.9,468.8L1443.7,486.3L1444.6,489.8L1445.4,501.2L1446.2,484.6L1447.1,487.7L1447.9,516.4L1448.7,471.3L1449.6,495.9L1450.4,550.2L1451.2,473.5L1452.1,477.3L1452.9,501.2L1453.7,503.0L1454.6,472.6L1455.4,500.0L1456.2,490.1L1457.1,470.0L1457.9,516.8L1458.7,522.8L1459.6,511.9L1460.4,507.9L1461.2,497.7L1462.1,481.4L1462.9,507.1L1463.7,470.0L1464.6,497.0L1465.4,536.8L1466.2,502.8L1467.1,490.1L1467.9,484.3L1468.7,517.7L1469.6,507.9L1470.4,467.4L1471.2,505.5L1472.0,525.7L1472.9,537.5L1473.7,519.3L1474.5,503.4L1475.4,528.2L1476.2,482.8L1477.0,518.9L1477.9,538.0L1478.7,490.9L1479.5,500.3L1480.4,503.6L1481.2,478.9L1482.0,514.6L1482.9,554.5L1483.7,517.8L1484.5,481.4L1485.4,512.7L1486.2,514.5L1487.0,506.6L1487.9,518.7L1488.7,509.3L1489.5,521.8L1490.4,506.6L1491.2,516.7L1492.0,527.6L1492.9,507.9L1493.7,509.8L1494.5,535.3L1495.4,519.9L1496.2,542.6L1497.0,509.0L1497.9,494.2L1498.7,464.1L1499.5,567.5L1500.4,485.0L1501.2,477.8L1502.0,491.4L1502.9,537.9L1503.7,513.4L1504.5,499.5L1505.4,500.7L1506.2,504.2L1507.0,522.8L1507.9,538.3L1508.7,496.8L1509.5,481.2L1510.3,508.6L1511.2,488.6L1512.0,506.2L1512.8,497.6L1513.7,503.6L1514.5,480.0L1515.3,512.2L1516.2,494.6L1517.0,482.3L1517.8,500.0L1518.7,522.6L1519.5,495.2L1520.3,506.6L1521.2,525.4L1522.0,505.1L1522.8,506.3L1523.7,489.5L1524.5,508.1L1525.3,497.0L1526.2,487.3L1527.0,530.9L1527.8,481.1L1528.7,499.3L1529.5,518.5L1530.3,499.7L1531.2,484.9L1532.0,516.6L1532.8,515.4L1533.7,482.6L1534.5,480.1L1535.3,473.7L1536.2,509.1L1537.0,527.6L1537.8,528.8L1538.7,518.7L1539.5,531.5L1540.3,507.3L1541.2,492.6L1542.0,533.7L1542.8,488.7L1543.7,530.8" stroke="#7878f8" stroke-width="1.1" fill="none" stroke-linejoin="bevel"/><path d="M690.3,481.4l4.1,-4.1 4.1,4.1 -4.1,4.1zM691.1,473.7l4.1,-4.1 4.1,4.1 -4.1,4.1zM692.0,498.2l4.1,-4.1 4.1,4.1 -4.1,4.1zM692.8,475.8l4.1,-4.1 4.1,4.1 -4.1,4.1zM693.6,493.0l4.1,-4.1 4.1,4.1 -4.1,4.1zM694.5,459.0l4.1,-4.1 4.1,4.1 -4.1,4.1zM695.3,524.3l4.1,-4.1 4.1,4.1 -4.1,4.1zM696.1,485.5l4.1,-4.1 4.1,4.1 -4.1,4.1zM697.0,465.5l4.1,-4.1 4.1,4.1 -4.1,4.1zM697.8,490.7l4.1,-4.1 4.1,4.1 -4.1,4.1zM698.6,502.2l4.1,-4.1 4.1,4.1 -4.1,4.1zM699.5,496.4l4.1,-4.1 4.1,4.1 -4.1,4.1zM700.3,469.5l4.1,-4.1 4.1,4.1 -4.1,4.1zM701.1,487.3l4.1,-4.1 4.1,4.1 -4.1,4.1zM702.0,457.2l4.1,-4.1 4.1,4.1 -4.1,4.1zM702.8,473.5l4.1,-4.1 4.1,4.1 -4.1,4.1zM703.6,482.6l4.1,-4.1 4.1,4.1 -4.1,4.1zM704.5,481.2l4.1,-4.1 4.1,4.1 -4.1,4.1zM705.3,465.7l4.1,-4.1 4.1,4.1 -4.1,4.1zM706.1,456.7l4.1,-4.1 4.1,4.1 -4.1,4.1zM707.0,489.8l4.1,-4.1 4.1,4.1 -4.1,4.1zM707.8,497.2l4.1,-4.1 4.1,4.1 -4.1,4.1zM708.6,497.7l4.1,-4.1 4.1,4.1 -4.1,4.1zM709.4,469.1l4.1,-4.1 4.1,4.1 -4.1,4.1zM710.3,445.9l4.1,-4.1 4.1,4.1 -4.1,4.1zM711.1,487.5l4.1,-4.1 4.1,4.1 -4.1,4.1zM711.9,466.2l4.1,-4.1 4.1,4.1 -4.1,4.1zM712.8,485.1l4.1,-4.1 4.1,4.1 -4.1,4.1zM713.6,461.6l4.1,-4.1 4.1,4.1 -4.1,4.1zM714.4,504.4l4.1,-4.1 4.1,4.1 -4.1,4.1zM715.3,467.4l4.1,-4.1 4.1,4.1 -4.1,4.1zM716.1,501.1l4.1,-4.1 4.1,4.1 -4.1,4.1zM716.9,493.0l4.1,-4.1 4.1,4.1 -4.1,4.1zM717.8,474.4l4.1,-4.1 4.1,4.1 -4.1,4.1zM718.6,487.0l4.1,-4.1 4.1,4.1 -4.1,4.1zM719.4,486.3l4.1,-4.1 4.1,4.1 -4.1,4.1zM720.3,478.2l4.1,-4.1 4.1,4.1 -4.1,4.1zM721.1,486.4l4.1,-4.1 4.1,4.1 -4.1,4.1zM721.9,465.8l4.1,-4.1 4.1,4.1 -4.1,4.1zM722.8,481.3l4.1,-4.1 4.1,4.1 -4.1,4.1zM723.6,512.3l4.1,-4.1 4.1,4.1 -4.1,4.1zM724.4,496.6l4.1,-4.1 4.1,4.1 -4.1,4.1zM725.3,503.3l4.1,-4.1 4.1,4.1 -4.1,4.1zM726.1,499.0l4.1,-4.1 4.1,4.1 -4.1,4.1zM726.9,458.2l4.1,-4.1 4.1,4.1 -4.1,4.1zM727.8,501.7l4.1,-4.1 4.1,4.1 -4.1,4.1zM728.6,525.8l4.1,-4.1 4.1,4.1 -4.1,4.1zM729.4,456.8l4.1,-4.1 4.1,4.1 -4.1,4.1zM730.3,432.8l4.1,-4.1 4.1,4.1 -4.1,4.1zM731.1,480.3l4.1,-4.1 4.1,4.1 -4.1,4.1zM731.9,474.9l4.1,-4.1 4.1,4.1 -4.1,4.1zM732.8,473.2l4.1,-4.1 4.1,4.1 -4.1,4.1zM733.6,484.0l4.1,-4.1 4.1,4.1 -4.1,4.1zM734.4,444.9l4.1,-4.1 4.1,4.1 -4.1,4.1zM735.3,440.6l4.1,-4.1 4.1,4.1 -4.1,4.1zM736.1,515.5l4.1,-4.1 4.1,4.1 -4.1,4.1zM736.9,479.3l4.1,-4.1 4.1,4.1 -4.1,4.1zM737.8,454.6l4.1,-4.1 4.1,4.1 -4.1,4.1zM738.6,496.5l4.1,-4.1 4.1,4.1 -4.1,4.1zM739.4,492.7l4.1,-4.1 4.1,4.1 -4.1,4.1zM740.3,481.9l4.1,-4.1 4.1,4.1 -4.1,4.1zM741.1,485.0l4.1,-4.1 4.1,4.1 -4.1,4.1zM741.9,490.2l4.1,-4.1 4.1,4.1 -4.1,4.1zM742.8,491.7l4.1,-4.1 4.1,4.1 -4.1,4.1zM743.6,459.0l4.1,-4.1 4.1,4.1 -4.1,4.1zM744.4,528.8l4.1,-4.1 4.1,4.1 -4.1,4.1zM745.3,492.4l4.1,-4.1 4.1,4.1 -4.1,4.1zM746.1,499.8l4.1,-4.1 4.1,4.1 -4.1,4.1zM746.9,471.1l4.1,-4.1 4.1,4.1 -4.1,4.1zM747.7,479.2l4.1,-4.1 4.1,4.1 -4.1,4.1zM748.6,458.6l4.1,-4.1 4.1,4.1 -4.1,4.1zM749.4,463.0l4.1,-4.1 4.1,4.1 -4.1,4.1zM750.2,417.9l4.1,-4.1 4.1,4.1 -4.1,4.1zM751.1,483.8l4.1,-4.1 4.1,4.1 -4.1,4.1zM751.9,470.0l4.1,-4.1 4.1,4.1 -4.1,4.1zM752.7,446.7l4.1,-4.1 4.1,4.1 -4.1,4.1zM753.6,470.3l4.1,-4.1 4.1,4.1 -4.1,4.1zM754.4,531.6l4.1,-4.1 4.1,4.1 -4.1,4.1zM755.2,493.1l4.1,-4.1 4.1,4.1 -4.1,4.1zM756.1,453.9l4.1,-4.1 4.1,4.1 -4.1,4.1zM756.9,470.0l4.1,-4.1 4.1,4.1 -4.1,4.1zM757.7,456.8l4.1,-4.1 4.1,4.1 -4.1,4.1zM758.6,461.2l4.1,-4.1 4.1,4.1 -4.1,4.1zM759.4,475.1l4.1,-4.1 4.1,4.1 -4.1,4.1zM760.2,383.7l4.1,-4.1 4.1,4.1 -4.1,4.1zM761.1,434.0l4.1,-4.1 4.1,4.1 -4.1,4.1zM761.9,494.7l4.1,-4.1 4.1,4.1 -4.1,4.1zM762.7,454.9l4.1,-4.1 4.1,4.1 -4.1,4.1zM763.6,457.3l4.1,-4.1 4.1,4.1 -4.1,4.1zM764.4,440.3l4.1,-4.1 4.1,4.1 -4.1,4.1zM765.2,459.2l4.1,-4.1 4.1,4.1 -4.1,4.1zM766.1,483.9l4.1,-4.1 4.1,4.1 -4.1,4.1zM766.9,457.3l4.1,-4.1 4.1,4.1 -4.1,4.1zM767.7,498.7l4.1,-4.1 4.1,4.1 -4.1,4.1zM768.6,449.8l4.1,-4.1 4.1,4.1 -4.1,4.1zM769.4,471.9l4.1,-4.1 4.1,4.1 -4.1,4.1zM770.2,484.4l4.1,-4.1 4.1,4.1 -4.1,4.1zM771.1,479.1l4.1,-4.1 4.1,4.1 -4.1,4.1zM771.9,458.6l4.1,-4.1 4.1,4.1 -4.1,4.1zM772.7,498.3l4.1,-4.1 4.1,4.1 -4.1,4.1zM773.6,436.4l4.1,-4.1 4.1,4.1 -4.1,4.1zM774.4,478.9l4.1,-4.1 4.1,4.1 -4.1,4.1zM775.2,437.8l4.1,-4.1 4.1,4.1 -4.1,4.1zM776.1,461.2l4.1,-4.1 4.1,4.1 -4.1,4.1zM776.9,428.6l4.1,-4.1 4.1,4.1 -4.1,4.1zM777.7,484.9l4.1,-4.1 4.1,4.1 -4.1,4.1zM778.6,446.8l4.1,-4.1 4.1,4.1 -4.1,4.1zM779.4,463.5l4.1,-4.1 4.1,4.1 -4.1,4.1zM780.2,473.5l4.1,-4.1 4.1,4.1 -4.1,4.1zM781.1,446.6l4.1,-4.1 4.1,4.1 -4.1,4.1zM781.9,465.7l4.1,-4.1 4.1,4.1 -4.1,4.1zM782.7,515.8l4.1,-4.1 4.1,4.1 -4.1,4.1zM783.6,464.8l4.1,-4.1 4.1,4.1 -4.1,4.1zM784.4,473.9l4.1,-4.1 4.1,4.1 -4.1,4.1zM785.2,462.9l4.1,-4.1 4.1,4.1 -4.1,4.1zM786.0,458.6l4.1,-4.1 4.1,4.1 -4.1,4.1zM786.9,437.3l4.1,-4.1 4.1,4.1 -4.1,4.1zM787.7,457.5l4.1,-4.1 4.1,4.1 -4.1,4.1zM788.5,468.7l4.1,-4.1 4.1,4.1 -4.1,4.1zM789.4,440.1l4.1,-4.1 4.1,4.1 -4.1,4.1zM790.2,459.3l4.1,-4.1 4.1,4.1 -4.1,4.1zM791.0,473.2l4.1,-4.1 4.1,4.1 -4.1,4.1zM791.9,480.4l4.1,-4.1 4.1,4.1 -4.1,4.1zM792.7,429.6l4.1,-4.1 4.1,4.1 -4.1,4.1zM793.5,466.3l4.1,-4.1 4.1,4.1 -4.1,4.1zM794.4,438.1l4.1,-4.1 4.1,4.1 -4.1,4.1zM795.2,487.9l4.1,-4.1 4.1,4.1 -4.1,4.1zM796.0,492.2l4.1,-4.1 4.1,4.1 -4.1,4.1zM796.9,444.9l4.1,-4.1 4.1,4.1 -4.1,4.1zM797.7,478.1l4.1,-4.1 4.1,4.1 -4.1,4.1zM798.5,474.4l4.1,-4.1 4.1,4.1 -4.1,4.1zM799.4,472.5l4.1,-4.1 4.1,4.1 -4.1,4.1zM800.2,484.6l4.1,-4.1 4.1,4.1 -4.1,4.1zM801.0,445.0l4.1,-4.1 4.1,4.1 -4.1,4.1zM801.9,482.9l4.1,-4.1 4.1,4.1 -4.1,4.1zM802.7,445.1l4.1,-4.1 4.1,4.1 -4.1,4.1zM803.5,476.4l4.1,-4.1 4.1,4.1 -4.1,4.1zM804.4,412.6l4.1,-4.1 4.1,4.1 -4.1,4.1zM805.2,450.0l4.1,-4.1 4.1,4.1 -4.1,4.1zM806.0,446.0l4.1,-4.1 4.1,4.1 -4.1,4.1zM806.9,499.8l4.1,-4.1 4.1,4.1 -4.1,4.1zM807.7,465.8l4.1,-4.1 4.1,4.1 -4.1,4.1zM808.5,486.7l4.1,-4.1 4.1,4.1 -4.1,4.1zM809.4,494.1l4.1,-4.1 4.1,4.1 -4.1,4.1zM810.2,496.6l4.1,-4.1 4.1,4.1 -4.1,4.1zM811.0,465.9l4.1,-4.1 4.1,4.1 -4.1,4.1zM811.9,479.7l4.1,-4.1 4.1,4.1 -4.1,4.1zM812.7,488.9l4.1,-4.1 4.1,4.1 -4.1,4.1zM813.5,490.4l4.1,-4.1 4.1,4.1 -4.1,4.1zM814.4,490.6l4.1,-4.1 4.1,4.1 -4.1,4.1zM815.2,488.3l4.1,-4.1 4.1,4.1 -4.1,4.1zM816.0,483.1l4.1,-4.1 4.1,4.1 -4.1,4.1zM816.9,547.4l4.1,-4.1 4.1,4.1 -4.1,4.1zM817.7,495.0l4.1,-4.1 4.1,4.1 -4.1,4.1zM818.5,519.7l4.1,-4.1 4.1,4.1 -4.1,4.1zM819.4,481.1l4.1,-4.1 4.1,4.1 -4.1,4.1zM820.2,471.0l4.1,-4.1 4.1,4.1 -4.1,4.1zM821.0,491.3l4.1,-4.1 4.1,4.1 -4.1,4.1zM821.9,458.2l4.1,-4.1 4.1,4.1 -4.1,4.1zM822.7,498.1l4.1,-4.1 4.1,4.1 -4.1,4.1zM823.5,484.7l4.1,-4.1 4.1,4.1 -4.1,4.1zM824.3,464.9l4.1,-4.1 4.1,4.1 -4.1,4.1zM825.2,481.9l4.1,-4.1 4.1,4.1 -4.1,4.1zM826.0,501.2l4.1,-4.1 4.1,4.1 -4.1,4.1zM826.8,480.9l4.1,-4.1 4.1,4.1 -4.1,4.1zM827.7,495.1l4.1,-4.1 4.1,4.1 -4.1,4.1zM828.5,468.2l4.1,-4.1 4.1,4.1 -4.1,4.1zM829.3,475.0l4.1,-4.1 4.1,4.1 -4.1,4.1zM830.2,493.3l4.1,-4.1 4.1,4.1 -4.1,4.1zM831.0,481.9l4.1,-4.1 4.1,4.1 -4.1,4.1zM831.8,462.2l4.1,-4.1 4.1,4.1 -4.1,4.1zM832.7,475.2l4.1,-4.1 4.1,4.1 -4.1,4.1zM833.5,482.1l4.1,-4.1 4.1,4.1 -4.1,4.1zM834.3,503.1l4.1,-4.1 4.1,4.1 -4.1,4.1zM835.2,512.5l4.1,-4.1 4.1,4.1 -4.1,4.1zM836.0,517.5l4.1,-4.1 4.1,4.1 -4.1,4.1zM836.8,487.5l4.1,-4.1 4.1,4.1 -4.1,4.1zM837.7,524.9l4.1,-4.1 4.1,4.1 -4.1,4.1zM838.5,497.5l4.1,-4.1 4.1,4.1 -4.1,4.1zM839.3,475.3l4.1,-4.1 4.1,4.1 -4.1,4.1zM840.2,532.2l4.1,-4.1 4.1,4.1 -4.1,4.1zM841.0,547.4l4.1,-4.1 4.1,4.1 -4.1,4.1zM841.8,520.1l4.1,-4.1 4.1,4.1 -4.1,4.1zM842.7,503.9l4.1,-4.1 4.1,4.1 -4.1,4.1zM843.5,491.6l4.1,-4.1 4.1,4.1 -4.1,4.1zM844.3,520.2l4.1,-4.1 4.1,4.1 -4.1,4.1zM845.2,527.5l4.1,-4.1 4.1,4.1 -4.1,4.1zM846.0,512.4l4.1,-4.1 4.1,4.1 -4.1,4.1zM846.8,502.8l4.1,-4.1 4.1,4.1 -4.1,4.1zM847.7,515.0l4.1,-4.1 4.1,4.1 -4.1,4.1zM848.5,526.6l4.1,-4.1 4.1,4.1 -4.1,4.1zM849.3,498.4l4.1,-4.1 4.1,4.1 -4.1,4.1zM850.2,532.4l4.1,-4.1 4.1,4.1 -4.1,4.1zM851.0,538.0l4.1,-4.1 4.1,4.1 -4.1,4.1zM851.8,510.0l4.1,-4.1 4.1,4.1 -4.1,4.1zM852.7,473.0l4.1,-4.1 4.1,4.1 -4.1,4.1zM853.5,520.7l4.1,-4.1 4.1,4.1 -4.1,4.1zM854.3,513.1l4.1,-4.1 4.1,4.1 -4.1,4.1zM855.2,529.8l4.1,-4.1 4.1,4.1 -4.1,4.1zM856.0,522.2l4.1,-4.1 4.1,4.1 -4.1,4.1zM856.8,557.4l4.1,-4.1 4.1,4.1 -4.1,4.1zM857.7,506.4l4.1,-4.1 4.1,4.1 -4.1,4.1zM858.5,523.9l4.1,-4.1 4.1,4.1 -4.1,4.1zM859.3,526.2l4.1,-4.1 4.1,4.1 -4.1,4.1zM860.2,495.5l4.1,-4.1 4.1,4.1 -4.1,4.1zM861.0,538.8l4.1,-4.1 4.1,4.1 -4.1,4.1zM861.8,496.1l4.1,-4.1 4.1,4.1 -4.1,4.1zM862.6,516.4l4.1,-4.1 4.1,4.1 -4.1,4.1zM863.5,529.9l4.1,-4.1 4.1,4.1 -4.1,4.1zM864.3,514.8l4.1,-4.1 4.1,4.1 -4.1,4.1zM865.1,603.7l4.1,-4.1 4.1,4.1 -4.1,4.1zM866.0,510.2l4.1,-4.1 4.1,4.1 -4.1,4.1zM866.8,520.6l4.1,-4.1 4.1,4.1 -4.1,4.1zM867.6,483.6l4.1,-4.1 4.1,4.1 -4.1,4.1zM868.5,499.4l4.1,-4.1 4.1,4.1 -4.1,4.1zM869.3,498.6l4.1,-4.1 4.1,4.1 -4.1,4.1zM870.1,541.0l4.1,-4.1 4.1,4.1 -4.1,4.1zM871.0,525.9l4.1,-4.1 4.1,4.1 -4.1,4.1zM871.8,498.6l4.1,-4.1 4.1,4.1 -4.1,4.1zM872.6,509.6l4.1,-4.1 4.1,4.1 -4.1,4.1zM873.5,520.4l4.1,-4.1 4.1,4.1 -4.1,4.1zM874.3,522.7l4.1,-4.1 4.1,4.1 -4.1,4.1zM875.1,502.8l4.1,-4.1 4.1,4.1 -4.1,4.1zM876.0,556.4l4.1,-4.1 4.1,4.1 -4.1,4.1zM876.8,538.0l4.1,-4.1 4.1,4.1 -4.1,4.1zM877.6,546.4l4.1,-4.1 4.1,4.1 -4.1,4.1zM878.5,499.8l4.1,-4.1 4.1,4.1 -4.1,4.1zM879.3,544.5l4.1,-4.1 4.1,4.1 -4.1,4.1zM880.1,523.6l4.1,-4.1 4.1,4.1 -4.1,4.1zM881.0,493.4l4.1,-4.1 4.1,4.1 -4.1,4.1zM881.8,522.3l4.1,-4.1 4.1,4.1 -4.1,4.1zM882.6,510.7l4.1,-4.1 4.1,4.1 -4.1,4.1zM883.5,514.4l4.1,-4.1 4.1,4.1 -4.1,4.1zM884.3,503.8l4.1,-4.1 4.1,4.1 -4.1,4.1zM885.1,477.5l4.1,-4.1 4.1,4.1 -4.1,4.1zM886.0,539.5l4.1,-4.1 4.1,4.1 -4.1,4.1zM886.8,520.4l4.1,-4.1 4.1,4.1 -4.1,4.1zM887.6,490.7l4.1,-4.1 4.1,4.1 -4.1,4.1zM888.5,478.9l4.1,-4.1 4.1,4.1 -4.1,4.1zM889.3,526.7l4.1,-4.1 4.1,4.1 -4.1,4.1zM890.1,499.0l4.1,-4.1 4.1,4.1 -4.1,4.1zM891.0,511.9l4.1,-4.1 4.1,4.1 -4.1,4.1zM891.8,512.7l4.1,-4.1 4.1,4.1 -4.1,4.1zM892.6,549.7l4.1,-4.1 4.1,4.1 -4.1,4.1zM893.5,553.5l4.1,-4.1 4.1,4.1 -4.1,4.1zM894.3,520.3l4.1,-4.1 4.1,4.1 -4.1,4.1zM895.1,523.7l4.1,-4.1 4.1,4.1 -4.1,4.1zM896.0,521.9l4.1,-4.1 4.1,4.1 -4.1,4.1zM896.8,540.0l4.1,-4.1 4.1,4.1 -4.1,4.1zM897.6,490.9l4.1,-4.1 4.1,4.1 -4.1,4.1zM898.4,518.5l4.1,-4.1 4.1,4.1 -4.1,4.1zM899.3,464.5l4.1,-4.1 4.1,4.1 -4.1,4.1zM900.1,515.9l4.1,-4.1 4.1,4.1 -4.1,4.1zM900.9,503.2l4.1,-4.1 4.1,4.1 -4.1,4.1zM901.8,494.6l4.1,-4.1 4.1,4.1 -4.1,4.1zM902.6,512.7l4.1,-4.1 4.1,4.1 -4.1,4.1zM903.4,522.8l4.1,-4.1 4.1,4.1 -4.1,4.1zM904.3,514.8l4.1,-4.1 4.1,4.1 -4.1,4.1zM905.1,504.3l4.1,-4.1 4.1,4.1 -4.1,4.1zM905.9,513.6l4.1,-4.1 4.1,4.1 -4.1,4.1zM906.8,468.7l4.1,-4.1 4.1,4.1 -4.1,4.1zM907.6,513.9l4.1,-4.1 4.1,4.1 -4.1,4.1zM908.4,490.5l4.1,-4.1 4.1,4.1 -4.1,4.1zM909.3,489.8l4.1,-4.1 4.1,4.1 -4.1,4.1zM910.1,501.0l4.1,-4.1 4.1,4.1 -4.1,4.1zM910.9,522.8l4.1,-4.1 4.1,4.1 -4.1,4.1zM911.8,493.4l4.1,-4.1 4.1,4.1 -4.1,4.1zM912.6,484.7l4.1,-4.1 4.1,4.1 -4.1,4.1zM913.4,497.8l4.1,-4.1 4.1,4.1 -4.1,4.1zM914.3,499.6l4.1,-4.1 4.1,4.1 -4.1,4.1zM915.1,538.2l4.1,-4.1 4.1,4.1 -4.1,4.1zM915.9,518.0l4.1,-4.1 4.1,4.1 -4.1,4.1zM916.8,500.8l4.1,-4.1 4.1,4.1 -4.1,4.1zM917.6,492.9l4.1,-4.1 4.1,4.1 -4.1,4.1zM918.4,481.6l4.1,-4.1 4.1,4.1 -4.1,4.1zM919.3,499.4l4.1,-4.1 4.1,4.1 -4.1,4.1zM920.1,489.6l4.1,-4.1 4.1,4.1 -4.1,4.1zM920.9,510.1l4.1,-4.1 4.1,4.1 -4.1,4.1zM921.8,479.1l4.1,-4.1 4.1,4.1 -4.1,4.1zM922.6,476.2l4.1,-4.1 4.1,4.1 -4.1,4.1zM923.4,490.1l4.1,-4.1 4.1,4.1 -4.1,4.1zM924.3,470.7l4.1,-4.1 4.1,4.1 -4.1,4.1zM925.1,493.5l4.1,-4.1 4.1,4.1 -4.1,4.1zM925.9,497.0l4.1,-4.1 4.1,4.1 -4.1,4.1zM926.8,493.5l4.1,-4.1 4.1,4.1 -4.1,4.1zM927.6,452.8l4.1,-4.1 4.1,4.1 -4.1,4.1zM928.4,518.3l4.1,-4.1 4.1,4.1 -4.1,4.1zM929.3,486.2l4.1,-4.1 4.1,4.1 -4.1,4.1zM930.1,496.5l4.1,-4.1 4.1,4.1 -4.1,4.1zM930.9,486.7l4.1,-4.1 4.1,4.1 -4.1,4.1zM931.8,513.8l4.1,-4.1 4.1,4.1 -4.1,4.1zM932.6,472.5l4.1,-4.1 4.1,4.1 -4.1,4.1zM933.4,472.4l4.1,-4.1 4.1,4.1 -4.1,4.1zM934.3,487.5l4.1,-4.1 4.1,4.1 -4.1,4.1zM935.1,489.0l4.1,-4.1 4.1,4.1 -4.1,4.1zM935.9,478.6l4.1,-4.1 4.1,4.1 -4.1,4.1zM936.7,461.1l4.1,-4.1 4.1,4.1 -4.1,4.1zM937.6,507.0l4.1,-4.1 4.1,4.1 -4.1,4.1zM938.4,455.6l4.1,-4.1 4.1,4.1 -4.1,4.1zM939.2,487.7l4.1,-4.1 4.1,4.1 -4.1,4.1zM940.1,468.2l4.1,-4.1 4.1,4.1 -4.1,4.1zM940.9,499.4l4.1,-4.1 4.1,4.1 -4.1,4.1zM941.7,450.5l4.1,-4.1 4.1,4.1 -4.1,4.1zM942.6,482.1l4.1,-4.1 4.1,4.1 -4.1,4.1zM943.4,456.3l4.1,-4.1 4.1,4.1 -4.1,4.1zM944.2,498.5l4.1,-4.1 4.1,4.1 -4.1,4.1zM945.1,498.4l4.1,-4.1 4.1,4.1 -4.1,4.1zM945.9,465.9l4.1,-4.1 4.1,4.1 -4.1,4.1zM946.7,472.8l4.1,-4.1 4.1,4.1 -4.1,4.1zM947.6,478.7l4.1,-4.1 4.1,4.1 -4.1,4.1zM948.4,462.0l4.1,-4.1 4.1,4.1 -4.1,4.1zM949.2,476.0l4.1,-4.1 4.1,4.1 -4.1,4.1zM950.1,489.1l4.1,-4.1 4.1,4.1 -4.1,4.1zM950.9,516.7l4.1,-4.1 4.1,4.1 -4.1,4.1zM951.7,523.5l4.1,-4.1 4.1,4.1 -4.1,4.1zM952.6,470.4l4.1,-4.1 4.1,4.1 -4.1,4.1zM953.4,433.9l4.1,-4.1 4.1,4.1 -4.1,4.1zM954.2,497.6l4.1,-4.1 4.1,4.1 -4.1,4.1zM955.1,471.4l4.1,-4.1 4.1,4.1 -4.1,4.1zM955.9,484.5l4.1,-4.1 4.1,4.1 -4.1,4.1zM956.7,479.7l4.1,-4.1 4.1,4.1 -4.1,4.1zM957.6,462.9l4.1,-4.1 4.1,4.1 -4.1,4.1zM958.4,508.5l4.1,-4.1 4.1,4.1 -4.1,4.1zM959.2,473.7l4.1,-4.1 4.1,4.1 -4.1,4.1zM960.1,470.5l4.1,-4.1 4.1,4.1 -4.1,4.1zM960.9,483.5l4.1,-4.1 4.1,4.1 -4.1,4.1zM961.7,477.3l4.1,-4.1 4.1,4.1 -4.1,4.1zM962.6,500.9l4.1,-4.1 4.1,4.1 -4.1,4.1zM963.4,477.8l4.1,-4.1 4.1,4.1 -4.1,4.1zM964.2,426.7l4.1,-4.1 4.1,4.1 -4.1,4.1zM965.1,466.1l4.1,-4.1 4.1,4.1 -4.1,4.1zM965.9,492.4l4.1,-4.1 4.1,4.1 -4.1,4.1zM966.7,465.2l4.1,-4.1 4.1,4.1 -4.1,4.1zM967.6,474.0l4.1,-4.1 4.1,4.1 -4.1,4.1zM968.4,467.2l4.1,-4.1 4.1,4.1 -4.1,4.1zM969.2,479.7l4.1,-4.1 4.1,4.1 -4.1,4.1zM970.1,467.5l4.1,-4.1 4.1,4.1 -4.1,4.1zM970.9,475.6l4.1,-4.1 4.1,4.1 -4.1,4.1zM971.7,435.9l4.1,-4.1 4.1,4.1 -4.1,4.1zM972.6,485.5l4.1,-4.1 4.1,4.1 -4.1,4.1zM973.4,460.0l4.1,-4.1 4.1,4.1 -4.1,4.1zM974.2,481.3l4.1,-4.1 4.1,4.1 -4.1,4.1zM975.0,508.1l4.1,-4.1 4.1,4.1 -4.1,4.1zM975.9,473.2l4.1,-4.1 4.1,4.1 -4.1,4.1zM976.7,460.1l4.1,-4.1 4.1,4.1 -4.1,4.1zM977.5,470.1l4.1,-4.1 4.1,4.1 -4.1,4.1zM978.4,471.2l4.1,-4.1 4.1,4.1 -4.1,4.1zM979.2,501.4l4.1,-4.1 4.1,4.1 -4.1,4.1zM980.0,482.9l4.1,-4.1 4.1,4.1 -4.1,4.1zM980.9,514.8l4.1,-4.1 4.1,4.1 -4.1,4.1zM981.7,459.5l4.1,-4.1 4.1,4.1 -4.1,4.1zM982.5,465.2l4.1,-4.1 4.1,4.1 -4.1,4.1zM983.4,513.3l4.1,-4.1 4.1,4.1 -4.1,4.1zM984.2,498.8l4.1,-4.1 4.1,4.1 -4.1,4.1zM985.0,511.1l4.1,-4.1 4.1,4.1 -4.1,4.1zM985.9,499.6l4.1,-4.1 4.1,4.1 -4.1,4.1zM986.7,491.3l4.1,-4.1 4.1,4.1 -4.1,4.1zM987.5,501.7l4.1,-4.1 4.1,4.1 -4.1,4.1zM988.4,486.1l4.1,-4.1 4.1,4.1 -4.1,4.1zM989.2,463.5l4.1,-4.1 4.1,4.1 -4.1,4.1zM990.0,477.3l4.1,-4.1 4.1,4.1 -4.1,4.1zM990.9,460.5l4.1,-4.1 4.1,4.1 -4.1,4.1zM991.7,477.8l4.1,-4.1 4.1,4.1 -4.1,4.1zM992.5,474.2l4.1,-4.1 4.1,4.1 -4.1,4.1zM993.4,500.1l4.1,-4.1 4.1,4.1 -4.1,4.1zM994.2,462.0l4.1,-4.1 4.1,4.1 -4.1,4.1zM995.0,500.5l4.1,-4.1 4.1,4.1 -4.1,4.1zM995.9,487.8l4.1,-4.1 4.1,4.1 -4.1,4.1zM996.7,505.7l4.1,-4.1 4.1,4.1 -4.1,4.1zM997.5,472.6l4.1,-4.1 4.1,4.1 -4.1,4.1zM998.4,499.7l4.1,-4.1 4.1,4.1 -4.1,4.1zM999.2,469.6l4.1,-4.1 4.1,4.1 -4.1,4.1zM1000.0,444.2l4.1,-4.1 4.1,4.1 -4.1,4.1zM1000.9,471.9l4.1,-4.1 4.1,4.1 -4.1,4.1zM1001.7,517.6l4.1,-4.1 4.1,4.1 -4.1,4.1zM1002.5,458.3l4.1,-4.1 4.1,4.1 -4.1,4.1zM1003.4,472.1l4.1,-4.1 4.1,4.1 -4.1,4.1zM1004.2,465.6l4.1,-4.1 4.1,4.1 -4.1,4.1zM1005.0,470.7l4.1,-4.1 4.1,4.1 -4.1,4.1zM1005.9,458.7l4.1,-4.1 4.1,4.1 -4.1,4.1zM1006.7,462.7l4.1,-4.1 4.1,4.1 -4.1,4.1zM1007.5,483.5l4.1,-4.1 4.1,4.1 -4.1,4.1zM1008.4,506.3l4.1,-4.1 4.1,4.1 -4.1,4.1zM1009.2,486.9l4.1,-4.1 4.1,4.1 -4.1,4.1zM1010.0,473.0l4.1,-4.1 4.1,4.1 -4.1,4.1zM1010.9,519.7l4.1,-4.1 4.1,4.1 -4.1,4.1zM1011.7,482.6l4.1,-4.1 4.1,4.1 -4.1,4.1zM1012.5,517.1l4.1,-4.1 4.1,4.1 -4.1,4.1zM1013.3,463.6l4.1,-4.1 4.1,4.1 -4.1,4.1zM1014.2,449.6l4.1,-4.1 4.1,4.1 -4.1,4.1zM1015.0,466.4l4.1,-4.1 4.1,4.1 -4.1,4.1zM1015.8,489.0l4.1,-4.1 4.1,4.1 -4.1,4.1zM1016.7,466.4l4.1,-4.1 4.1,4.1 -4.1,4.1zM1017.5,458.6l4.1,-4.1 4.1,4.1 -4.1,4.1zM1018.3,454.6l4.1,-4.1 4.1,4.1 -4.1,4.1zM1019.2,461.2l4.1,-4.1 4.1,4.1 -4.1,4.1zM1020.0,469.2l4.1,-4.1 4.1,4.1 -4.1,4.1zM1020.8,508.8l4.1,-4.1 4.1,4.1 -4.1,4.1zM1021.7,494.9l4.1,-4.1 4.1,4.1 -4.1,4.1zM1022.5,486.6l4.1,-4.1 4.1,4.1 -4.1,4.1zM1023.3,496.4l4.1,-4.1 4.1,4.1 -4.1,4.1zM1024.2,530.8l4.1,-4.1 4.1,4.1 -4.1,4.1zM1025.0,497.1l4.1,-4.1 4.1,4.1 -4.1,4.1zM1025.8,505.2l4.1,-4.1 4.1,4.1 -4.1,4.1zM1026.7,487.0l4.1,-4.1 4.1,4.1 -4.1,4.1zM1027.5,482.4l4.1,-4.1 4.1,4.1 -4.1,4.1zM1028.3,512.5l4.1,-4.1 4.1,4.1 -4.1,4.1zM1029.2,498.2l4.1,-4.1 4.1,4.1 -4.1,4.1zM1030.0,479.5l4.1,-4.1 4.1,4.1 -4.1,4.1zM1030.8,502.7l4.1,-4.1 4.1,4.1 -4.1,4.1zM1031.7,485.9l4.1,-4.1 4.1,4.1 -4.1,4.1zM1032.5,501.8l4.1,-4.1 4.1,4.1 -4.1,4.1zM1033.3,561.7l4.1,-4.1 4.1,4.1 -4.1,4.1zM1034.2,473.6l4.1,-4.1 4.1,4.1 -4.1,4.1zM1035.0,493.3l4.1,-4.1 4.1,4.1 -4.1,4.1zM1035.8,502.3l4.1,-4.1 4.1,4.1 -4.1,4.1zM1036.7,466.1l4.1,-4.1 4.1,4.1 -4.1,4.1zM1037.5,499.8l4.1,-4.1 4.1,4.1 -4.1,4.1zM1038.3,495.0l4.1,-4.1 4.1,4.1 -4.1,4.1zM1039.2,494.5l4.1,-4.1 4.1,4.1 -4.1,4.1zM1040.0,440.6l4.1,-4.1 4.1,4.1 -4.1,4.1zM1040.8,484.1l4.1,-4.1 4.1,4.1 -4.1,4.1zM1041.7,480.4l4.1,-4.1 4.1,4.1 -4.1,4.1zM1042.5,502.9l4.1,-4.1 4.1,4.1 -4.1,4.1zM1043.3,481.4l4.1,-4.1 4.1,4.1 -4.1,4.1zM1044.2,478.3l4.1,-4.1 4.1,4.1 -4.1,4.1zM1045.0,521.8l4.1,-4.1 4.1,4.1 -4.1,4.1zM1045.8,494.9l4.1,-4.1 4.1,4.1 -4.1,4.1zM1046.7,475.1l4.1,-4.1 4.1,4.1 -4.1,4.1zM1047.5,474.0l4.1,-4.1 4.1,4.1 -4.1,4.1zM1048.3,504.4l4.1,-4.1 4.1,4.1 -4.1,4.1zM1049.2,469.3l4.1,-4.1 4.1,4.1 -4.1,4.1zM1050.0,525.2l4.1,-4.1 4.1,4.1 -4.1,4.1zM1050.8,493.6l4.1,-4.1 4.1,4.1 -4.1,4.1zM1051.6,502.4l4.1,-4.1 4.1,4.1 -4.1,4.1zM1052.5,530.6l4.1,-4.1 4.1,4.1 -4.1,4.1zM1053.3,493.1l4.1,-4.1 4.1,4.1 -4.1,4.1zM1054.1,533.9l4.1,-4.1 4.1,4.1 -4.1,4.1zM1055.0,522.3l4.1,-4.1 4.1,4.1 -4.1,4.1zM1055.8,511.9l4.1,-4.1 4.1,4.1 -4.1,4.1zM1056.6,576.1l4.1,-4.1 4.1,4.1 -4.1,4.1zM1057.5,487.3l4.1,-4.1 4.1,4.1 -4.1,4.1zM1058.3,515.3l4.1,-4.1 4.1,4.1 -4.1,4.1zM1059.1,445.4l4.1,-4.1 4.1,4.1 -4.1,4.1zM1060.0,499.9l4.1,-4.1 4.1,4.1 -4.1,4.1zM1060.8,503.4l4.1,-4.1 4.1,4.1 -4.1,4.1zM1061.6,521.5l4.1,-4.1 4.1,4.1 -4.1,4.1zM1062.5,510.4l4.1,-4.1 4.1,4.1 -4.1,4.1zM1063.3,483.2l4.1,-4.1 4.1,4.1 -4.1,4.1zM1064.1,484.6l4.1,-4.1 4.1,4.1 -4.1,4.1zM1065.0,528.2l4.1,-4.1 4.1,4.1 -4.1,4.1zM1065.8,482.4l4.1,-4.1 4.1,4.1 -4.1,4.1zM1066.6,482.4l4.1,-4.1 4.1,4.1 -4.1,4.1zM1067.5,479.5l4.1,-4.1 4.1,4.1 -4.1,4.1zM1068.3,509.0l4.1,-4.1 4.1,4.1 -4.1,4.1zM1069.1,514.5l4.1,-4.1 4.1,4.1 -4.1,4.1zM1070.0,502.6l4.1,-4.1 4.1,4.1 -4.1,4.1zM1070.8,512.7l4.1,-4.1 4.1,4.1 -4.1,4.1zM1071.6,505.6l4.1,-4.1 4.1,4.1 -4.1,4.1zM1072.5,511.9l4.1,-4.1 4.1,4.1 -4.1,4.1zM1073.3,506.4l4.1,-4.1 4.1,4.1 -4.1,4.1zM1074.1,510.2l4.1,-4.1 4.1,4.1 -4.1,4.1zM1075.0,500.8l4.1,-4.1 4.1,4.1 -4.1,4.1zM1075.8,498.6l4.1,-4.1 4.1,4.1 -4.1,4.1zM1076.6,506.3l4.1,-4.1 4.1,4.1 -4.1,4.1zM1077.5,511.5l4.1,-4.1 4.1,4.1 -4.1,4.1zM1078.3,472.8l4.1,-4.1 4.1,4.1 -4.1,4.1zM1079.1,484.9l4.1,-4.1 4.1,4.1 -4.1,4.1zM1080.0,492.9l4.1,-4.1 4.1,4.1 -4.1,4.1zM1080.8,517.6l4.1,-4.1 4.1,4.1 -4.1,4.1zM1081.6,490.4l4.1,-4.1 4.1,4.1 -4.1,4.1zM1082.5,504.7l4.1,-4.1 4.1,4.1 -4.1,4.1zM1083.3,491.1l4.1,-4.1 4.1,4.1 -4.1,4.1zM1084.1,496.6l4.1,-4.1 4.1,4.1 -4.1,4.1zM1085.0,454.3l4.1,-4.1 4.1,4.1 -4.1,4.1zM1085.8,498.3l4.1,-4.1 4.1,4.1 -4.1,4.1zM1086.6,515.8l4.1,-4.1 4.1,4.1 -4.1,4.1zM1087.5,477.0l4.1,-4.1 4.1,4.1 -4.1,4.1zM1088.3,474.7l4.1,-4.1 4.1,4.1 -4.1,4.1zM1089.1,470.3l4.1,-4.1 4.1,4.1 -4.1,4.1zM1089.9,540.4l4.1,-4.1 4.1,4.1 -4.1,4.1zM1090.8,511.5l4.1,-4.1 4.1,4.1 -4.1,4.1zM1091.6,510.6l4.1,-4.1 4.1,4.1 -4.1,4.1zM1092.4,526.7l4.1,-4.1 4.1,4.1 -4.1,4.1zM1093.3,496.2l4.1,-4.1 4.1,4.1 -4.1,4.1zM1094.1,487.6l4.1,-4.1 4.1,4.1 -4.1,4.1zM1094.9,480.9l4.1,-4.1 4.1,4.1 -4.1,4.1zM1095.8,484.9l4.1,-4.1 4.1,4.1 -4.1,4.1zM1096.6,501.8l4.1,-4.1 4.1,4.1 -4.1,4.1zM1097.4,474.1l4.1,-4.1 4.1,4.1 -4.1,4.1zM1098.3,497.5l4.1,-4.1 4.1,4.1 -4.1,4.1zM1099.1,552.5l4.1,-4.1 4.1,4.1 -4.1,4.1zM1099.9,507.5l4.1,-4.1 4.1,4.1 -4.1,4.1zM1100.8,515.3l4.1,-4.1 4.1,4.1 -4.1,4.1zM1101.6,495.5l4.1,-4.1 4.1,4.1 -4.1,4.1zM1102.4,509.1l4.1,-4.1 4.1,4.1 -4.1,4.1zM1103.3,507.2l4.1,-4.1 4.1,4.1 -4.1,4.1zM1104.1,476.6l4.1,-4.1 4.1,4.1 -4.1,4.1zM1104.9,515.4l4.1,-4.1 4.1,4.1 -4.1,4.1zM1105.8,526.6l4.1,-4.1 4.1,4.1 -4.1,4.1zM1106.6,497.6l4.1,-4.1 4.1,4.1 -4.1,4.1zM1107.4,490.4l4.1,-4.1 4.1,4.1 -4.1,4.1zM1108.3,504.3l4.1,-4.1 4.1,4.1 -4.1,4.1zM1109.1,502.5l4.1,-4.1 4.1,4.1 -4.1,4.1zM1109.9,513.2l4.1,-4.1 4.1,4.1 -4.1,4.1zM1110.8,526.6l4.1,-4.1 4.1,4.1 -4.1,4.1zM1111.6,516.5l4.1,-4.1 4.1,4.1 -4.1,4.1zM1112.4,522.2l4.1,-4.1 4.1,4.1 -4.1,4.1zM1113.3,480.8l4.1,-4.1 4.1,4.1 -4.1,4.1zM1114.1,507.7l4.1,-4.1 4.1,4.1 -4.1,4.1zM1114.9,477.7l4.1,-4.1 4.1,4.1 -4.1,4.1zM1115.8,505.7l4.1,-4.1 4.1,4.1 -4.1,4.1zM1116.6,519.9l4.1,-4.1 4.1,4.1 -4.1,4.1zM1117.4,498.6l4.1,-4.1 4.1,4.1 -4.1,4.1zM1118.3,444.0l4.1,-4.1 4.1,4.1 -4.1,4.1zM1119.1,475.3l4.1,-4.1 4.1,4.1 -4.1,4.1zM1119.9,534.7l4.1,-4.1 4.1,4.1 -4.1,4.1zM1120.8,504.4l4.1,-4.1 4.1,4.1 -4.1,4.1zM1121.6,488.1l4.1,-4.1 4.1,4.1 -4.1,4.1zM1122.4,507.7l4.1,-4.1 4.1,4.1 -4.1,4.1zM1123.3,490.5l4.1,-4.1 4.1,4.1 -4.1,4.1zM1124.1,498.4l4.1,-4.1 4.1,4.1 -4.1,4.1zM1124.9,467.7l4.1,-4.1 4.1,4.1 -4.1,4.1zM1125.7,471.3l4.1,-4.1 4.1,4.1 -4.1,4.1zM1126.6,531.8l4.1,-4.1 4.1,4.1 -4.1,4.1zM1127.4,522.9l4.1,-4.1 4.1,4.1 -4.1,4.1zM1128.2,509.8l4.1,-4.1 4.1,4.1 -4.1,4.1zM1129.1,497.1l4.1,-4.1 4.1,4.1 -4.1,4.1zM1129.9,499.2l4.1,-4.1 4.1,4.1 -4.1,4.1zM1130.7,454.0l4.1,-4.1 4.1,4.1 -4.1,4.1zM1131.6,484.9l4.1,-4.1 4.1,4.1 -4.1,4.1zM1132.4,598.8l4.1,-4.1 4.1,4.1 -4.1,4.1zM1133.2,601.1l4.1,-4.1 4.1,4.1 -4.1,4.1zM1134.1,594.1l4.1,-4.1 4.1,4.1 -4.1,4.1zM1134.9,588.7l4.1,-4.1 4.1,4.1 -4.1,4.1zM1135.7,578.8l4.1,-4.1 4.1,4.1 -4.1,4.1zM1136.6,587.5l4.1,-4.1 4.1,4.1 -4.1,4.1zM1137.4,582.9l4.1,-4.1 4.1,4.1 -4.1,4.1zM1138.2,594.2l4.1,-4.1 4.1,4.1 -4.1,4.1zM1139.1,572.2l4.1,-4.1 4.1,4.1 -4.1,4.1zM1139.9,568.5l4.1,-4.1 4.1,4.1 -4.1,4.1zM1140.7,599.3l4.1,-4.1 4.1,4.1 -4.1,4.1zM1141.6,589.6l4.1,-4.1 4.1,4.1 -4.1,4.1zM1142.4,593.6l4.1,-4.1 4.1,4.1 -4.1,4.1zM1143.2,588.8l4.1,-4.1 4.1,4.1 -4.1,4.1zM1144.1,595.6l4.1,-4.1 4.1,4.1 -4.1,4.1zM1144.9,599.8l4.1,-4.1 4.1,4.1 -4.1,4.1zM1145.7,606.3l4.1,-4.1 4.1,4.1 -4.1,4.1zM1146.6,597.8l4.1,-4.1 4.1,4.1 -4.1,4.1zM1147.4,592.1l4.1,-4.1 4.1,4.1 -4.1,4.1zM1148.2,581.1l4.1,-4.1 4.1,4.1 -4.1,4.1zM1149.1,586.2l4.1,-4.1 4.1,4.1 -4.1,4.1zM1149.9,596.8l4.1,-4.1 4.1,4.1 -4.1,4.1zM1150.7,599.5l4.1,-4.1 4.1,4.1 -4.1,4.1zM1151.6,608.6l4.1,-4.1 4.1,4.1 -4.1,4.1zM1152.4,585.0l4.1,-4.1 4.1,4.1 -4.1,4.1zM1153.2,591.4l4.1,-4.1 4.1,4.1 -4.1,4.1zM1154.1,585.9l4.1,-4.1 4.1,4.1 -4.1,4.1zM1154.9,584.3l4.1,-4.1 4.1,4.1 -4.1,4.1zM1155.7,586.5l4.1,-4.1 4.1,4.1 -4.1,4.1zM1156.6,593.6l4.1,-4.1 4.1,4.1 -4.1,4.1zM1157.4,595.6l4.1,-4.1 4.1,4.1 -4.1,4.1zM1158.2,603.4l4.1,-4.1 4.1,4.1 -4.1,4.1zM1159.1,599.5l4.1,-4.1 4.1,4.1 -4.1,4.1zM1159.9,588.0l4.1,-4.1 4.1,4.1 -4.1,4.1zM1160.7,568.2l4.1,-4.1 4.1,4.1 -4.1,4.1zM1161.6,597.0l4.1,-4.1 4.1,4.1 -4.1,4.1zM1162.4,590.1l4.1,-4.1 4.1,4.1 -4.1,4.1zM1163.2,558.1l4.1,-4.1 4.1,4.1 -4.1,4.1zM1164.0,591.7l4.1,-4.1 4.1,4.1 -4.1,4.1zM1164.9,596.5l4.1,-4.1 4.1,4.1 -4.1,4.1zM1165.7,592.7l4.1,-4.1 4.1,4.1 -4.1,4.1zM1166.5,595.5l4.1,-4.1 4.1,4.1 -4.1,4.1zM1167.4,613.9l4.1,-4.1 4.1,4.1 -4.1,4.1zM1168.2,584.0l4.1,-4.1 4.1,4.1 -4.1,4.1zM1169.0,612.3l4.1,-4.1 4.1,4.1 -4.1,4.1zM1169.9,599.3l4.1,-4.1 4.1,4.1 -4.1,4.1zM1170.7,597.9l4.1,-4.1 4.1,4.1 -4.1,4.1zM1171.5,588.5l4.1,-4.1 4.1,4.1 -4.1,4.1zM1172.4,595.8l4.1,-4.1 4.1,4.1 -4.1,4.1zM1173.2,598.7l4.1,-4.1 4.1,4.1 -4.1,4.1zM1174.0,603.0l4.1,-4.1 4.1,4.1 -4.1,4.1zM1174.9,591.2l4.1,-4.1 4.1,4.1 -4.1,4.1zM1175.7,597.5l4.1,-4.1 4.1,4.1 -4.1,4.1zM1176.5,601.8l4.1,-4.1 4.1,4.1 -4.1,4.1zM1177.4,608.6l4.1,-4.1 4.1,4.1 -4.1,4.1zM1178.2,603.5l4.1,-4.1 4.1,4.1 -4.1,4.1zM1179.0,592.6l4.1,-4.1 4.1,4.1 -4.1,4.1zM1179.9,611.3l4.1,-4.1 4.1,4.1 -4.1,4.1zM1180.7,592.9l4.1,-4.1 4.1,4.1 -4.1,4.1zM1181.5,593.4l4.1,-4.1 4.1,4.1 -4.1,4.1zM1182.4,582.0l4.1,-4.1 4.1,4.1 -4.1,4.1zM1183.2,601.9l4.1,-4.1 4.1,4.1 -4.1,4.1zM1184.0,605.2l4.1,-4.1 4.1,4.1 -4.1,4.1zM1184.9,595.7l4.1,-4.1 4.1,4.1 -4.1,4.1zM1185.7,598.9l4.1,-4.1 4.1,4.1 -4.1,4.1zM1186.5,620.6l4.1,-4.1 4.1,4.1 -4.1,4.1zM1187.4,581.9l4.1,-4.1 4.1,4.1 -4.1,4.1zM1188.2,592.2l4.1,-4.1 4.1,4.1 -4.1,4.1zM1189.0,593.3l4.1,-4.1 4.1,4.1 -4.1,4.1zM1189.9,603.6l4.1,-4.1 4.1,4.1 -4.1,4.1zM1190.7,590.9l4.1,-4.1 4.1,4.1 -4.1,4.1zM1191.5,598.0l4.1,-4.1 4.1,4.1 -4.1,4.1zM1192.4,577.7l4.1,-4.1 4.1,4.1 -4.1,4.1zM1193.2,587.3l4.1,-4.1 4.1,4.1 -4.1,4.1zM1194.0,579.4l4.1,-4.1 4.1,4.1 -4.1,4.1zM1194.9,608.2l4.1,-4.1 4.1,4.1 -4.1,4.1zM1195.7,604.4l4.1,-4.1 4.1,4.1 -4.1,4.1zM1196.5,599.4l4.1,-4.1 4.1,4.1 -4.1,4.1zM1197.4,601.6l4.1,-4.1 4.1,4.1 -4.1,4.1zM1198.2,577.5l4.1,-4.1 4.1,4.1 -4.1,4.1zM1199.0,590.9l4.1,-4.1 4.1,4.1 -4.1,4.1zM1199.9,606.5l4.1,-4.1 4.1,4.1 -4.1,4.1zM1200.7,597.8l4.1,-4.1 4.1,4.1 -4.1,4.1zM1201.5,575.0l4.1,-4.1 4.1,4.1 -4.1,4.1zM1202.3,598.2l4.1,-4.1 4.1,4.1 -4.1,4.1zM1203.2,588.2l4.1,-4.1 4.1,4.1 -4.1,4.1zM1204.0,613.5l4.1,-4.1 4.1,4.1 -4.1,4.1zM1204.8,600.9l4.1,-4.1 4.1,4.1 -4.1,4.1zM1205.7,596.6l4.1,-4.1 4.1,4.1 -4.1,4.1zM1206.5,597.6l4.1,-4.1 4.1,4.1 -4.1,4.1zM1207.3,594.9l4.1,-4.1 4.1,4.1 -4.1,4.1zM1208.2,591.1l4.1,-4.1 4.1,4.1 -4.1,4.1zM1209.0,582.4l4.1,-4.1 4.1,4.1 -4.1,4.1zM1209.8,613.8l4.1,-4.1 4.1,4.1 -4.1,4.1zM1210.7,594.2l4.1,-4.1 4.1,4.1 -4.1,4.1zM1211.5,587.2l4.1,-4.1 4.1,4.1 -4.1,4.1zM1212.3,592.4l4.1,-4.1 4.1,4.1 -4.1,4.1zM1213.2,582.5l4.1,-4.1 4.1,4.1 -4.1,4.1zM1214.0,596.3l4.1,-4.1 4.1,4.1 -4.1,4.1zM1214.8,599.5l4.1,-4.1 4.1,4.1 -4.1,4.1zM1215.7,587.4l4.1,-4.1 4.1,4.1 -4.1,4.1zM1216.5,562.6l4.1,-4.1 4.1,4.1 -4.1,4.1zM1217.3,597.0l4.1,-4.1 4.1,4.1 -4.1,4.1zM1218.2,523.0l4.1,-4.1 4.1,4.1 -4.1,4.1zM1219.0,533.3l4.1,-4.1 4.1,4.1 -4.1,4.1zM1219.8,553.9l4.1,-4.1 4.1,4.1 -4.1,4.1zM1220.7,480.4l4.1,-4.1 4.1,4.1 -4.1,4.1zM1221.5,509.7l4.1,-4.1 4.1,4.1 -4.1,4.1zM1222.3,472.4l4.1,-4.1 4.1,4.1 -4.1,4.1zM1223.2,490.5l4.1,-4.1 4.1,4.1 -4.1,4.1zM1224.0,502.2l4.1,-4.1 4.1,4.1 -4.1,4.1zM1224.8,468.1l4.1,-4.1 4.1,4.1 -4.1,4.1zM1225.7,455.6l4.1,-4.1 4.1,4.1 -4.1,4.1zM1226.5,464.6l4.1,-4.1 4.1,4.1 -4.1,4.1zM1227.3,508.6l4.1,-4.1 4.1,4.1 -4.1,4.1zM1228.2,475.6l4.1,-4.1 4.1,4.1 -4.1,4.1zM1229.0,507.6l4.1,-4.1 4.1,4.1 -4.1,4.1zM1229.8,496.8l4.1,-4.1 4.1,4.1 -4.1,4.1zM1230.7,459.4l4.1,-4.1 4.1,4.1 -4.1,4.1zM1231.5,507.0l4.1,-4.1 4.1,4.1 -4.1,4.1zM1232.3,433.9l4.1,-4.1 4.1,4.1 -4.1,4.1zM1233.2,504.4l4.1,-4.1 4.1,4.1 -4.1,4.1zM1234.0,497.6l4.1,-4.1 4.1,4.1 -4.1,4.1zM1234.8,458.1l4.1,-4.1 4.1,4.1 -4.1,4.1zM1235.7,473.0l4.1,-4.1 4.1,4.1 -4.1,4.1zM1236.5,469.6l4.1,-4.1 4.1,4.1 -4.1,4.1zM1237.3,484.9l4.1,-4.1 4.1,4.1 -4.1,4.1zM1238.2,455.9l4.1,-4.1 4.1,4.1 -4.1,4.1zM1239.0,466.3l4.1,-4.1 4.1,4.1 -4.1,4.1zM1239.8,473.0l4.1,-4.1 4.1,4.1 -4.1,4.1zM1240.6,487.3l4.1,-4.1 4.1,4.1 -4.1,4.1zM1241.5,500.8l4.1,-4.1 4.1,4.1 -4.1,4.1zM1242.3,475.0l4.1,-4.1 4.1,4.1 -4.1,4.1zM1243.1,515.4l4.1,-4.1 4.1,4.1 -4.1,4.1zM1244.0,487.7l4.1,-4.1 4.1,4.1 -4.1,4.1zM1244.8,464.3l4.1,-4.1 4.1,4.1 -4.1,4.1zM1245.6,463.1l4.1,-4.1 4.1,4.1 -4.1,4.1zM1246.5,482.9l4.1,-4.1 4.1,4.1 -4.1,4.1zM1247.3,522.0l4.1,-4.1 4.1,4.1 -4.1,4.1zM1248.1,465.2l4.1,-4.1 4.1,4.1 -4.1,4.1zM1249.0,415.2l4.1,-4.1 4.1,4.1 -4.1,4.1zM1249.8,473.9l4.1,-4.1 4.1,4.1 -4.1,4.1zM1250.6,451.3l4.1,-4.1 4.1,4.1 -4.1,4.1zM1251.5,455.5l4.1,-4.1 4.1,4.1 -4.1,4.1zM1252.3,504.2l4.1,-4.1 4.1,4.1 -4.1,4.1zM1253.1,477.6l4.1,-4.1 4.1,4.1 -4.1,4.1zM1254.0,482.0l4.1,-4.1 4.1,4.1 -4.1,4.1zM1254.8,444.3l4.1,-4.1 4.1,4.1 -4.1,4.1zM1255.6,452.9l4.1,-4.1 4.1,4.1 -4.1,4.1zM1256.5,470.0l4.1,-4.1 4.1,4.1 -4.1,4.1zM1257.3,463.6l4.1,-4.1 4.1,4.1 -4.1,4.1zM1258.1,459.7l4.1,-4.1 4.1,4.1 -4.1,4.1zM1259.0,490.4l4.1,-4.1 4.1,4.1 -4.1,4.1zM1259.8,482.7l4.1,-4.1 4.1,4.1 -4.1,4.1zM1260.6,483.4l4.1,-4.1 4.1,4.1 -4.1,4.1zM1261.5,491.4l4.1,-4.1 4.1,4.1 -4.1,4.1zM1262.3,491.9l4.1,-4.1 4.1,4.1 -4.1,4.1zM1263.1,483.9l4.1,-4.1 4.1,4.1 -4.1,4.1zM1264.0,510.4l4.1,-4.1 4.1,4.1 -4.1,4.1zM1264.8,506.6l4.1,-4.1 4.1,4.1 -4.1,4.1zM1265.6,470.4l4.1,-4.1 4.1,4.1 -4.1,4.1zM1266.5,455.7l4.1,-4.1 4.1,4.1 -4.1,4.1zM1267.3,448.2l4.1,-4.1 4.1,4.1 -4.1,4.1zM1268.1,512.9l4.1,-4.1 4.1,4.1 -4.1,4.1zM1269.0,473.0l4.1,-4.1 4.1,4.1 -4.1,4.1zM1269.8,493.9l4.1,-4.1 4.1,4.1 -4.1,4.1zM1270.6,488.7l4.1,-4.1 4.1,4.1 -4.1,4.1zM1271.5,483.3l4.1,-4.1 4.1,4.1 -4.1,4.1zM1272.3,472.3l4.1,-4.1 4.1,4.1 -4.1,4.1zM1273.1,469.6l4.1,-4.1 4.1,4.1 -4.1,4.1zM1274.0,524.1l4.1,-4.1 4.1,4.1 -4.1,4.1zM1274.8,491.3l4.1,-4.1 4.1,4.1 -4.1,4.1zM1275.6,461.0l4.1,-4.1 4.1,4.1 -4.1,4.1zM1276.5,478.7l4.1,-4.1 4.1,4.1 -4.1,4.1zM1277.3,508.8l4.1,-4.1 4.1,4.1 -4.1,4.1zM1278.1,495.8l4.1,-4.1 4.1,4.1 -4.1,4.1zM1278.9,491.0l4.1,-4.1 4.1,4.1 -4.1,4.1zM1279.8,456.6l4.1,-4.1 4.1,4.1 -4.1,4.1zM1280.6,441.6l4.1,-4.1 4.1,4.1 -4.1,4.1zM1281.4,491.8l4.1,-4.1 4.1,4.1 -4.1,4.1zM1282.3,461.2l4.1,-4.1 4.1,4.1 -4.1,4.1zM1283.1,474.1l4.1,-4.1 4.1,4.1 -4.1,4.1zM1283.9,460.8l4.1,-4.1 4.1,4.1 -4.1,4.1zM1284.8,477.8l4.1,-4.1 4.1,4.1 -4.1,4.1zM1285.6,496.2l4.1,-4.1 4.1,4.1 -4.1,4.1zM1286.4,490.0l4.1,-4.1 4.1,4.1 -4.1,4.1zM1287.3,492.4l4.1,-4.1 4.1,4.1 -4.1,4.1zM1288.1,456.4l4.1,-4.1 4.1,4.1 -4.1,4.1zM1288.9,498.8l4.1,-4.1 4.1,4.1 -4.1,4.1zM1289.8,477.3l4.1,-4.1 4.1,4.1 -4.1,4.1zM1290.6,503.5l4.1,-4.1 4.1,4.1 -4.1,4.1zM1291.4,501.1l4.1,-4.1 4.1,4.1 -4.1,4.1zM1292.3,485.6l4.1,-4.1 4.1,4.1 -4.1,4.1zM1293.1,500.9l4.1,-4.1 4.1,4.1 -4.1,4.1zM1293.9,456.5l4.1,-4.1 4.1,4.1 -4.1,4.1zM1294.8,469.9l4.1,-4.1 4.1,4.1 -4.1,4.1zM1295.6,515.9l4.1,-4.1 4.1,4.1 -4.1,4.1zM1296.4,487.7l4.1,-4.1 4.1,4.1 -4.1,4.1zM1297.3,469.4l4.1,-4.1 4.1,4.1 -4.1,4.1zM1298.1,518.4l4.1,-4.1 4.1,4.1 -4.1,4.1zM1298.9,503.7l4.1,-4.1 4.1,4.1 -4.1,4.1zM1299.8,469.2l4.1,-4.1 4.1,4.1 -4.1,4.1zM1300.6,510.8l4.1,-4.1 4.1,4.1 -4.1,4.1zM1301.4,484.1l4.1,-4.1 4.1,4.1 -4.1,4.1zM1302.3,496.8l4.1,-4.1 4.1,4.1 -4.1,4.1zM1303.1,491.9l4.1,-4.1 4.1,4.1 -4.1,4.1zM1303.9,515.2l4.1,-4.1 4.1,4.1 -4.1,4.1zM1304.8,498.9l4.1,-4.1 4.1,4.1 -4.1,4.1zM1305.6,506.7l4.1,-4.1 4.1,4.1 -4.1,4.1zM1306.4,468.1l4.1,-4.1 4.1,4.1 -4.1,4.1zM1307.3,489.6l4.1,-4.1 4.1,4.1 -4.1,4.1zM1308.1,500.4l4.1,-4.1 4.1,4.1 -4.1,4.1zM1308.9,504.0l4.1,-4.1 4.1,4.1 -4.1,4.1zM1309.8,492.4l4.1,-4.1 4.1,4.1 -4.1,4.1zM1310.6,533.4l4.1,-4.1 4.1,4.1 -4.1,4.1zM1311.4,522.0l4.1,-4.1 4.1,4.1 -4.1,4.1zM1312.3,519.9l4.1,-4.1 4.1,4.1 -4.1,4.1zM1313.1,517.1l4.1,-4.1 4.1,4.1 -4.1,4.1zM1313.9,531.9l4.1,-4.1 4.1,4.1 -4.1,4.1zM1314.8,492.1l4.1,-4.1 4.1,4.1 -4.1,4.1zM1315.6,509.4l4.1,-4.1 4.1,4.1 -4.1,4.1zM1316.4,477.5l4.1,-4.1 4.1,4.1 -4.1,4.1zM1317.2,502.0l4.1,-4.1 4.1,4.1 -4.1,4.1zM1318.1,506.1l4.1,-4.1 4.1,4.1 -4.1,4.1zM1318.9,490.9l4.1,-4.1 4.1,4.1 -4.1,4.1zM1319.7,490.5l4.1,-4.1 4.1,4.1 -4.1,4.1zM1320.6,503.1l4.1,-4.1 4.1,4.1 -4.1,4.1zM1321.4,487.0l4.1,-4.1 4.1,4.1 -4.1,4.1zM1322.2,474.2l4.1,-4.1 4.1,4.1 -4.1,4.1zM1323.1,504.7l4.1,-4.1 4.1,4.1 -4.1,4.1zM1323.9,472.8l4.1,-4.1 4.1,4.1 -4.1,4.1zM1324.7,499.5l4.1,-4.1 4.1,4.1 -4.1,4.1zM1325.6,479.9l4.1,-4.1 4.1,4.1 -4.1,4.1zM1326.4,496.2l4.1,-4.1 4.1,4.1 -4.1,4.1zM1327.2,502.0l4.1,-4.1 4.1,4.1 -4.1,4.1zM1328.1,489.3l4.1,-4.1 4.1,4.1 -4.1,4.1zM1328.9,514.7l4.1,-4.1 4.1,4.1 -4.1,4.1zM1329.7,523.1l4.1,-4.1 4.1,4.1 -4.1,4.1zM1330.6,495.2l4.1,-4.1 4.1,4.1 -4.1,4.1zM1331.4,499.1l4.1,-4.1 4.1,4.1 -4.1,4.1zM1332.2,515.3l4.1,-4.1 4.1,4.1 -4.1,4.1zM1333.1,456.9l4.1,-4.1 4.1,4.1 -4.1,4.1zM1333.9,488.1l4.1,-4.1 4.1,4.1 -4.1,4.1zM1334.7,508.9l4.1,-4.1 4.1,4.1 -4.1,4.1zM1335.6,486.8l4.1,-4.1 4.1,4.1 -4.1,4.1zM1336.4,486.6l4.1,-4.1 4.1,4.1 -4.1,4.1zM1337.2,502.9l4.1,-4.1 4.1,4.1 -4.1,4.1zM1338.1,499.7l4.1,-4.1 4.1,4.1 -4.1,4.1zM1338.9,528.4l4.1,-4.1 4.1,4.1 -4.1,4.1zM1339.7,490.2l4.1,-4.1 4.1,4.1 -4.1,4.1zM1340.6,459.7l4.1,-4.1 4.1,4.1 -4.1,4.1zM1341.4,472.5l4.1,-4.1 4.1,4.1 -4.1,4.1zM1342.2,473.9l4.1,-4.1 4.1,4.1 -4.1,4.1zM1343.1,502.8l4.1,-4.1 4.1,4.1 -4.1,4.1zM1343.9,509.8l4.1,-4.1 4.1,4.1 -4.1,4.1zM1344.7,472.4l4.1,-4.1 4.1,4.1 -4.1,4.1zM1345.6,481.0l4.1,-4.1 4.1,4.1 -4.1,4.1zM1346.4,488.1l4.1,-4.1 4.1,4.1 -4.1,4.1zM1347.2,488.2l4.1,-4.1 4.1,4.1 -4.1,4.1zM1348.1,463.6l4.1,-4.1 4.1,4.1 -4.1,4.1zM1348.9,467.3l4.1,-4.1 4.1,4.1 -4.1,4.1zM1349.7,485.2l4.1,-4.1 4.1,4.1 -4.1,4.1zM1350.6,481.5l4.1,-4.1 4.1,4.1 -4.1,4.1zM1351.4,419.6l4.1,-4.1 4.1,4.1 -4.1,4.1zM1352.2,506.0l4.1,-4.1 4.1,4.1 -4.1,4.1zM1353.0,477.1l4.1,-4.1 4.1,4.1 -4.1,4.1zM1353.9,498.3l4.1,-4.1 4.1,4.1 -4.1,4.1zM1354.7,508.3l4.1,-4.1 4.1,4.1 -4.1,4.1zM1355.5,490.4l4.1,-4.1 4.1,4.1 -4.1,4.1zM1356.4,475.2l4.1,-4.1 4.1,4.1 -4.1,4.1zM1357.2,512.5l4.1,-4.1 4.1,4.1 -4.1,4.1zM1358.0,502.6l4.1,-4.1 4.1,4.1 -4.1,4.1zM1358.9,500.7l4.1,-4.1 4.1,4.1 -4.1,4.1zM1359.7,451.4l4.1,-4.1 4.1,4.1 -4.1,4.1zM1360.5,476.4l4.1,-4.1 4.1,4.1 -4.1,4.1zM1361.4,489.4l4.1,-4.1 4.1,4.1 -4.1,4.1zM1362.2,519.3l4.1,-4.1 4.1,4.1 -4.1,4.1zM1363.0,479.3l4.1,-4.1 4.1,4.1 -4.1,4.1zM1363.9,484.2l4.1,-4.1 4.1,4.1 -4.1,4.1zM1364.7,499.5l4.1,-4.1 4.1,4.1 -4.1,4.1zM1365.5,511.0l4.1,-4.1 4.1,4.1 -4.1,4.1zM1366.4,507.1l4.1,-4.1 4.1,4.1 -4.1,4.1zM1367.2,530.2l4.1,-4.1 4.1,4.1 -4.1,4.1zM1368.0,509.0l4.1,-4.1 4.1,4.1 -4.1,4.1zM1368.9,511.8l4.1,-4.1 4.1,4.1 -4.1,4.1zM1369.7,521.3l4.1,-4.1 4.1,4.1 -4.1,4.1zM1370.5,511.7l4.1,-4.1 4.1,4.1 -4.1,4.1zM1371.4,535.2l4.1,-4.1 4.1,4.1 -4.1,4.1zM1372.2,487.2l4.1,-4.1 4.1,4.1 -4.1,4.1zM1373.0,511.4l4.1,-4.1 4.1,4.1 -4.1,4.1zM1373.9,530.6l4.1,-4.1 4.1,4.1 -4.1,4.1zM1374.7,496.4l4.1,-4.1 4.1,4.1 -4.1,4.1zM1375.5,501.1l4.1,-4.1 4.1,4.1 -4.1,4.1zM1376.4,521.0l4.1,-4.1 4.1,4.1 -4.1,4.1zM1377.2,533.9l4.1,-4.1 4.1,4.1 -4.1,4.1zM1378.0,509.5l4.1,-4.1 4.1,4.1 -4.1,4.1zM1378.9,498.1l4.1,-4.1 4.1,4.1 -4.1,4.1zM1379.7,493.2l4.1,-4.1 4.1,4.1 -4.1,4.1zM1380.5,486.3l4.1,-4.1 4.1,4.1 -4.1,4.1zM1381.4,485.7l4.1,-4.1 4.1,4.1 -4.1,4.1zM1382.2,525.8l4.1,-4.1 4.1,4.1 -4.1,4.1zM1383.0,495.3l4.1,-4.1 4.1,4.1 -4.1,4.1zM1383.9,531.9l4.1,-4.1 4.1,4.1 -4.1,4.1zM1384.7,481.7l4.1,-4.1 4.1,4.1 -4.1,4.1zM1385.5,491.8l4.1,-4.1 4.1,4.1 -4.1,4.1zM1386.4,481.9l4.1,-4.1 4.1,4.1 -4.1,4.1zM1387.2,498.2l4.1,-4.1 4.1,4.1 -4.1,4.1zM1388.0,498.9l4.1,-4.1 4.1,4.1 -4.1,4.1zM1388.9,508.5l4.1,-4.1 4.1,4.1 -4.1,4.1zM1389.7,548.6l4.1,-4.1 4.1,4.1 -4.1,4.1zM1390.5,500.7l4.1,-4.1 4.1,4.1 -4.1,4.1zM1391.3,449.3l4.1,-4.1 4.1,4.1 -4.1,4.1zM1392.2,470.9l4.1,-4.1 4.1,4.1 -4.1,4.1zM1393.0,496.4l4.1,-4.1 4.1,4.1 -4.1,4.1zM1393.8,484.9l4.1,-4.1 4.1,4.1 -4.1,4.1zM1394.7,481.2l4.1,-4.1 4.1,4.1 -4.1,4.1zM1395.5,498.1l4.1,-4.1 4.1,4.1 -4.1,4.1zM1396.3,486.1l4.1,-4.1 4.1,4.1 -4.1,4.1zM1397.2,479.5l4.1,-4.1 4.1,4.1 -4.1,4.1zM1398.0,494.1l4.1,-4.1 4.1,4.1 -4.1,4.1zM1398.8,476.5l4.1,-4.1 4.1,4.1 -4.1,4.1zM1399.7,462.1l4.1,-4.1 4.1,4.1 -4.1,4.1zM1400.5,468.8l4.1,-4.1 4.1,4.1 -4.1,4.1zM1401.3,478.4l4.1,-4.1 4.1,4.1 -4.1,4.1zM1402.2,485.9l4.1,-4.1 4.1,4.1 -4.1,4.1zM1403.0,469.3l4.1,-4.1 4.1,4.1 -4.1,4.1zM1403.8,491.9l4.1,-4.1 4.1,4.1 -4.1,4.1zM1404.7,493.7l4.1,-4.1 4.1,4.1 -4.1,4.1zM1405.5,459.5l4.1,-4.1 4.1,4.1 -4.1,4.1zM1406.3,488.9l4.1,-4.1 4.1,4.1 -4.1,4.1zM1407.2,506.5l4.1,-4.1 4.1,4.1 -4.1,4.1zM1408.0,467.0l4.1,-4.1 4.1,4.1 -4.1,4.1zM1408.8,469.3l4.1,-4.1 4.1,4.1 -4.1,4.1zM1409.7,462.0l4.1,-4.1 4.1,4.1 -4.1,4.1zM1410.5,484.1l4.1,-4.1 4.1,4.1 -4.1,4.1zM1411.3,461.9l4.1,-4.1 4.1,4.1 -4.1,4.1zM1412.2,484.9l4.1,-4.1 4.1,4.1 -4.1,4.1zM1413.0,500.8l4.1,-4.1 4.1,4.1 -4.1,4.1zM1413.8,486.0l4.1,-4.1 4.1,4.1 -4.1,4.1zM1414.7,478.4l4.1,-4.1 4.1,4.1 -4.1,4.1zM1415.5,502.5l4.1,-4.1 4.1,4.1 -4.1,4.1zM1416.3,486.4l4.1,-4.1 4.1,4.1 -4.1,4.1zM1417.2,475.9l4.1,-4.1 4.1,4.1 -4.1,4.1zM1418.0,485.1l4.1,-4.1 4.1,4.1 -4.1,4.1zM1418.8,474.4l4.1,-4.1 4.1,4.1 -4.1,4.1zM1419.7,474.8l4.1,-4.1 4.1,4.1 -4.1,4.1zM1420.5,487.1l4.1,-4.1 4.1,4.1 -4.1,4.1zM1421.3,465.0l4.1,-4.1 4.1,4.1 -4.1,4.1zM1422.2,459.1l4.1,-4.1 4.1,4.1 -4.1,4.1zM1423.0,503.6l4.1,-4.1 4.1,4.1 -4.1,4.1zM1423.8,481.9l4.1,-4.1 4.1,4.1 -4.1,4.1zM1424.7,457.2l4.1,-4.1 4.1,4.1 -4.1,4.1zM1425.5,465.8l4.1,-4.1 4.1,4.1 -4.1,4.1zM1426.3,509.7l4.1,-4.1 4.1,4.1 -4.1,4.1zM1427.2,473.7l4.1,-4.1 4.1,4.1 -4.1,4.1zM1428.0,455.0l4.1,-4.1 4.1,4.1 -4.1,4.1zM1428.8,466.3l4.1,-4.1 4.1,4.1 -4.1,4.1zM1429.6,470.3l4.1,-4.1 4.1,4.1 -4.1,4.1zM1430.5,484.8l4.1,-4.1 4.1,4.1 -4.1,4.1zM1431.3,480.2l4.1,-4.1 4.1,4.1 -4.1,4.1zM1432.1,501.0l4.1,-4.1 4.1,4.1 -4.1,4.1zM1433.0,479.0l4.1,-4.1 4.1,4.1 -4.1,4.1zM1433.8,437.1l4.1,-4.1 4.1,4.1 -4.1,4.1zM1434.6,477.5l4.1,-4.1 4.1,4.1 -4.1,4.1zM1435.5,492.4l4.1,-4.1 4.1,4.1 -4.1,4.1zM1436.3,465.4l4.1,-4.1 4.1,4.1 -4.1,4.1zM1437.1,512.8l4.1,-4.1 4.1,4.1 -4.1,4.1zM1438.0,437.6l4.1,-4.1 4.1,4.1 -4.1,4.1zM1438.8,468.8l4.1,-4.1 4.1,4.1 -4.1,4.1zM1439.6,486.3l4.1,-4.1 4.1,4.1 -4.1,4.1zM1440.5,489.8l4.1,-4.1 4.1,4.1 -4.1,4.1zM1441.3,501.2l4.1,-4.1 4.1,4.1 -4.1,4.1zM1442.1,484.6l4.1,-4.1 4.1,4.1 -4.1,4.1zM1443.0,487.7l4.1,-4.1 4.1,4.1 -4.1,4.1zM1443.8,516.4l4.1,-4.1 4.1,4.1 -4.1,4.1zM1444.6,471.3l4.1,-4.1 4.1,4.1 -4.1,4.1zM1445.5,495.9l4.1,-4.1 4.1,4.1 -4.1,4.1zM1446.3,550.2l4.1,-4.1 4.1,4.1 -4.1,4.1zM1447.1,473.5l4.1,-4.1 4.1,4.1 -4.1,4.1zM1448.0,477.3l4.1,-4.1 4.1,4.1 -4.1,4.1zM1448.8,501.2l4.1,-4.1 4.1,4.1 -4.1,4.1zM1449.6,503.0l4.1,-4.1 4.1,4.1 -4.1,4.1zM1450.5,472.6l4.1,-4.1 4.1,4.1 -4.1,4.1zM1451.3,500.0l4.1,-4.1 4.1,4.1 -4.1,4.1zM1452.1,490.1l4.1,-4.1 4.1,4.1 -4.1,4.1zM1453.0,470.0l4.1,-4.1 4.1,4.1 -4.1,4.1zM1453.8,516.8l4.1,-4.1 4.1,4.1 -4.1,4.1zM1454.6,522.8l4.1,-4.1 4.1,4.1 -4.1,4.1zM1455.5,511.9l4.1,-4.1 4.1,4.1 -4.1,4.1zM1456.3,507.9l4.1,-4.1 4.1,4.1 -4.1,4.1zM1457.1,497.7l4.1,-4.1 4.1,4.1 -4.1,4.1zM1458.0,481.4l4.1,-4.1 4.1,4.1 -4.1,4.1zM1458.8,507.1l4.1,-4.1 4.1,4.1 -4.1,4.1zM1459.6,470.0l4.1,-4.1 4.1,4.1 -4.1,4.1zM1460.5,497.0l4.1,-4.1 4.1,4.1 -4.1,4.1zM1461.3,536.8l4.1,-4.1 4.1,4.1 -4.1,4.1zM1462.1,502.8l4.1,-4.1 4.1,4.1 -4.1,4.1zM1463.0,490.1l4.1,-4.1 4.1,4.1 -4.1,4.1zM1463.8,484.3l4.1,-4.1 4.1,4.1 -4.1,4.1zM1464.6,517.7l4.1,-4.1 4.1,4.1 -4.1,4.1zM1465.5,507.9l4.1,-4.1 4.1,4.1 -4.1,4.1zM1466.3,467.4l4.1,-4.1 4.1,4.1 -4.1,4.1zM1467.1,505.5l4.1,-4.1 4.1,4.1 -4.1,4.1zM1467.9,525.7l4.1,-4.1 4.1,4.1 -4.1,4.1zM1468.8,537.5l4.1,-4.1 4.1,4.1 -4.1,4.1zM1469.6,519.3l4.1,-4.1 4.1,4.1 -4.1,4.1zM1470.4,503.4l4.1,-4.1 4.1,4.1 -4.1,4.1zM1471.3,528.2l4.1,-4.1 4.1,4.1 -4.1,4.1zM1472.1,482.8l4.1,-4.1 4.1,4.1 -4.1,4.1zM1472.9,518.9l4.1,-4.1 4.1,4.1 -4.1,4.1zM1473.8,538.0l4.1,-4.1 4.1,4.1 -4.1,4.1zM1474.6,490.9l4.1,-4.1 4.1,4.1 -4.1,4.1zM1475.4,500.3l4.1,-4.1 4.1,4.1 -4.1,4.1zM1476.3,503.6l4.1,-4.1 4.1,4.1 -4.1,4.1zM1477.1,478.9l4.1,-4.1 4.1,4.1 -4.1,4.1zM1477.9,514.6l4.1,-4.1 4.1,4.1 -4.1,4.1zM1478.8,554.5l4.1,-4.1 4.1,4.1 -4.1,4.1zM1479.6,517.8l4.1,-4.1 4.1,4.1 -4.1,4.1zM1480.4,481.4l4.1,-4.1 4.1,4.1 -4.1,4.1zM1481.3,512.7l4.1,-4.1 4.1,4.1 -4.1,4.1zM1482.1,514.5l4.1,-4.1 4.1,4.1 -4.1,4.1zM1482.9,506.6l4.1,-4.1 4.1,4.1 -4.1,4.1zM1483.8,518.7l4.1,-4.1 4.1,4.1 -4.1,4.1zM1484.6,509.3l4.1,-4.1 4.1,4.1 -4.1,4.1zM1485.4,521.8l4.1,-4.1 4.1,4.1 -4.1,4.1zM1486.3,506.6l4.1,-4.1 4.1,4.1 -4.1,4.1zM1487.1,516.7l4.1,-4.1 4.1,4.1 -4.1,4.1zM1487.9,527.6l4.1,-4.1 4.1,4.1 -4.1,4.1zM1488.8,507.9l4.1,-4.1 4.1,4.1 -4.1,4.1zM1489.6,509.8l4.1,-4.1 4.1,4.1 -4.1,4.1zM1490.4,535.3l4.1,-4.1 4.1,4.1 -4.1,4.1zM1491.3,519.9l4.1,-4.1 4.1,4.1 -4.1,4.1zM1492.1,542.6l4.1,-4.1 4.1,4.1 -4.1,4.1zM1492.9,509.0l4.1,-4.1 4.1,4.1 -4.1,4.1zM1493.8,494.2l4.1,-4.1 4.1,4.1 -4.1,4.1zM1494.6,464.1l4.1,-4.1 4.1,4.1 -4.1,4.1zM1495.4,567.5l4.1,-4.1 4.1,4.1 -4.1,4.1zM1496.3,485.0l4.1,-4.1 4.1,4.1 -4.1,4.1zM1497.1,477.8l4.1,-4.1 4.1,4.1 -4.1,4.1zM1497.9,491.4l4.1,-4.1 4.1,4.1 -4.1,4.1zM1498.8,537.9l4.1,-4.1 4.1,4.1 -4.1,4.1zM1499.6,513.4l4.1,-4.1 4.1,4.1 -4.1,4.1zM1500.4,499.5l4.1,-4.1 4.1,4.1 -4.1,4.1zM1501.3,500.7l4.1,-4.1 4.1,4.1 -4.1,4.1zM1502.1,504.2l4.1,-4.1 4.1,4.1 -4.1,4.1zM1502.9,522.8l4.1,-4.1 4.1,4.1 -4.1,4.1zM1503.8,538.3l4.1,-4.1 4.1,4.1 -4.1,4.1zM1504.6,496.8l4.1,-4.1 4.1,4.1 -4.1,4.1zM1505.4,481.2l4.1,-4.1 4.1,4.1 -4.1,4.1zM1506.2,508.6l4.1,-4.1 4.1,4.1 -4.1,4.1zM1507.1,488.6l4.1,-4.1 4.1,4.1 -4.1,4.1zM1507.9,506.2l4.1,-4.1 4.1,4.1 -4.1,4.1zM1508.7,497.6l4.1,-4.1 4.1,4.1 -4.1,4.1zM1509.6,503.6l4.1,-4.1 4.1,4.1 -4.1,4.1zM1510.4,480.0l4.1,-4.1 4.1,4.1 -4.1,4.1zM1511.2,512.2l4.1,-4.1 4.1,4.1 -4.1,4.1zM1512.1,494.6l4.1,-4.1 4.1,4.1 -4.1,4.1zM1512.9,482.3l4.1,-4.1 4.1,4.1 -4.1,4.1zM1513.7,500.0l4.1,-4.1 4.1,4.1 -4.1,4.1zM1514.6,522.6l4.1,-4.1 4.1,4.1 -4.1,4.1zM1515.4,495.2l4.1,-4.1 4.1,4.1 -4.1,4.1zM1516.2,506.6l4.1,-4.1 4.1,4.1 -4.1,4.1zM1517.1,525.4l4.1,-4.1 4.1,4.1 -4.1,4.1zM1517.9,505.1l4.1,-4.1 4.1,4.1 -4.1,4.1zM1518.7,506.3l4.1,-4.1 4.1,4.1 -4.1,4.1zM1519.6,489.5l4.1,-4.1 4.1,4.1 -4.1,4.1zM1520.4,508.1l4.1,-4.1 4.1,4.1 -4.1,4.1zM1521.2,497.0l4.1,-4.1 4.1,4.1 -4.1,4.1zM1522.1,487.3l4.1,-4.1 4.1,4.1 -4.1,4.1zM1522.9,530.9l4.1,-4.1 4.1,4.1 -4.1,4.1zM1523.7,481.1l4.1,-4.1 4.1,4.1 -4.1,4.1zM1524.6,499.3l4.1,-4.1 4.1,4.1 -4.1,4.1zM1525.4,518.5l4.1,-4.1 4.1,4.1 -4.1,4.1zM1526.2,499.7l4.1,-4.1 4.1,4.1 -4.1,4.1zM1527.1,484.9l4.1,-4.1 4.1,4.1 -4.1,4.1zM1527.9,516.6l4.1,-4.1 4.1,4.1 -4.1,4.1zM1528.7,515.4l4.1,-4.1 4.1,4.1 -4.1,4.1zM1529.6,482.6l4.1,-4.1 4.1,4.1 -4.1,4.1zM1530.4,480.1l4.1,-4.1 4.1,4.1 -4.1,4.1zM1531.2,473.7l4.1,-4.1 4.1,4.1 -4.1,4.1zM1532.1,509.1l4.1,-4.1 4.1,4.1 -4.1,4.1zM1532.9,527.6l4.1,-4.1 4.1,4.1 -4.1,4.1zM1533.7,528.8l4.1,-4.1 4.1,4.1 -4.1,4.1zM1534.6,518.7l4.1,-4.1 4.1,4.1 -4.1,4.1zM1535.4,531.5l4.1,-4.1 4.1,4.1 -4.1,4.1zM1536.2,507.3l4.1,-4.1 4.1,4.1 -4.1,4.1zM1537.1,492.6l4.1,-4.1 4.1,4.1 -4.1,4.1zM1537.9,533.7l4.1,-4.1 4.1,4.1 -4.1,4.1zM1538.7,488.7l4.1,-4.1 4.1,4.1 -4.1,4.1zM1539.6,530.8l4.1,-4.1 4.1,4.1 -4.1,4.1z" fill="#0000ff"/><path d="M693.5,158V616M693,604.5H1543M693,615.5H1543" stroke="#000" stroke-width="1" fill="none" shape-rendering="crispEdges"/><path d="M764.5,615v5.5M847.5,615v5.5M930.5,615v5.5M1014.5,615v5.5M1097.5,615v5.5M1180.5,615v5.5M1263.5,615v5.5M1347.5,615v5.5M1430.5,615v5.5M1513.5,615v5.5" stroke="#000" stroke-width="1" shape-rendering="crispEdges"/></svg><div class="t" style="left:641.0px;top:137.8px;height:18px;line-height:18px;font-size:14px;color:#000;font-weight:bold;letter-spacing:1.047px;">2025 Mar 20; (4685) Karetnikov occults UCAC4 568-040821 Observed by Norihiro Manago</div><div class="t" style="left:1326.0px;top:137.8px;height:18px;line-height:18px;font-size:14px;color:#000;letter-spacing:0.506px;">/ PSF-Frame Photometry /</div><div class="t" style="left:650.8px;top:304.0px;height:20px;line-height:20px;font-size:15px;color:#000;transform:scaleX(0.8481);transform-origin:left center;">2000</div><div class="t" style="left:650.8px;top:448.0px;height:20px;line-height:20px;font-size:15px;color:#000;transform:scaleX(0.8481);transform-origin:left center;">1000</div><div class="t" style="left:683.0px;top:591.8px;height:20px;line-height:20px;font-size:15px;color:#000;transform:scaleX(0.7192);transform-origin:left center;">0</div><div class="t" style="left:750.4px;top:618.6px;height:20px;line-height:20px;font-size:15px;color:#000;transform:scaleX(0.8481);transform-origin:left center;">2000</div><div class="t" style="left:833.7px;top:618.6px;height:20px;line-height:20px;font-size:15px;color:#000;transform:scaleX(0.8481);transform-origin:left center;">2100</div><div class="t" style="left:916.9px;top:618.6px;height:20px;line-height:20px;font-size:15px;color:#000;transform:scaleX(0.8481);transform-origin:left center;">2200</div><div class="t" style="left:1000.2px;top:618.6px;height:20px;line-height:20px;font-size:15px;color:#000;transform:scaleX(0.8481);transform-origin:left center;">2300</div><div class="t" style="left:1083.4px;top:618.6px;height:20px;line-height:20px;font-size:15px;color:#000;transform:scaleX(0.8481);transform-origin:left center;">2400</div><div class="t" style="left:1166.7px;top:618.6px;height:20px;line-height:20px;font-size:15px;color:#000;transform:scaleX(0.8481);transform-origin:left center;">2500</div><div class="t" style="left:1250.0px;top:618.6px;height:20px;line-height:20px;font-size:15px;color:#000;transform:scaleX(0.8481);transform-origin:left center;">2600</div><div class="t" style="left:1333.2px;top:618.6px;height:20px;line-height:20px;font-size:15px;color:#000;transform:scaleX(0.8481);transform-origin:left center;">2700</div><div class="t" style="left:1416.5px;top:618.6px;height:20px;line-height:20px;font-size:15px;color:#000;transform:scaleX(0.8481);transform-origin:left center;">2800</div><div class="t" style="left:1499.7px;top:618.6px;height:20px;line-height:20px;font-size:15px;color:#000;transform:scaleX(0.8481);transform-origin:left center;">2900</div><div class="t" style="left:630.0px;top:676.5px;height:19px;line-height:19px;font-size:14.5px;color:#000;letter-spacing:0.117px;">Current-</div><div class="t" style="left:640.0px;top:696.5px;height:19px;line-height:19px;font-size:14.5px;color:#000;transform:scaleX(0.9071);transform-origin:left center;">Frame</div><div class="t" style="left:705.0px;top:676.5px;height:19px;line-height:19px;font-size:14.5px;color:#000;transform:scaleX(0.9384);transform-origin:left center;">Luminous</div><div class="t" style="left:704.5px;top:696.5px;height:19px;line-height:19px;font-size:14.5px;color:#000;letter-spacing:0.000px;">Intensity</div><div class="inp" style="left:630.0px;top:719.6px;width:60.0px;height:22.0px;background:#fff;"></div><div class="inp" style="left:700.5px;top:719.6px;width:69.1px;height:22.0px;background:#fff;"></div><div class="sb" style="left:779.0px;top:681.0px;width:199.8px;height:22.3px;"></div><div class="btn" style="left:779.0px;top:681.0px;width:20.5px;height:22.3px;"><svg style="position:absolute;left:0px;top:0px;left:0;top:0;" width="20.5" height="22.299999999999955" viewBox="0 0 20.5 22.299999999999955"><polygon points="7.05,10.149999999999977 11.45,5.749999999999977 11.45,14.549999999999978" fill="#000"/></svg></div><div class="btn" style="left:799.5px;top:681.0px;width:21.5px;height:22.3px;"></div><div class="btn" style="left:958.0px;top:681.0px;width:20.8px;height:22.3px;"><svg style="position:absolute;left:0px;top:0px;left:0;top:0;" width="20.799999999999955" height="22.299999999999955" viewBox="0 0 20.799999999999955 22.299999999999955"><polygon points="11.599999999999977,10.149999999999977 7.199999999999977,5.749999999999977 7.199999999999977,14.549999999999978" fill="#000"/></svg></div><div class="btn" style="left:780.0px;top:712.3px;width:51.0px;height:30.3px;"><span style="font-size:14.5px;color:#000;line-height:30.3px;transform:scaleX(0.9142);transform-origin:center center;">-10Sec</span></div><div class="btn" style="left:835.5px;top:712.3px;width:40.1px;height:30.3px;"><span style="font-size:14.5px;color:#000;line-height:30.3px;transform:scaleX(0.9240);transform-origin:center center;">-1Sec</span></div><div class="btn" style="left:880.0px;top:712.3px;width:43.3px;height:30.3px;"><span style="font-size:14.5px;color:#000;line-height:30.3px;transform:scaleX(0.9153);transform-origin:center center;">+1Sec</span></div><div class="btn" style="left:927.5px;top:712.3px;width:51.3px;height:30.3px;"><span style="font-size:14.5px;color:#000;line-height:30.3px;transform:scaleX(0.9076);transform-origin:center center;">+10Sec</span></div><div class="t" style="left:987.0px;top:685.5px;height:19px;line-height:19px;font-size:14.5px;color:#000;transform:scaleX(0.9649);transform-origin:left center;">Scale</div><div class="inp" style="left:1035.0px;top:679.0px;width:27.5px;height:22.4px;background:#fff;"><span style="font-size:13px;color:#000;line-height:15.4px;padding-left:4px;">1</span></div><div class="btn" style="left:1064.6px;top:678.0px;width:21.4px;height:14.0px;"><svg style="position:absolute;left:0px;top:0px;left:0;top:0;" width="21.40000000000009" height="14.0" viewBox="0 0 21.40000000000009 14.0"><polygon points="9.700000000000045,4.4 6.500000000000045,7.6 12.900000000000045,7.6" fill="#000"/></svg></div><div class="btn" style="left:1064.6px;top:692.0px;width:21.4px;height:14.0px;"><svg style="position:absolute;left:0px;top:0px;left:0;top:0;" width="21.40000000000009" height="14.0" viewBox="0 0 21.40000000000009 14.0"><polygon points="9.700000000000045,7.6 6.500000000000045,4.4 12.900000000000045,4.4" fill="#000"/></svg></div><div class="t" style="left:990.0px;top:716.5px;height:19px;line-height:19px;font-size:14.5px;color:#000;transform:scaleX(0.9305);transform-origin:left center;">Radius</div><div class="inp" style="left:1035.0px;top:719.6px;width:27.5px;height:22.0px;background:#fff;"><span style="font-size:13px;color:#000;line-height:20.0px;padding-left:2.5px;">3</span></div><div class="btn" style="left:1064.6px;top:717.5px;width:21.4px;height:14.2px;"><svg style="position:absolute;left:0px;top:0px;left:0;top:0;" width="21.40000000000009" height="14.25" viewBox="0 0 21.40000000000009 14.25"><polygon points="9.700000000000045,4.525 6.500000000000045,7.725 12.900000000000045,7.725" fill="#000"/></svg></div><div class="btn" style="left:1064.6px;top:731.8px;width:21.4px;height:14.2px;"><svg style="position:absolute;left:0px;top:0px;left:0;top:0;" width="21.40000000000009" height="14.25" viewBox="0 0 21.40000000000009 14.25"><polygon points="9.700000000000045,7.725 6.500000000000045,4.525 12.900000000000045,4.525" fill="#000"/></svg></div><div class="inp" style="left:630.5px;top:755.0px;width:14.0px;height:14.0px;background:#fff;"><svg width="10" height="10" viewBox="0 0 10 10" style="position:absolute;left:2px;top:2px"><path d="M1.5 4.2 L4 6.8 L8.6 1.8" fill="none" stroke="#000" stroke-width="2"/></svg></div><div class="t" style="left:652.0px;top:752.5px;height:19px;line-height:19px;font-size:14.5px;color:#000;letter-spacing:-0.068px;">Show Image of Clicked point</div><div class="inp" style="left:630.5px;top:775.0px;width:14.0px;height:14.0px;background:#fff;"></div><div class="t" style="left:653.0px;top:772.5px;height:19px;line-height:19px;font-size:14.5px;color:#000;transform:scaleX(0.9817);transform-origin:left center;">Reproduce Aperture Position</div><div class="btn" style="left:848.0px;top:753.0px;width:90.4px;height:29.4px;"><span style="font-size:14.5px;color:#000;line-height:29.4px;transform:scaleX(0.9434);transform-origin:center center;">Save Image</span></div><div class="btn" style="left:945.3px;top:753.0px;width:146.7px;height:29.4px;"><span style="font-size:14.5px;color:#000;line-height:29.4px;letter-spacing:-0.042px;margin-left:-0.021px;">Copy to ClipBoard</span></div><div class="grp" style="left:1093.5px;top:681.0px;width:61.1px;height:100.0px;"></div><div class="" style="left:1100.5px;top:674.0px;width:46.0px;height:16.0px;position:absolute;background:#f0f0f0;"></div><div class="t" style="left:1102.5px;top:672.5px;height:19px;line-height:19px;font-size:14.5px;color:#000;letter-spacing:0.394px;">Y Axis</div><div class="t" style="left:1100.5px;top:686.5px;height:19px;line-height:19px;font-size:14.5px;color:#000;transform:scaleX(0.8988);transform-origin:left center;">Min</div><div class="t" style="left:1126.0px;top:686.5px;height:19px;line-height:19px;font-size:14.5px;color:#000;transform:scaleX(0.8944);transform-origin:left center;">Max</div><div class="btn" style="left:1099.0px;top:703.0px;width:21.0px;height:21.5px;"><svg style="position:absolute;left:0px;top:0px;left:0;top:0;" width="21" height="21.5" viewBox="0 0 21 21.5"><polygon points="9.5,7.55 5.1,11.95 13.9,11.95" fill="#000"/></svg></div><div class="btn" style="left:1099.0px;top:726.0px;width:21.0px;height:22.5px;"></div><div class="btn" style="left:1099.0px;top:752.0px;width:21.0px;height:22.0px;"><svg style="position:absolute;left:0px;top:0px;left:0;top:0;" width="21" height="22" viewBox="0 0 21 22"><polygon points="9.5,12.2 5.1,7.8 13.9,7.8" fill="#000"/></svg></div><div class="btn" style="left:1126.0px;top:703.0px;width:22.0px;height:21.5px;"><svg style="position:absolute;left:0px;top:0px;left:0;top:0;" width="22" height="21.5" viewBox="0 0 22 21.5"><polygon points="10.0,7.55 5.6,11.95 14.4,11.95" fill="#000"/></svg></div><div class="btn" style="left:1126.0px;top:726.0px;width:22.0px;height:22.5px;"></div><div class="btn" style="left:1126.0px;top:752.0px;width:22.0px;height:22.0px;"><svg style="position:absolute;left:0px;top:0px;left:0;top:0;" width="22" height="22" viewBox="0 0 22 22"><polygon points="10.0,12.2 5.6,7.8 14.4,7.8" fill="#000"/></svg></div><div class="grp" style="left:1157.7px;top:681.0px;width:75.8px;height:65.0px;"></div><div class="" style="left:1165.5px;top:674.0px;width:29.0px;height:16.0px;position:absolute;background:#f0f0f0;"></div><div class="t" style="left:1167.5px;top:672.5px;height:19px;line-height:19px;font-size:14.5px;color:#000;transform:scaleX(0.9119);transform-origin:left center;">Line</div><div class="inp" style="left:1168.0px;top:691.0px;width:14.0px;height:14.0px;background:#fff;"><svg width="10" height="10" viewBox="0 0 10 10" style="position:absolute;left:2px;top:2px"><path d="M1.5 4.2 L4 6.8 L8.6 1.8" fill="none" stroke="#000" stroke-width="2"/></svg></div><div class="t" style="left:1190.5px;top:687.5px;height:19px;line-height:19px;font-size:14.5px;color:#000;letter-spacing:-0.131px;">Axis</div><div class="inp" style="left:1168.0px;top:709.0px;width:14.0px;height:14.0px;background:#fff;"><svg width="10" height="10" viewBox="0 0 10 10" style="position:absolute;left:2px;top:2px"><path d="M1.5 4.2 L4 6.8 L8.6 1.8" fill="none" stroke="#000" stroke-width="2"/></svg></div><div class="t" style="left:1190.5px;top:706.5px;height:19px;line-height:19px;font-size:14.5px;color:#000;transform:scaleX(0.9305);transform-origin:left center;">Data</div><div class="btn" style="left:1167.8px;top:723.8px;width:56.9px;height:17.2px;"><span style="font-size:14.5px;color:#000;line-height:17.2px;letter-spacing:-0.049px;margin-left:-0.024px;">Hilight</span></div><div class="btn" style="left:1158.0px;top:753.0px;width:80.0px;height:33.0px;"><span style="font-size:14.5px;color:#000;line-height:33.0px;transform:scaleX(0.9588);transform-origin:center center;">[3D] Image</span></div><div class="grp" style="left:1238.0px;top:681.0px;width:69.8px;height:65.0px;"></div><div class="" style="left:1245.5px;top:674.0px;width:39.0px;height:16.0px;position:absolute;background:#f0f0f0;"></div><div class="t" style="left:1247.5px;top:672.5px;height:19px;line-height:19px;font-size:14.5px;color:#000;transform:scaleX(0.9443);transform-origin:left center;">Width</div><svg style="position:absolute;left:1248.1px;top:695.2px" width="16" height="16" viewBox="0 0 16 16"><circle cx="8" cy="8" r="6" fill="#fff"/><path d="M3.4 12.6 A6.5 6.5 0 0 1 12.6 3.4" fill="none" stroke="#808080" stroke-width="1.2"/><path d="M12.6 3.4 A6.5 6.5 0 0 1 3.4 12.6" fill="none" stroke="#fff" stroke-width="1.2"/><path d="M4.2 11.8 A5.4 5.4 0 0 1 11.8 4.2" fill="none" stroke="#404040" stroke-width="1"/><path d="M11.8 4.2 A5.4 5.4 0 0 1 4.2 11.8" fill="none" stroke="#e3e3e3" stroke-width="1"/></svg><div class="t" style="left:1270.5px;top:693.5px;height:19px;line-height:19px;font-size:14.5px;color:#000;transform:scaleX(0.9025);transform-origin:left center;">Part</div><svg style="position:absolute;left:1248.1px;top:721.2px" width="16" height="16" viewBox="0 0 16 16"><circle cx="8" cy="8" r="6" fill="#fff"/><path d="M3.4 12.6 A6.5 6.5 0 0 1 12.6 3.4" fill="none" stroke="#808080" stroke-width="1.2"/><path d="M12.6 3.4 A6.5 6.5 0 0 1 3.4 12.6" fill="none" stroke="#fff" stroke-width="1.2"/><path d="M4.2 11.8 A5.4 5.4 0 0 1 11.8 4.2" fill="none" stroke="#404040" stroke-width="1"/><path d="M11.8 4.2 A5.4 5.4 0 0 1 4.2 11.8" fill="none" stroke="#e3e3e3" stroke-width="1"/><circle cx="8" cy="8" r="2.3" fill="#000"/></svg><div class="t" style="left:1270.5px;top:720.0px;height:19px;line-height:19px;font-size:14.5px;color:#000;transform:scaleX(0.8976);transform-origin:left center;">Entire</div><div class="btn" style="left:1315.0px;top:677.0px;width:179.0px;height:21.7px;"><span style="font-size:14.5px;color:#000;line-height:21.7px;letter-spacing:0.018px;margin-left:0.009px;">Correction for absorption</span></div><div class="btn" style="left:1315.0px;top:702.6px;width:128.7px;height:21.2px;"><span style="font-size:14.5px;color:#000;line-height:21.2px;transform:scaleX(0.9775);transform-origin:center center;">Noise Reduction</span></div><div class="btn" style="left:1447.9px;top:702.6px;width:46.1px;height:21.2px;"><span style="font-size:14.5px;color:#000;line-height:19.2px;transform:scaleX(0.9504);transform-origin:center center;">Reset</span></div><div class="btn" style="left:1510.8px;top:677.0px;width:44.2px;height:30.6px;"><span style="font-size:14.5px;color:#000;line-height:30.6px;transform:scaleX(0.9749);transform-origin:center center;">close</span></div><div class="inp" style="left:1313.4px;top:729.0px;width:14.0px;height:14.0px;background:#fff;"><svg width="10" height="10" viewBox="0 0 10 10" style="position:absolute;left:2px;top:2px"><path d="M1.5 4.2 L4 6.8 L8.6 1.8" fill="none" stroke="#000" stroke-width="2"/></svg></div><div class="t" style="left:1336.0px;top:726.5px;height:19px;line-height:19px;font-size:14.5px;color:#000;transform:scaleX(0.8906);transform-origin:left center;">Information</div><div class="grp" style="left:1438.0px;top:741.8px;width:118.0px;height:43.2px;"></div><div class="" style="left:1445.0px;top:734.8px;width:45.0px;height:16.0px;position:absolute;background:#f0f0f0;"></div><div class="t" style="left:1447.0px;top:733.3px;height:19px;line-height:19px;font-size:14.5px;color:#000;transform:scaleX(0.9784);transform-origin:left center;">Object</div><div class="" style="left:1498.0px;top:724.0px;width:42.0px;height:19.0px;background:#f0f0f0;"></div><div class="inp" style="left:1501.0px;top:725.6px;width:14.0px;height:14.0px;background:#fff;"><svg width="10" height="10" viewBox="0 0 10 10" style="position:absolute;left:2px;top:2px"><path d="M1.5 4.2 L4 6.8 L8.6 1.8" fill="none" stroke="#000" stroke-width="2"/></svg></div><div class="t" style="left:1522.0px;top:722.5px;height:19px;line-height:19px;font-size:14.5px;color:#000;transform:scaleX(0.8966);transform-origin:left center;">ID</div><div class="btn pr" style="left:1445.0px;top:755.0px;width:24.0px;height:21.0px;"><span style="font-size:14.5px;color:#000;line-height:21.0px;">A</span></div><div class="btn pr" style="left:1472.8px;top:755.0px;width:23.6px;height:21.0px;"><span style="font-size:14.5px;color:#000;line-height:21.0px;">B</span></div><div class="btn" style="left:1500.0px;top:755.0px;width:24.6px;height:22.0px;"><span style="font-size:14.5px;color:#b4b4b4;line-height:22.0px;">C</span></div><div class="btn" style="left:1527.7px;top:755.0px;width:21.3px;height:22.0px;"><span style="font-size:14.5px;color:#000;line-height:22.0px;">L</span></div><div class="btn" style="left:920.8px;top:793.0px;width:150.2px;height:33.3px;"><span style="font-size:14.5px;color:#000;line-height:33.3px;font-weight:bold;transform:scaleX(0.9738);transform-origin:center center;">Lunar Identification</span></div><div class="btn" style="left:1083.5px;top:793.0px;width:209.8px;height:33.3px;"><span style="font-size:17px;color:#000;line-height:33.3px;font-weight:bold;letter-spacing:0.367px;margin-left:0.184px;">Diffraction Analysis</span></div><div class="btn" style="left:1300.4px;top:793.0px;width:130.6px;height:33.3px;"><span style="font-size:17px;color:#000;line-height:33.3px;font-weight:bold;letter-spacing:-0.103px;margin-left:-0.051px;">Make Report</span></div><div class="" style="left:620.0px;top:834.5px;width:942.0px;height:2.0px;border-top:1px solid #a0a0a0;border-bottom:1px solid #fff;"></div><div class="grp" style="left:630.6px;top:869.6px;width:919.1px;height:111.7px;"></div><div class="" style="left:638.0px;top:862.6px;width:84.0px;height:16.0px;position:absolute;background:#f0f0f0;"></div><div class="t" style="left:640.0px;top:861.1px;height:19px;line-height:19px;font-size:14.5px;color:#000;letter-spacing:0.095px;">S/N vs Error</div><div class="t" style="left:641.7px;top:881.0px;height:21px;line-height:21px;font-size:16.5px;color:#000;font-weight:bold;letter-spacing:-0.082px;">S/N (Full drop)</div><div class="inp" style="left:770.7px;top:880.0px;width:69.3px;height:32.0px;background:#fff;"><span style="font-size:19px;color:#1010ff;line-height:31.0px;padding-left:8px;font-weight:bold;letter-spacing:0.294px;">2.6</span></div><div class="t" style="left:871.0px;top:881.0px;height:21px;line-height:21px;font-size:16.5px;color:#000;font-weight:bold;transform:scaleX(0.9453);transform-origin:left center;">S/N</div><div class="inp" style="left:910.0px;top:879.0px;width:60.0px;height:30.5px;background:#fff;"><span style="font-size:17.5px;color:#ff1010;line-height:27.5px;padding-left:3px;font-weight:bold;">2.6</span></div><div class="t" style="left:980.8px;top:881.0px;height:21px;line-height:21px;font-size:16.5px;color:#000;font-weight:bold;letter-spacing:0.122px;">expected on</div><div class="inp" style="left:1090.5px;top:879.0px;width:59.2px;height:30.8px;background:#fff;"><span style="font-size:17.5px;color:#000;line-height:28.8px;padding-left:2px;font-weight:bold;">4.6</span></div><div class="t" style="left:1160.4px;top:881.0px;height:21px;line-height:21px;font-size:16.5px;color:#000;font-weight:bold;letter-spacing:0.108px;">Mag drop</div><div class="t" style="left:1280.4px;top:881.0px;height:21px;line-height:21px;font-size:16.5px;color:#000;font-weight:bold;letter-spacing:0.156px;">Frame exposure</div><div class="inp" style="left:1430.0px;top:879.0px;width:59.7px;height:30.8px;background:#fff;"><span style="font-size:17.5px;color:#000;line-height:28.8px;padding-left:3px;font-weight:bold;">34.4</span></div><div class="t" style="left:1500.4px;top:881.0px;height:21px;line-height:21px;font-size:16.5px;color:#000;font-weight:bold;transform:scaleX(0.9597);transform-origin:left center;">msec</div><div class="t" style="left:640.6px;top:921.0px;height:21px;line-height:21px;font-size:16.5px;color:#000;font-weight:bold;letter-spacing:-0.115px;">Fresnel</div><div class="t" style="left:640.6px;top:941.0px;height:21px;line-height:21px;font-size:16.5px;color:#000;font-weight:bold;letter-spacing:-0.068px;">Number</div><div class="inp" style="left:710.0px;top:929.0px;width:60.0px;height:30.5px;background:#fff;"><span style="font-size:17.5px;color:#000;line-height:27.5px;padding-left:3px;font-weight:bold;">435</span></div><div class="t" style="left:790.5px;top:921.0px;height:21px;line-height:21px;font-size:16.5px;color:#000;font-weight:bold;letter-spacing:0.191px;">Lower Limit</div><div class="t" style="left:800.5px;top:941.0px;height:21px;line-height:21px;font-size:16.5px;color:#000;font-weight:bold;letter-spacing:-0.020px;">for detect</div><div class="inp" style="left:890.0px;top:929.0px;width:70.0px;height:30.5px;background:#fff;"><span style="font-size:17.5px;color:#1010ff;line-height:27.5px;padding-left:3px;font-weight:bold;">1480</span></div><div class="t" style="left:961.0px;top:931.5px;height:21px;line-height:21px;font-size:16.5px;color:#000;font-weight:bold;transform:scaleX(0.9597);transform-origin:left center;">msec</div><div class="t" style="left:1020.5px;top:922.5px;height:21px;line-height:21px;font-size:16.5px;color:#000;font-weight:bold;letter-spacing:-0.024px;">Predicted</div><div class="t" style="left:1020.5px;top:941.0px;height:20px;line-height:20px;font-size:15.5px;color:#000;font-weight:bold;transform:scaleX(0.9346);transform-origin:left center;">Time Error</div><div class="inp" style="left:1110.3px;top:929.0px;width:79.3px;height:30.5px;background:#fff;"><span style="font-size:17.5px;color:#ff1010;line-height:27.5px;padding-left:3px;font-weight:bold;">525</span></div><div class="t" style="left:1190.7px;top:941.0px;height:21px;line-height:21px;font-size:16.5px;color:#000;font-weight:bold;transform:scaleX(0.9597);transform-origin:left center;">msec</div><div class="t" style="left:1250.0px;top:921.0px;height:21px;line-height:21px;font-size:16.5px;color:#000;font-weight:bold;letter-spacing:-0.051px;">Expected Error for</div><div class="t" style="left:1250.0px;top:941.0px;height:21px;line-height:21px;font-size:16.5px;color:#000;font-weight:bold;letter-spacing:0.151px;">Analyzing event time</div><div class="inp" style="left:1430.0px;top:929.0px;width:59.7px;height:30.5px;background:#fff;"><span style="font-size:17.5px;color:#000;line-height:27.5px;padding-left:3px;font-weight:bold;">25.4</span></div><div class="t" style="left:1496.6px;top:941.0px;height:21px;line-height:21px;font-size:16.5px;color:#000;font-weight:bold;transform:scaleX(0.9715);transform-origin:left center;">msec</div></div></div><div class="win" style="left:1543.5px;top:14.4px;width:290px;height:340.4px;border-radius:8px;background:#fff;box-shadow:0 0 0 1px rgba(0,0,0,.25),0 10px 30px rgba(0,0,0,.38);"><div style="left:-1543.5px;top:-14.4px;width:1816px;height:1001px"><div class="" style="left:1543.0px;top:14.0px;width:290.0px;height:31.5px;background:#e9f1f8;"></div><svg style="left:1547px;top:19px" width="20" height="20" viewBox="0 0 20 20"><defs><clipPath id="icl"><path d="M0.5,0.3H19.6V19.8L17,18.2 11,19 9,19.8H4.5Q0.5,19.5 0.5,16Z"/></clipPath></defs><g clip-path="url(#icl)"><rect x="0" y="0" width="20" height="20" fill="#00008e"/><g fill="#0a0aff"><circle cx="1.8" cy="6" r="2.4"/><circle cx="8.8" cy="4.6" r="1.3"/><circle cx="17.3" cy="8" r="1.8"/><circle cx="2.2" cy="14.2" r="2.2"/><circle cx="15" cy="15" r="2"/><rect x="17.4" y="12" width="2.6" height="8"/><circle cx="12" cy="17.3" r="1.2"/></g><g fill="#7c86e8"><rect x="1.5" y="2" width="1.5" height="1.6"/><rect x="9" y="1.6" width="1.4" height="1.5"/><rect x="11.6" y="1.3" width="1.4" height="1.5"/><rect x="14.4" y="1.6" width="1.5" height="1.6"/><rect x="17" y="2" width="1.5" height="1.6"/><rect x="2.4" y="16.2" width="1.6" height="1.4"/><rect x="8" y="17.6" width="1.5" height="1.3"/><rect x="10.8" y="16.6" width="1.4" height="1.3"/><rect x="13.4" y="16.8" width="1.4" height="1.3"/><rect x="15.6" y="15.6" width="1.4" height="1.3"/></g><rect x="4" y="19" width="7" height="1" fill="#000"/><rect x="0" y="0" width="1.2" height="3" fill="#000"/><path d="M0,10.1 L3.2,9.6 Q5.2,8.6 5.5,6 L6.2,1 L7.1,6 Q7.6,8.8 10.5,9.7 L20,10.0 L20,11.3 L10.5,11.5 Q7.8,12.1 7.3,14 L6.8,17.8 L5.4,17.8 L5.2,14 Q4.8,12.2 3.2,11.7 L0,11.5 Z" fill="#ffff00"/></g></svg><div class="t" style="left:1574.3px;top:19.3px;height:20px;line-height:20px;font-size:15.5px;color:#000;transform:scaleX(0.9791);transform-origin:left center;">Operation guide</div><svg style="left:1700px;top:14px" width="116" height="32" viewBox="1700 14 116 32" fill="none" stroke="#000" stroke-width="1.2"><path d="M1742 29.5h12"/><rect x="1800.5" y="24.5" width="11" height="11" rx="2"/></svg><div class="" style="left:1804.0px;top:45.5px;width:14.0px;height:310.0px;background:#f0f0f0;"></div><div class="" style="left:1808.5px;top:284.5px;width:12.0px;height:65.0px;background:#f4f4f4;border:1px solid #adadad;"></div><svg style="left:1544px;top:46px" width="260" height="308" viewBox="1544 46 260 308"><path d="M1580.5,81.3H1792.5" stroke="#00ff00" stroke-width="1.3"/><path d="M1580.5,321.4H1792.5" stroke="#808080" stroke-width="1.3"/><path d="M1580.5,233.3L1582.5,233.3L1584.5,233.3L1586.5,233.6L1588.5,234.2L1590.5,235.0L1592.5,235.8L1594.5,236.7L1596.5,237.6L1598.5,238.7L1600.5,239.9L1602.5,241.2L1604.5,242.8L1606.5,244.5L1608.5,246.3L1610.5,248.3L1612.5,250.3L1614.5,252.3L1616.5,254.3L1618.5,256.2L1620.5,258.0L1622.5,259.6L1624.5,261.1L1626.5,262.4L1628.5,263.5L1630.5,264.4L1632.5,265.3L1634.5,265.9L1636.5,266.5L1638.5,267.0L1640.5,267.4L1642.5,267.7L1644.5,267.9L1646.5,268.1L1648.5,268.3L1650.5,268.4L1652.5,268.6L1654.5,268.6L1656.5,268.7L1658.5,268.8L1660.5,268.8L1662.5,268.9L1664.5,268.9L1666.5,268.9L1668.5,268.9L1670.5,268.9L1672.5,269.0L1674.5,269.0L1676.5,269.0L1678.5,269.0L1680.5,269.0L1682.5,269.0L1684.5,269.0L1686.5,269.0L1688.5,269.0L1690.5,269.0L1692.5,269.0L1694.5,269.0L1696.5,269.0L1698.5,269.0L1700.5,269.0L1702.5,269.0L1704.5,269.0L1706.5,269.0L1708.5,269.0L1710.5,269.0L1712.5,269.0L1714.5,269.0L1716.5,269.0L1718.5,269.0L1720.5,269.0L1722.5,269.0L1724.5,269.0L1726.5,269.0L1728.5,269.0L1730.5,269.0L1732.5,269.0L1734.5,269.0L1736.5,269.0L1738.5,269.0L1740.5,269.0L1742.5,269.0L1744.5,269.0L1746.5,269.0L1748.5,269.0L1750.5,269.0L1752.5,269.0L1754.5,269.0L1756.5,269.0L1758.5,269.0L1760.5,269.0L1762.5,269.0L1764.5,269.0L1766.5,269.0L1768.5,269.0L1770.5,269.0L1772.5,269.0L1774.5,269.0L1776.5,269.0L1778.5,269.0L1780.5,269.0L1782.5,269.0L1784.5,269.0L1786.5,269.0" stroke="#ff2828" stroke-width="1.2" fill="none"/><g fill="none" stroke="#0808ff" stroke-width="1"><circle cx="1583" cy="236.1" r="2"/><circle cx="1597.9" cy="228.4" r="2"/><circle cx="1604.2" cy="227.1" r="2"/><circle cx="1599.2" cy="236.1" r="2"/><circle cx="1605.3" cy="233.6" r="2"/><circle cx="1609.3" cy="232" r="2"/><circle cx="1601.5" cy="242.4" r="2"/><circle cx="1608.2" cy="244.6" r="2"/><circle cx="1611.8" cy="243.4" r="2"/><circle cx="1616.7" cy="236.1" r="2"/><circle cx="1620.3" cy="228.4" r="2"/><circle cx="1624.2" cy="233.6" r="2"/><circle cx="1620.3" cy="241" r="2"/><circle cx="1623" cy="243.7" r="2"/><circle cx="1641.6" cy="234.4" r="2"/><circle cx="1644.2" cy="237.4" r="2"/><circle cx="1664.2" cy="239.7" r="2"/><circle cx="1662.9" cy="248.5" r="2"/><circle cx="1670.4" cy="248.5" r="2"/><circle cx="1690.4" cy="252.1" r="2"/><circle cx="1624" cy="252" r="2"/><circle cx="1628.9" cy="250.9" r="2"/><circle cx="1633" cy="250.9" r="2"/><circle cx="1636.5" cy="251.3" r="2"/><circle cx="1639.7" cy="249.5" r="2"/><circle cx="1637.9" cy="256.3" r="2"/><circle cx="1623.9" cy="258.5" r="2"/><circle cx="1628" cy="257.2" r="2"/><circle cx="1620.3" cy="263.5" r="2"/><circle cx="1626.6" cy="265.9" r="2"/><circle cx="1651.3" cy="253.1" r="2"/><circle cx="1647.3" cy="256" r="2"/><circle cx="1650" cy="256" r="2"/><circle cx="1655.4" cy="255.8" r="2"/><circle cx="1656.7" cy="259" r="2"/><circle cx="1661.7" cy="258.5" r="2"/><circle cx="1669.3" cy="257.2" r="2"/><circle cx="1681.7" cy="255.4" r="2"/><circle cx="1696.7" cy="257.2" r="2"/><circle cx="1700.3" cy="264.7" r="2"/><circle cx="1702.9" cy="278.8" r="2"/><circle cx="1705.5" cy="275.6" r="2"/><circle cx="1709.3" cy="279.7" r="2"/><circle cx="1679.2" cy="281" r="2"/><circle cx="1652.7" cy="276.1" r="2"/><circle cx="1665.3" cy="277.4" r="2"/><circle cx="1666.6" cy="272.9" r="2"/><circle cx="1669.3" cy="276.1" r="2"/><circle cx="1636.5" cy="271.1" r="2"/><circle cx="1639.2" cy="271.1" r="2"/><circle cx="1684.6" cy="267.1" r="2"/><circle cx="1671.0" cy="267.2" r="2"/><circle cx="1653.1" cy="262.5" r="2"/><circle cx="1658.4" cy="265.9" r="2"/><circle cx="1657.5" cy="265.9" r="2"/><circle cx="1661.6" cy="277.0" r="2"/><circle cx="1685.5" cy="263.7" r="2"/><circle cx="1644.3" cy="271.7" r="2"/><circle cx="1660.7" cy="267.9" r="2"/><circle cx="1684.9" cy="265.6" r="2"/><circle cx="1683.0" cy="267.9" r="2"/><circle cx="1674.0" cy="267.6" r="2"/><circle cx="1646.6" cy="265.9" r="2"/><circle cx="1659.9" cy="264.9" r="2"/><circle cx="1689.5" cy="264.3" r="2"/><circle cx="1695.7" cy="264.2" r="2"/><circle cx="1680.0" cy="267.3" r="2"/><circle cx="1648.3" cy="265.5" r="2"/><circle cx="1690.0" cy="270.4" r="2"/><circle cx="1648.4" cy="272.3" r="2"/><circle cx="1658.7" cy="265.7" r="2"/><circle cx="1659.5" cy="264.6" r="2"/><circle cx="1661.5" cy="272.1" r="2"/><circle cx="1645.7" cy="265.7" r="2"/><circle cx="1649.8" cy="267.0" r="2"/><circle cx="1682.8" cy="264.2" r="2"/><circle cx="1643.4" cy="266.6" r="2"/><circle cx="1661.8" cy="272.0" r="2"/><circle cx="1639.2" cy="270.1" r="2"/><circle cx="1665.8" cy="261.0" r="2"/><circle cx="1644.0" cy="262.1" r="2"/><circle cx="1641.0" cy="264.1" r="2"/><circle cx="1686.1" cy="264.6" r="2"/><circle cx="1651.0" cy="269.2" r="2"/><circle cx="1686.0" cy="257.0" r="2"/><circle cx="1654.6" cy="271.9" r="2"/><circle cx="1685.4" cy="260.7" r="2"/><circle cx="1664.6" cy="270.8" r="2"/><circle cx="1677.9" cy="260.2" r="2"/><circle cx="1695.5" cy="265.1" r="2"/><circle cx="1651.0" cy="270.0" r="2"/><circle cx="1675.6" cy="266.2" r="2"/><circle cx="1643.8" cy="271.4" r="2"/><circle cx="1666.0" cy="277.0" r="2"/><circle cx="1648.4" cy="263.6" r="2"/><circle cx="1683.5" cy="261.5" r="2"/><circle cx="1645.2" cy="260.6" r="2"/><circle cx="1664.8" cy="259.1" r="2"/><circle cx="1643.1" cy="264.7" r="2"/><circle cx="1666.4" cy="258.6" r="2"/><circle cx="1690.4" cy="257.0" r="2"/><circle cx="1683.6" cy="263.0" r="2"/><circle cx="1666.5" cy="273.4" r="2"/><circle cx="1692.4" cy="267.2" r="2"/><circle cx="1667.4" cy="260.1" r="2"/><circle cx="1654.0" cy="261.9" r="2"/><circle cx="1647.2" cy="269.7" r="2"/><circle cx="1686.4" cy="266.9" r="2"/></g></svg></div></div></body></html>
